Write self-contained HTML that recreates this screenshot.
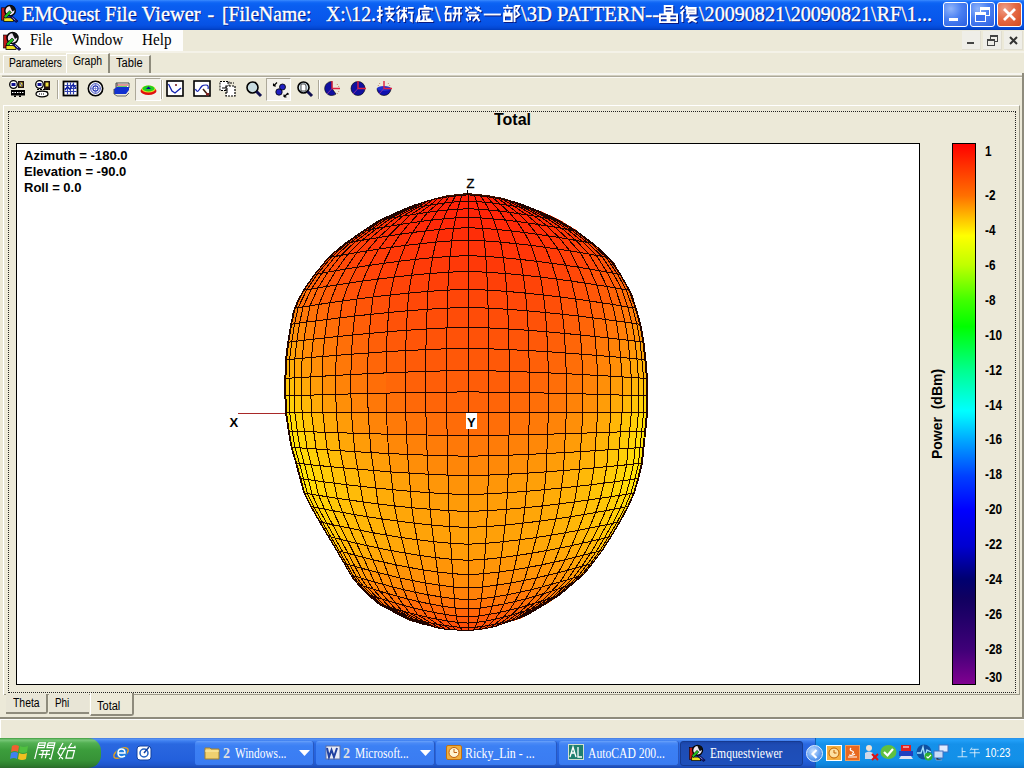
<!DOCTYPE html><html><head><meta charset="utf-8"><style>
*{margin:0;padding:0;box-sizing:border-box}
html,body{width:1024px;height:768px;overflow:hidden;background:#ECE9D8}
body{position:relative;font-family:"Liberation Sans",sans-serif;}
.a{position:absolute}
</style></head><body><div class="a" style="left:0;top:0;width:1024px;height:30px;background:linear-gradient(#3d90ff 0px,#2475fa 1px,#0c64f4 3px,#0a5ef0 6px,#0858ec 18px,#0652e4 25px,#0448d4 28px,#003cbc 30px)"></div>
<svg class="a" style="left:1px;top:4px" width="19" height="19" viewBox="0 0 20 20"><rect x="0.5" y="4" width="4" height="13" fill="#c01818" stroke="#000" stroke-width="0.6"/><rect x="3" y="14.5" width="10" height="4" fill="#f0e020" stroke="#000" stroke-width="0.8"/><circle cx="9.5" cy="7" r="5.5" fill="#f0e8f0" stroke="#000" stroke-width="1.5"/><path d="M9 1.5Q14 1 15 6L12 8L10 4Z" fill="#111"/><path d="M3 13L9 7L11 9L5 15Z" fill="#20c020" stroke="#000" stroke-width="0.6"/><path d="M11 12L18 18L16 19.5L9.5 14Z" fill="#101070" stroke="#000" stroke-width="0.5"/><path d="M12 14L15 17" stroke="#c0c0ff" stroke-width="0.8"/></svg>
<div class="a" style="left:22px;top:4.25px;font:20px/20px 'Liberation Serif',serif;color:#fff;white-space:nowrap;transform:scaleX(1.0175);transform-origin:0 0;text-shadow:1px 1px 0 #0a1a80;-webkit-text-stroke:0.35px #fff;">EMQuest&nbsp;File&nbsp;Viewer</div>
<div class="a" style="left:207.5px;top:4.25px;font:20px/20px 'Liberation Serif',serif;color:#fff;white-space:nowrap;text-shadow:1px 1px 0 #0a1a80;-webkit-text-stroke:0.35px #fff;">-</div>
<div class="a" style="left:221.5px;top:4.25px;font:20px/20px 'Liberation Serif',serif;color:#fff;white-space:nowrap;transform:scaleX(0.9826);transform-origin:0 0;text-shadow:1px 1px 0 #0a1a80;-webkit-text-stroke:0.35px #fff;">[FileName:</div>
<div class="a" style="left:326px;top:4.25px;font:20px/20px 'Liberation Serif',serif;color:#fff;white-space:nowrap;transform:scaleX(0.9890);transform-origin:0 0;text-shadow:1px 1px 0 #0a1a80;-webkit-text-stroke:0.35px #fff;">X:\12.</div>
<svg class="a" style="left:376px;top:5px;overflow:visible" width="58.800000000000004" height="19"><path transform="translate(1 1) translate(0.0 0) scale(0.95)" d="M1 6H7M4 1V17L2 16M1 13L7 10M9 4H19M14 1V8M10 9H18L11 17M12 11L19 17" fill="none" stroke="#0a1a80" stroke-width="2.0"/><path transform="translate(0.0 0) scale(0.95)" d="M1 6H7M4 1V17L2 16M1 13L7 10M9 4H19M14 1V8M10 9H18L11 17M12 11L19 17" fill="none" stroke="#fff" stroke-width="2.0"/><path transform="translate(1 1) translate(19.6 0) scale(0.95)" d="M4 1L1 4M5 5L1 9M3 8V18M6 6H12M9 2V18M8 9L5 15M10 9L12 14M11 3L12 4M13 3H19M13 8H19M17 8V17L15 16" fill="none" stroke="#0a1a80" stroke-width="2.0"/><path transform="translate(19.6 0) scale(0.95)" d="M4 1L1 4M5 5L1 9M3 8V18M6 6H12M9 2V18M8 9L5 15M10 9L12 14M11 3L12 4M13 3H19M13 8H19M17 8V17L15 16" fill="none" stroke="#fff" stroke-width="2.0"/><path transform="translate(1 1) translate(39.2 0) scale(0.95)" d="M10 0V3H15M4 4H18V6M4 4V10L1 18M7 7H15M7 10H15M5 11L4 17H19M9 10V15L7 17M12 10V14Q12 16 17 15" fill="none" stroke="#0a1a80" stroke-width="2.0"/><path transform="translate(39.2 0) scale(0.95)" d="M10 0V3H15M4 4H18V6M4 4V10L1 18M7 7H15M7 10H15M5 11L4 17H19M9 10V15L7 17M12 10V14Q12 16 17 15" fill="none" stroke="#fff" stroke-width="2.0"/></svg>
<div class="a" style="left:435px;top:4.25px;font:20px/20px 'Liberation Serif',serif;color:#fff;white-space:nowrap;text-shadow:1px 1px 0 #0a1a80;-webkit-text-stroke:0.35px #fff;">\</div>
<svg class="a" style="left:444px;top:5px;overflow:visible" width="77.6" height="19"><path transform="translate(1 1) translate(0.0 0) scale(0.95)" d="M1 2H8M4 2L1 10M2 9H7V16H2V9M10 3H19M9 9H19M12 3V11L10 17M16 3V17" fill="none" stroke="#0a1a80" stroke-width="2.0"/><path transform="translate(0.0 0) scale(0.95)" d="M1 2H8M4 2L1 10M2 9H7V16H2V9M10 3H19M9 9H19M12 3V11L10 17M16 3V17" fill="none" stroke="#fff" stroke-width="2.0"/><path transform="translate(1 1) translate(19.4 0) scale(0.95)" d="M2 2L5 5L2 7M6 2L9 4M12 2L16 6M17 2L14 4L19 7M5 8H14M4 11H15M3 14L5 17M7 10V16M12 10L17 17M16 10L10 17" fill="none" stroke="#0a1a80" stroke-width="2.0"/><path transform="translate(19.4 0) scale(0.95)" d="M2 2L5 5L2 7M6 2L9 4M12 2L16 6M17 2L14 4L19 7M5 8H14M4 11H15M3 14L5 17M7 10V16M12 10L17 17M16 10L10 17" fill="none" stroke="#fff" stroke-width="2.0"/><path transform="translate(1 1) translate(38.8 0) scale(0.95)" d="M1 10H19" fill="none" stroke="#0a1a80" stroke-width="2.0"/><path transform="translate(38.8 0) scale(0.95)" d="M1 10H19" fill="none" stroke="#fff" stroke-width="2.0"/><path transform="translate(1 1) translate(58.199999999999996 0) scale(0.95)" d="M5 0L6 2M1 3H11M3 5L4 8M8 5L7 8M1 9H11M2 11H10V17H2ZM13 1V18M13 1H18L15 6L18 10L14 13" fill="none" stroke="#0a1a80" stroke-width="2.0"/><path transform="translate(58.199999999999996 0) scale(0.95)" d="M5 0L6 2M1 3H11M3 5L4 8M8 5L7 8M1 9H11M2 11H10V17H2ZM13 1V18M13 1H18L15 6L18 10L14 13" fill="none" stroke="#fff" stroke-width="2.0"/></svg>
<div class="a" style="left:521px;top:4.25px;font:20px/20px 'Liberation Serif',serif;color:#fff;white-space:nowrap;transform:scaleX(1.0278);transform-origin:0 0;text-shadow:1px 1px 0 #0a1a80;-webkit-text-stroke:0.35px #fff;">\3D&nbsp;PATTERN--</div>
<svg class="a" style="left:659px;top:5px;overflow:visible" width="41.0" height="19"><path transform="translate(1 1) translate(0.0 0) scale(0.95)" d="M6 1H14V8H6ZM6 4.5H14M1 10H9V18H1ZM1 14H9M11 10H19V18H11ZM11 14H19" fill="none" stroke="#0a1a80" stroke-width="2.0"/><path transform="translate(0.0 0) scale(0.95)" d="M6 1H14V8H6ZM6 4.5H14M1 10H9V18H1ZM1 14H9M11 10H19V18H11ZM11 14H19" fill="none" stroke="#fff" stroke-width="2.0"/><path transform="translate(1 1) translate(20.5 0) scale(0.95)" d="M4 1L1 4M5 5L1 9M3 8V18M8 1L7 3H18M8 4H17V9H8ZM8 6.5H17M10 10L8 13H17L9 18M10 14L18 18" fill="none" stroke="#0a1a80" stroke-width="2.0"/><path transform="translate(20.5 0) scale(0.95)" d="M4 1L1 4M5 5L1 9M3 8V18M8 1L7 3H18M8 4H17V9H8ZM8 6.5H17M10 10L8 13H17L9 18M10 14L18 18" fill="none" stroke="#fff" stroke-width="2.0"/></svg>
<div class="a" style="left:699px;top:4.25px;font:20px/20px 'Liberation Serif',serif;color:#fff;white-space:nowrap;transform:scaleX(1.0057);transform-origin:0 0;text-shadow:1px 1px 0 #0a1a80;-webkit-text-stroke:0.35px #fff;">\20090821\20090821\RF\1...</div>
<div class="a" style="left:943px;top:2px;width:25px;height:25px;border:1px solid #fff;border-radius:3px;background:radial-gradient(circle at 30% 25%,#8fb4fb 0%,#4a80f2 45%,#2a5ee0 100%)"><div class="a" style="left:5px;top:15px;width:9px;height:3px;background:#fff"></div></div>
<div class="a" style="left:970px;top:2px;width:25px;height:25px;border:1px solid #fff;border-radius:3px;background:radial-gradient(circle at 30% 25%,#8fb4fb 0%,#4a80f2 45%,#2a5ee0 100%)"><div class="a" style="left:9px;top:4px;width:10px;height:9px;border:1px solid #fff;border-top-width:3px"></div><div class="a" style="left:4px;top:9px;width:11px;height:10px;border:1px solid #fff;border-top-width:3px;background:#3a70ee"></div></div>
<div class="a" style="left:997px;top:2px;width:25px;height:25px;border:1px solid #fff;border-radius:3px;background:radial-gradient(circle at 30% 25%,#f0a08a 0%,#e56a45 45%,#d04a20 100%)"><svg class="a" style="left:0;top:0" width="23" height="23"><path d="M6 6L17 17M17 6L6 17" stroke="#fff" stroke-width="2.8"/></svg></div>
<div class="a" style="left:0;top:30px;width:183px;height:22px;background:#fdfdfc"></div>
<div class="a" style="left:0;top:51px;width:1024px;height:2px;background:#f4f2e8"></div>
<svg class="a" style="left:3px;top:31px" width="20" height="20" viewBox="0 0 20 20"><rect x="0.5" y="4" width="4" height="13" fill="#c01818" stroke="#000" stroke-width="0.6"/><rect x="3" y="14.5" width="10" height="4" fill="#f0e020" stroke="#000" stroke-width="0.8"/><circle cx="9.5" cy="7" r="5.5" fill="#f0e8f0" stroke="#000" stroke-width="1.5"/><path d="M9 1.5Q14 1 15 6L12 8L10 4Z" fill="#111"/><path d="M3 13L9 7L11 9L5 15Z" fill="#20c020" stroke="#000" stroke-width="0.6"/><path d="M11 12L18 18L16 19.5L9.5 14Z" fill="#101070" stroke="#000" stroke-width="0.5"/><path d="M12 14L15 17" stroke="#c0c0ff" stroke-width="0.8"/></svg>
<div class="a" style="left:29.5px;top:31.60px;font:16px/16px 'Liberation Serif',serif;color:#000;white-space:nowrap;transform:scaleX(0.9040);transform-origin:0 0;">File</div>
<div class="a" style="left:71.5px;top:31.60px;font:16px/16px 'Liberation Serif',serif;color:#000;white-space:nowrap;transform:scaleX(0.9365);transform-origin:0 0;">Window</div>
<div class="a" style="left:141.5px;top:31.60px;font:16px/16px 'Liberation Serif',serif;color:#000;white-space:nowrap;transform:scaleX(0.9485);transform-origin:0 0;">Help</div>
<div class="a" style="left:962px;top:31px;width:19px;height:19px;background:#efeee8;border-right:1px solid #e0ddd0;border-bottom:1px solid #e0ddd0"></div>
<div class="a" style="left:983px;top:31px;width:19px;height:19px;background:#efeee8;border-right:1px solid #e0ddd0;border-bottom:1px solid #e0ddd0"></div>
<div class="a" style="left:1004px;top:31px;width:19px;height:19px;background:#efeee8;border-right:1px solid #e0ddd0;border-bottom:1px solid #e0ddd0"></div>
<div class="a" style="left:967px;top:42px;width:7px;height:2px;background:#444"></div>
<div class="a" style="left:990px;top:35px;width:8px;height:7px;border:1px solid #444;border-top-width:2px"></div>
<div class="a" style="left:987px;top:39px;width:8px;height:7px;border:1px solid #444;border-top-width:2px;background:#efeee8"></div>
<svg class="a" style="left:1004px;top:31px" width="19" height="19"><path d="M6 6L13 13M13 6L6 13" stroke="#333" stroke-width="2"/></svg>
<div class="a" style="left:0;top:53px;width:1024px;height:23px;background:#ECE9D8"></div>
<div class="a" style="left:3px;top:55px;width:63px;height:18px;background:#e8e5d6;border-left:1px solid #fff;border-top:1px solid #fff"></div>
<div class="a" style="left:8.5px;top:57.44px;font:12px/12px 'Liberation Sans',sans-serif;color:#000;white-space:nowrap;transform:scaleX(0.8545);transform-origin:0 0;">Parameters</div>
<div class="a" style="left:66px;top:53px;width:44px;height:21px;background:#ECE9D8;border-left:1px solid #fff;border-top:1px solid #fff;border-right:2px solid #8e8b7c"></div>
<div class="a" style="left:73.4px;top:55.34px;font:12px/12px 'Liberation Sans',sans-serif;color:#000;white-space:nowrap;transform:scaleX(0.8695);transform-origin:0 0;">Graph</div>
<div class="a" style="left:110px;top:55px;width:41px;height:18px;background:#e8e5d6;border-top:1px solid #fff;border-right:2px solid #8e8b7c"></div>
<div class="a" style="left:115.6px;top:57.34px;font:12px/12px 'Liberation Sans',sans-serif;color:#000;white-space:nowrap;transform:scaleX(0.9272);transform-origin:0 0;">Table</div>
<div class="a" style="left:0;top:73px;width:1024px;height:2px;background:#f6f5ef"></div>
<div class="a" style="left:2px;top:75px;width:1020px;height:1px;background:#d0cdbd"></div>
<div class="a" style="left:2px;top:76px;width:1020px;height:1px;background:#aca899"></div>
<div class="a" style="left:2px;top:77px;width:1022px;height:1px;background:#fbfaf5"></div>
<svg class="a" style="left:9px;top:80px;overflow:visible" width="17" height="17" viewBox="0 0 17 17"><circle cx="4.5" cy="4.5" r="3.8" fill="#fff" stroke="#000" stroke-width="1.3"/><rect x="2.5" y="3" width="4" height="3" fill="#101090"/><rect x="9" y="1" width="6" height="7" fill="#201010"/><rect x="10.5" y="2.5" width="3" height="4" fill="#f0e040"/><path d="M11 3L13 6" stroke="#4040c0"/><rect x="2" y="10" width="14" height="5.5" fill="#000"/><path d="M3 12.5H15" stroke="#fff" stroke-dasharray="1.5 1"/><rect x="5" y="15.5" width="2" height="1.5" fill="#000"/><rect x="10" y="15.5" width="2" height="1.5" fill="#000"/></svg>
<svg class="a" style="left:35px;top:80px;overflow:visible" width="17" height="17" viewBox="0 0 17 17"><circle cx="4.5" cy="4.5" r="3.8" fill="#fff" stroke="#000" stroke-width="1.3"/><rect x="2.5" y="3" width="4" height="3" fill="#101090"/><rect x="9" y="1" width="6" height="9" fill="#201010"/><rect x="10.5" y="2.5" width="3" height="4" fill="#f0e040"/><path d="M2 9.5H15M2 12H14" stroke="#000" stroke-width="1.2" stroke-dasharray="2 1"/><ellipse cx="7" cy="14" rx="6" ry="2.8" fill="#fff" stroke="#000" stroke-width="1.3"/><path d="M4 14H10" stroke="#000" stroke-dasharray="1 1"/></svg>
<div class="a" style="left:57px;top:80px;width:1px;height:19px;background:#aca899"></div>
<div class="a" style="left:58px;top:80px;width:1px;height:19px;background:#fff"></div>
<svg class="a" style="left:62px;top:80px;overflow:visible" width="17" height="17" viewBox="0 0 17 17"><rect x="1.5" y="1.5" width="14" height="14" fill="#fff" stroke="#000" stroke-width="1.8"/><path d="M2.5 5.5H14.5M2.5 8.5H14.5M2.5 11.5H14.5M5.5 2.5V14.5M8.5 2.5V14.5M11.5 2.5V14.5" stroke="#3040b0" stroke-width="1.2"/><path d="M3 10L5.5 6.5L8 9.5L11 4.5L14 8" stroke="#1020a0" stroke-width="1.3" fill="none"/></svg>
<svg class="a" style="left:87px;top:80px;overflow:visible" width="17" height="17" viewBox="0 0 17 17"><circle cx="8.5" cy="8.5" r="7.2" fill="#fff" stroke="#000" stroke-width="1.6"/><circle cx="8.5" cy="8.5" r="4.8" fill="none" stroke="#2030b0" stroke-width="0.9"/><circle cx="8.5" cy="8.5" r="2.6" fill="none" stroke="#2030b0" stroke-width="1.1"/><path d="M3 8.5H14M8.5 3V14" stroke="#5060c0" stroke-width="0.6"/></svg>
<svg class="a" style="left:113px;top:80px;overflow:visible" width="17" height="17" viewBox="0 0 17 17"><path d="M3 3H16V8H3Z" fill="#fff" stroke="#222" stroke-width="0.8"/><path d="M4 5H15" stroke="#c03030"/><path d="M5 7H14" stroke="#30c030" stroke-width="1.5"/><path d="M1 9L4 7H16V10L13 14H1Z" fill="#1030d0"/><path d="M1 14L4 16H13L16 13" stroke="#666" fill="none"/><path d="M1 9V14M4 7V3" stroke="#555"/></svg>
<div class="a" style="left:161px;top:80px;width:1px;height:19px;background:#aca899"></div>
<div class="a" style="left:162px;top:80px;width:1px;height:19px;background:#fff"></div>
<div class="a" style="left:135px;top:78px;width:26px;height:23px;background:#f3f1ea;border-left:1px solid #aca899;border-top:1px solid #aca899;border-right:1px solid #fff;border-bottom:1px solid #fff"></div>
<svg class="a" style="left:140px;top:80px;overflow:visible" width="17" height="17" viewBox="0 0 17 17"><ellipse cx="8.5" cy="11" rx="8" ry="4" fill="#e01010"/><ellipse cx="8.5" cy="9" rx="7" ry="3.5" fill="#e0e020"/><ellipse cx="8.5" cy="8.5" rx="6" ry="3" fill="#20d020"/><path d="M6 9L8.5 6.5L11 9Z" fill="#101090"/></svg>
<svg class="a" style="left:166px;top:80px;overflow:visible" width="17" height="17" viewBox="0 0 17 17"><rect x="1" y="1" width="16" height="15" fill="#fff" stroke="#000" stroke-width="1.6"/><path d="M2.5 4L6 11L9 13L15 8" stroke="#1020b0" stroke-width="1.3" fill="none"/><path d="M9 5H11M10 4V6" stroke="#802020" stroke-width="1.2"/></svg>
<svg class="a" style="left:193px;top:80px;overflow:visible" width="17" height="17" viewBox="0 0 17 17"><rect x="1" y="1" width="16" height="15" fill="#fff" stroke="#000" stroke-width="1.6"/><path d="M2.5 9Q4 13 6 10T9 6T13 5T15 9" stroke="#1020b0" stroke-width="1.2" fill="none"/><path d="M10 9L15 15" stroke="#402010" stroke-width="1.6"/><rect x="13" y="13" width="3" height="2.5" fill="#802020"/></svg>
<svg class="a" style="left:219px;top:80px;overflow:visible" width="17" height="17" viewBox="0 0 17 17"><rect x="1" y="1.5" width="9" height="9" fill="#fff" stroke="#000" stroke-width="1" stroke-dasharray="2 1"/><rect x="7" y="6" width="9" height="10" fill="#fff" stroke="#000" stroke-width="1.2" stroke-dasharray="2 1"/><path d="M3 8H8V13" stroke="#000" fill="none"/><path d="M8 3H15" stroke="#000" stroke-dasharray="2 1"/></svg>
<svg class="a" style="left:246px;top:81px;overflow:visible" width="17" height="17" viewBox="0 0 17 17"><circle cx="6.5" cy="6.5" r="5.5" fill="#c8dce0" stroke="#000" stroke-width="1.6"/><path d="M10.5 10.5L15 15" stroke="#101050" stroke-width="3"/></svg>
<div class="a" style="left:266px;top:78px;width:25px;height:23px;background:#f3f1ea;border-left:1px solid #aca899;border-top:1px solid #aca899;border-right:1px solid #fff;border-bottom:1px solid #fff"></div>
<svg class="a" style="left:272px;top:81px;overflow:visible" width="17" height="17" viewBox="0 0 17 17"><circle cx="7" cy="11" r="3.2" fill="#2020c0" stroke="#000" stroke-width="0.8"/><circle cx="10.5" cy="6" r="3" fill="#2020c0" stroke="#000" stroke-width="0.8"/><path d="M1.5 5L5 1.5M1.5 5V2.5M1.5 5H4M12 16L16 12M12 16H14.5M12 16V13.5M16 12V14" stroke="#000" stroke-width="1.1" fill="none"/></svg>
<svg class="a" style="left:297px;top:81px;overflow:visible" width="17" height="17" viewBox="0 0 17 17"><circle cx="6.5" cy="6.5" r="5.5" fill="#d8e8f0" stroke="#000" stroke-width="1.6"/><path d="M4 3H8L9 5V10H4Z" fill="#fff" stroke="#222" stroke-width="0.8"/><path d="M10.5 10.5L15 15" stroke="#101050" stroke-width="3"/></svg>
<div class="a" style="left:318px;top:80px;width:1px;height:19px;background:#aca899"></div>
<div class="a" style="left:319px;top:80px;width:1px;height:19px;background:#fff"></div>
<svg class="a" style="left:324px;top:80px;overflow:visible" width="17" height="17" viewBox="0 0 17 17"><path d="M8 1.5A7 7 0 1 0 12 14L8 8.5Z" fill="#1010a0" stroke="#000" stroke-width="0.6"/><path d="M13 4L15 7M15 11L13 14" stroke="#c08060" stroke-dasharray="1 1.5"/><path d="M8 1V8.5H16" stroke="#e02040" stroke-width="1.4" fill="none"/><path d="M8 8.5L3 14" stroke="#9030a0" stroke-width="0.9"/></svg>
<svg class="a" style="left:350px;top:80px;overflow:visible" width="17" height="17" viewBox="0 0 17 17"><circle cx="8" cy="8.5" r="7" fill="#1010a0" stroke="#000" stroke-width="0.6"/><path d="M8 1V8.5H16" stroke="#e02040" stroke-width="1.4" fill="none"/><path d="M8 8.5L3 14" stroke="#9030a0" stroke-width="0.9"/></svg>
<svg class="a" style="left:376px;top:80px;overflow:visible" width="17" height="17" viewBox="0 0 17 17"><path d="M1 8.5A7 7 0 0 0 15 8.5Z" fill="#1010b0" stroke="#000" stroke-width="0.6"/><ellipse cx="8" cy="8.5" rx="7" ry="2.5" fill="#2030d0"/><path d="M2 6L4 3M12 3L14 6" stroke="#c08060" stroke-dasharray="1 1.5"/><path d="M8 1V8.5H16" stroke="#e02040" stroke-width="1.4" fill="none"/><path d="M8 8.5L3 14" stroke="#9030a0" stroke-width="0.9"/></svg>
<div class="a" style="left:3px;top:105px;width:1017px;height:590px;border-left:1px solid #fff;border-top:1px solid #fff;border-right:1px solid #9d9a8a;border-bottom:0"></div>
<div class="a" style="left:1022px;top:73px;width:2px;height:646px;background:#8e8b7c"></div>
<div class="a" style="left:8px;top:111px;width:1008px;height:582px;border:1px dotted #222"></div>
<div class="a" style="left:493.5px;top:112.26px;font:bold 16px/16px 'Liberation Sans',sans-serif;color:#000;white-space:nowrap;transform:scaleX(0.9992);transform-origin:0 0;">Total</div>
<div class="a" style="left:16px;top:143px;width:904px;height:542px;background:#fff;border:1px solid #000"></div>
<div class="a" style="left:24px;top:149.00px;font:bold 13px/13px 'Liberation Sans',sans-serif;color:#000;white-space:nowrap;transform:scaleX(1.0064);transform-origin:0 0;">Azimuth&nbsp;=&nbsp;-180.0</div>
<div class="a" style="left:24px;top:165.00px;font:bold 13px/13px 'Liberation Sans',sans-serif;color:#000;white-space:nowrap;">Elevation&nbsp;=&nbsp;-90.0</div>
<div class="a" style="left:24px;top:181.00px;font:bold 13px/13px 'Liberation Sans',sans-serif;color:#000;white-space:nowrap;">Roll&nbsp;=&nbsp;0.0</div>
<div class="a" style="left:952px;top:143px;width:24px;height:542px;border:1px solid #000;background:linear-gradient(#ff0000 0%,#ff3000 4%,#ff7000 9.6%,#ffb000 12.9%,#ffff00 17%,#c0ff00 22.4%,#40ff00 29%,#00ff00 33.8%,#00ff90 42%,#00ffff 49.4%,#00f0ff 50.5%,#00a0ff 55.3%,#0040ff 61.5%,#0000ff 67.7%,#0000d0 74.5%,#000070 80.6%,#100060 84.1%,#200068 87.5%,#400078 93.7%,#800090 100%)"></div>
<div class="a" style="left:984.5px;top:144.15px;font:bold 14px/14px 'Liberation Sans',sans-serif;color:#000;white-space:nowrap;transform:scaleX(0.84);transform-origin:0 0;">1</div>
<div class="a" style="left:984.5px;top:188.10px;font:bold 14px/14px 'Liberation Sans',sans-serif;color:#000;white-space:nowrap;transform:scaleX(0.84);transform-origin:0 0;">-2</div>
<div class="a" style="left:984.5px;top:223.00px;font:bold 14px/14px 'Liberation Sans',sans-serif;color:#000;white-space:nowrap;transform:scaleX(0.84);transform-origin:0 0;">-4</div>
<div class="a" style="left:984.5px;top:257.90px;font:bold 14px/14px 'Liberation Sans',sans-serif;color:#000;white-space:nowrap;transform:scaleX(0.84);transform-origin:0 0;">-6</div>
<div class="a" style="left:984.5px;top:292.80px;font:bold 14px/14px 'Liberation Sans',sans-serif;color:#000;white-space:nowrap;transform:scaleX(0.84);transform-origin:0 0;">-8</div>
<div class="a" style="left:984.5px;top:327.70px;font:bold 14px/14px 'Liberation Sans',sans-serif;color:#000;white-space:nowrap;transform:scaleX(0.84);transform-origin:0 0;">-10</div>
<div class="a" style="left:984.5px;top:362.60px;font:bold 14px/14px 'Liberation Sans',sans-serif;color:#000;white-space:nowrap;transform:scaleX(0.84);transform-origin:0 0;">-12</div>
<div class="a" style="left:984.5px;top:397.50px;font:bold 14px/14px 'Liberation Sans',sans-serif;color:#000;white-space:nowrap;transform:scaleX(0.84);transform-origin:0 0;">-14</div>
<div class="a" style="left:984.5px;top:432.40px;font:bold 14px/14px 'Liberation Sans',sans-serif;color:#000;white-space:nowrap;transform:scaleX(0.84);transform-origin:0 0;">-16</div>
<div class="a" style="left:984.5px;top:467.30px;font:bold 14px/14px 'Liberation Sans',sans-serif;color:#000;white-space:nowrap;transform:scaleX(0.84);transform-origin:0 0;">-18</div>
<div class="a" style="left:984.5px;top:502.20px;font:bold 14px/14px 'Liberation Sans',sans-serif;color:#000;white-space:nowrap;transform:scaleX(0.84);transform-origin:0 0;">-20</div>
<div class="a" style="left:984.5px;top:537.10px;font:bold 14px/14px 'Liberation Sans',sans-serif;color:#000;white-space:nowrap;transform:scaleX(0.84);transform-origin:0 0;">-22</div>
<div class="a" style="left:984.5px;top:572.00px;font:bold 14px/14px 'Liberation Sans',sans-serif;color:#000;white-space:nowrap;transform:scaleX(0.84);transform-origin:0 0;">-24</div>
<div class="a" style="left:984.5px;top:606.90px;font:bold 14px/14px 'Liberation Sans',sans-serif;color:#000;white-space:nowrap;transform:scaleX(0.84);transform-origin:0 0;">-26</div>
<div class="a" style="left:984.5px;top:641.80px;font:bold 14px/14px 'Liberation Sans',sans-serif;color:#000;white-space:nowrap;transform:scaleX(0.84);transform-origin:0 0;">-28</div>
<div class="a" style="left:984.5px;top:669.75px;font:bold 14px/14px 'Liberation Sans',sans-serif;color:#000;white-space:nowrap;transform:scaleX(0.84);transform-origin:0 0;">-30</div>
<div class="a" style="left:937px;top:413.5px;font:bold 14px/14px 'Liberation Sans',sans-serif;white-space:nowrap;transform:translate(-50%,-50%) rotate(-90deg);">Power&nbsp;&nbsp;(dBm)</div>
<svg class="a" style="left:0;top:0" width="1024" height="768" viewBox="0 0 1024 768" shape-rendering="crispEdges">
<path d="M467.7 193.0L447.2 195.3L432.5 198.9L412.0 205.5L391.5 214.3L379.0 220.0L363.3 230.4L347.7 240.8L334.7 251.2L324.3 261.7L313.9 274.7L304.7 287.7L296.9 300.7L292.4 313.8L285.8 354.0L284.6 387.5L285.8 416.7L291.0 447.0L296.4 465.6L303.7 492.9L312.8 511.0L323.8 529.4L334.7 547.6L342.0 560.0L353.0 579.5L376.0 602.8L409.6 621.0L442.9 629.4L466.0 631.0L468.0 631.0L468.0 631.0L470.0 631.0L492.6 627.7L526.0 616.0L559.0 596.0L585.7 573.0L605.6 546.3L625.6 513.0L635.0 491.7L642.0 466.7L645.4 433.0L647.5 416.7L647.5 375.0L643.0 333.0L633.0 296.0L614.0 262.5L599.2 248.0L584.5 236.3L569.9 226.0L547.9 214.3L526.0 205.5L504.0 198.2L489.3 195.3L467.3 193.0Z" fill="#3a1000"/>
<path d="M413.0 205.5L413.3 205.4L399.3 211.2L399.0 211.4Z" fill="#ff3208" stroke="#ff3208" stroke-width="0.6"/>
<path d="M413.3 205.4L414.2 205.1L400.5 210.8L399.3 211.2Z" fill="#ff3108" stroke="#ff3108" stroke-width="0.6"/>
<path d="M414.2 205.1L415.8 204.6L402.4 210.4L400.5 210.8Z" fill="#ff3008" stroke="#ff3008" stroke-width="0.6"/>
<path d="M415.8 204.6L418.0 203.9L405.2 209.8L402.4 210.4Z" fill="#ff2e08" stroke="#ff2e08" stroke-width="0.6"/>
<path d="M418.0 203.9L420.8 203.0L408.8 209.0L405.2 209.8Z" fill="#ff2c08" stroke="#ff2c08" stroke-width="0.6"/>
<path d="M420.8 203.0L424.2 201.9L413.1 208.2L408.8 209.0Z" fill="#ff2a08" stroke="#ff2a08" stroke-width="0.6"/>
<path d="M424.2 201.9L428.3 200.6L418.1 207.2L413.1 208.2Z" fill="#ff2808" stroke="#ff2808" stroke-width="0.6"/>
<path d="M428.3 200.6L432.8 199.5L423.8 206.2L418.1 207.2Z" fill="#ff2608" stroke="#ff2608" stroke-width="0.6"/>
<path d="M432.8 199.5L437.9 198.5L430.2 205.2L423.8 206.2Z" fill="#ff2408" stroke="#ff2408" stroke-width="0.6"/>
<path d="M437.9 198.5L443.4 197.6L437.1 204.1L430.2 205.2Z" fill="#ff2308" stroke="#ff2308" stroke-width="0.6"/>
<path d="M443.4 197.6L449.2 196.7L444.4 203.1L437.1 204.1Z" fill="#ff2208" stroke="#ff2208" stroke-width="0.6"/>
<path d="M449.2 196.7L455.3 195.9L452.1 202.2L444.4 203.1Z" fill="#ff2108" stroke="#ff2108" stroke-width="0.6"/>
<path d="M455.3 195.9L461.6 195.3L460.0 201.5L452.1 202.2Z" fill="#ff2108" stroke="#ff2108" stroke-width="0.6"/>
<path d="M461.6 195.3L468.0 194.9L468.0 201.1L460.0 201.5Z" fill="#ff2108" stroke="#ff2108" stroke-width="0.6"/>
<path d="M468.0 194.9L474.4 195.3L476.4 201.5L468.0 201.1Z" fill="#ff2108" stroke="#ff2108" stroke-width="0.6"/>
<path d="M474.4 195.3L480.7 195.9L484.6 202.2L476.4 201.5Z" fill="#ff2108" stroke="#ff2108" stroke-width="0.6"/>
<path d="M480.7 195.9L486.8 196.7L492.6 203.1L484.6 202.2Z" fill="#ff2108" stroke="#ff2108" stroke-width="0.6"/>
<path d="M486.8 196.7L492.6 197.6L500.2 204.1L492.6 203.1Z" fill="#ff2208" stroke="#ff2208" stroke-width="0.6"/>
<path d="M492.6 197.6L498.1 198.5L507.4 205.2L500.2 204.1Z" fill="#ff2308" stroke="#ff2308" stroke-width="0.6"/>
<path d="M498.1 198.5L503.2 199.5L514.0 206.2L507.4 205.2Z" fill="#ff2408" stroke="#ff2408" stroke-width="0.6"/>
<path d="M503.2 199.5L507.7 200.4L520.0 207.2L514.0 206.2Z" fill="#ff2608" stroke="#ff2608" stroke-width="0.6"/>
<path d="M507.7 200.4L511.8 201.3L525.2 208.2L520.0 207.2Z" fill="#ff2808" stroke="#ff2808" stroke-width="0.6"/>
<path d="M511.8 201.3L515.2 202.2L529.7 209.0L525.2 208.2Z" fill="#ff2a08" stroke="#ff2a08" stroke-width="0.6"/>
<path d="M515.2 202.2L518.0 203.2L533.4 209.8L529.7 209.0Z" fill="#ff2c08" stroke="#ff2c08" stroke-width="0.6"/>
<path d="M518.0 203.2L520.2 203.9L536.3 210.4L533.4 209.8Z" fill="#ff2e08" stroke="#ff2e08" stroke-width="0.6"/>
<path d="M520.2 203.9L521.8 204.4L538.3 210.8L536.3 210.4Z" fill="#ff3008" stroke="#ff3008" stroke-width="0.6"/>
<path d="M521.8 204.4L522.7 204.7L539.5 211.2L538.3 210.8Z" fill="#ff3108" stroke="#ff3108" stroke-width="0.6"/>
<path d="M522.7 204.7L523.0 204.8L539.9 211.4L539.5 211.2Z" fill="#ff3208" stroke="#ff3208" stroke-width="0.6"/>
<path d="M399.0 211.4L399.3 211.2L378.4 220.7L377.9 221.1Z" fill="#ff3808" stroke="#ff3808" stroke-width="0.6"/>
<path d="M399.3 211.2L400.5 210.8L379.9 220.4L378.4 220.7Z" fill="#ff3708" stroke="#ff3708" stroke-width="0.6"/>
<path d="M400.5 210.8L402.4 210.4L382.4 219.9L379.9 220.4Z" fill="#ff3508" stroke="#ff3508" stroke-width="0.6"/>
<path d="M402.4 210.4L405.2 209.8L386.0 219.2L382.4 219.9Z" fill="#ff3308" stroke="#ff3308" stroke-width="0.6"/>
<path d="M405.2 209.8L408.8 209.0L390.7 218.3L386.0 219.2Z" fill="#ff3108" stroke="#ff3108" stroke-width="0.6"/>
<path d="M408.8 209.0L413.1 208.2L396.3 217.3L390.7 218.3Z" fill="#ff2e08" stroke="#ff2e08" stroke-width="0.6"/>
<path d="M413.1 208.2L418.1 207.2L402.9 216.1L396.3 217.3Z" fill="#ff2c08" stroke="#ff2c08" stroke-width="0.6"/>
<path d="M418.1 207.2L423.8 206.2L410.4 214.9L402.9 216.1Z" fill="#ff2908" stroke="#ff2908" stroke-width="0.6"/>
<path d="M423.8 206.2L430.2 205.2L418.6 213.6L410.4 214.9Z" fill="#ff2708" stroke="#ff2708" stroke-width="0.6"/>
<path d="M430.2 205.2L437.1 204.1L427.6 212.3L418.6 213.6Z" fill="#ff2608" stroke="#ff2608" stroke-width="0.6"/>
<path d="M437.1 204.1L444.4 203.1L437.2 211.1L427.6 212.3Z" fill="#ff2408" stroke="#ff2408" stroke-width="0.6"/>
<path d="M444.4 203.1L452.1 202.2L447.2 210.1L437.2 211.1Z" fill="#ff2308" stroke="#ff2308" stroke-width="0.6"/>
<path d="M452.1 202.2L460.0 201.5L457.5 209.2L447.2 210.1Z" fill="#ff2308" stroke="#ff2308" stroke-width="0.6"/>
<path d="M460.0 201.5L468.0 201.1L468.0 208.8L457.5 209.2Z" fill="#ff2308" stroke="#ff2308" stroke-width="0.6"/>
<path d="M468.0 201.1L476.4 201.5L478.7 209.2L468.0 208.8Z" fill="#ff2308" stroke="#ff2308" stroke-width="0.6"/>
<path d="M476.4 201.5L484.6 202.2L489.2 210.1L478.7 209.2Z" fill="#ff2308" stroke="#ff2308" stroke-width="0.6"/>
<path d="M484.6 202.2L492.6 203.1L499.5 211.1L489.2 210.1Z" fill="#ff2308" stroke="#ff2308" stroke-width="0.6"/>
<path d="M492.6 203.1L500.2 204.1L509.2 212.3L499.5 211.1Z" fill="#ff2408" stroke="#ff2408" stroke-width="0.6"/>
<path d="M500.2 204.1L507.4 205.2L518.4 213.6L509.2 212.3Z" fill="#ff2608" stroke="#ff2608" stroke-width="0.6"/>
<path d="M507.4 205.2L514.0 206.2L526.9 214.9L518.4 213.6Z" fill="#ff2708" stroke="#ff2708" stroke-width="0.6"/>
<path d="M514.0 206.2L520.0 207.2L534.5 216.1L526.9 214.9Z" fill="#ff2908" stroke="#ff2908" stroke-width="0.6"/>
<path d="M520.0 207.2L525.2 208.2L541.2 217.3L534.5 216.1Z" fill="#ff2c08" stroke="#ff2c08" stroke-width="0.6"/>
<path d="M525.2 208.2L529.7 209.0L547.0 218.3L541.2 217.3Z" fill="#ff2e08" stroke="#ff2e08" stroke-width="0.6"/>
<path d="M529.7 209.0L533.4 209.8L551.7 219.2L547.0 218.3Z" fill="#ff3108" stroke="#ff3108" stroke-width="0.6"/>
<path d="M533.4 209.8L536.3 210.4L555.4 219.9L551.7 219.2Z" fill="#ff3308" stroke="#ff3308" stroke-width="0.6"/>
<path d="M536.3 210.4L538.3 210.8L558.0 220.4L555.4 219.9Z" fill="#ff3508" stroke="#ff3508" stroke-width="0.6"/>
<path d="M538.3 210.8L539.5 211.2L559.5 220.8L558.0 220.4Z" fill="#ff3708" stroke="#ff3708" stroke-width="0.6"/>
<path d="M539.5 211.2L539.9 211.4L560.0 221.0L559.5 220.8Z" fill="#ff3808" stroke="#ff3808" stroke-width="0.6"/>
<path d="M377.9 221.1L378.4 220.7L362.5 231.2L361.9 231.6Z" fill="#ff3e08" stroke="#ff3e08" stroke-width="0.6"/>
<path d="M378.4 220.7L379.9 220.4L364.3 230.8L362.5 231.2Z" fill="#ff3c08" stroke="#ff3c08" stroke-width="0.6"/>
<path d="M379.9 220.4L382.4 219.9L367.3 230.3L364.3 230.8Z" fill="#ff3a08" stroke="#ff3a08" stroke-width="0.6"/>
<path d="M382.4 219.9L386.0 219.2L371.5 229.4L367.3 230.3Z" fill="#ff3808" stroke="#ff3808" stroke-width="0.6"/>
<path d="M386.0 219.2L390.7 218.3L377.0 228.4L371.5 229.4Z" fill="#ff3508" stroke="#ff3508" stroke-width="0.6"/>
<path d="M390.7 218.3L396.3 217.3L383.6 227.2L377.0 228.4Z" fill="#ff3208" stroke="#ff3208" stroke-width="0.6"/>
<path d="M396.3 217.3L402.9 216.1L391.4 225.9L383.6 227.2Z" fill="#ff2f08" stroke="#ff2f08" stroke-width="0.6"/>
<path d="M402.9 216.1L410.4 214.9L400.2 224.5L391.4 225.9Z" fill="#ff2d08" stroke="#ff2d08" stroke-width="0.6"/>
<path d="M410.4 214.9L418.6 213.6L409.9 223.0L400.2 224.5Z" fill="#ff2a08" stroke="#ff2a08" stroke-width="0.6"/>
<path d="M418.6 213.6L427.6 212.3L420.5 221.5L409.9 223.0Z" fill="#ff2808" stroke="#ff2808" stroke-width="0.6"/>
<path d="M427.6 212.3L437.2 211.1L431.7 220.1L420.5 221.5Z" fill="#ff2608" stroke="#ff2608" stroke-width="0.6"/>
<path d="M437.2 211.1L447.2 210.1L443.5 218.9L431.7 220.1Z" fill="#ff2508" stroke="#ff2508" stroke-width="0.6"/>
<path d="M447.2 210.1L457.5 209.2L455.7 217.9L443.5 218.9Z" fill="#ff2508" stroke="#ff2508" stroke-width="0.6"/>
<path d="M457.5 209.2L468.0 208.8L468.0 217.3L455.7 217.9Z" fill="#ff2508" stroke="#ff2508" stroke-width="0.6"/>
<path d="M468.0 208.8L478.7 209.2L480.7 217.9L468.0 217.3Z" fill="#ff2508" stroke="#ff2508" stroke-width="0.6"/>
<path d="M478.7 209.2L489.2 210.1L493.2 218.9L480.7 217.9Z" fill="#ff2508" stroke="#ff2508" stroke-width="0.6"/>
<path d="M489.2 210.1L499.5 211.1L505.4 220.1L493.2 218.9Z" fill="#ff2508" stroke="#ff2508" stroke-width="0.6"/>
<path d="M499.5 211.1L509.2 212.3L517.0 221.5L505.4 220.1Z" fill="#ff2608" stroke="#ff2608" stroke-width="0.6"/>
<path d="M509.2 212.3L518.4 213.6L527.9 223.0L517.0 221.5Z" fill="#ff2808" stroke="#ff2808" stroke-width="0.6"/>
<path d="M518.4 213.6L526.9 214.9L538.0 224.5L527.9 223.0Z" fill="#ff2a08" stroke="#ff2a08" stroke-width="0.6"/>
<path d="M526.9 214.9L534.5 216.1L547.0 225.9L538.0 224.5Z" fill="#ff2d08" stroke="#ff2d08" stroke-width="0.6"/>
<path d="M534.5 216.1L541.2 217.3L555.0 227.2L547.0 225.9Z" fill="#ff2f08" stroke="#ff2f08" stroke-width="0.6"/>
<path d="M541.2 217.3L547.0 218.3L561.9 228.4L555.0 227.2Z" fill="#ff3208" stroke="#ff3208" stroke-width="0.6"/>
<path d="M547.0 218.3L551.7 219.2L567.5 229.4L561.9 228.4Z" fill="#ff3508" stroke="#ff3508" stroke-width="0.6"/>
<path d="M551.7 219.2L555.4 219.9L571.9 230.3L567.5 229.4Z" fill="#ff3808" stroke="#ff3808" stroke-width="0.6"/>
<path d="M555.4 219.9L558.0 220.4L575.0 230.8L571.9 230.3Z" fill="#ff3a08" stroke="#ff3a08" stroke-width="0.6"/>
<path d="M558.0 220.4L559.5 220.8L576.8 231.2L575.0 230.8Z" fill="#ff3c08" stroke="#ff3c08" stroke-width="0.6"/>
<path d="M559.5 220.8L560.0 221.0L577.4 231.6L576.8 231.2Z" fill="#ff3e08" stroke="#ff3e08" stroke-width="0.6"/>
<path d="M361.9 231.6L362.5 231.2L344.8 243.6L344.1 244.0Z" fill="#ff4408" stroke="#ff4408" stroke-width="0.6"/>
<path d="M362.5 231.2L364.3 230.8L346.8 243.2L344.8 243.6Z" fill="#ff4208" stroke="#ff4208" stroke-width="0.6"/>
<path d="M364.3 230.8L367.3 230.3L350.4 242.5L346.8 243.2Z" fill="#ff4008" stroke="#ff4008" stroke-width="0.6"/>
<path d="M367.3 230.3L371.5 229.4L355.3 241.6L350.4 242.5Z" fill="#ff3d08" stroke="#ff3d08" stroke-width="0.6"/>
<path d="M371.5 229.4L377.0 228.4L361.7 240.4L355.3 241.6Z" fill="#ff3a08" stroke="#ff3a08" stroke-width="0.6"/>
<path d="M377.0 228.4L383.6 227.2L369.4 239.1L361.7 240.4Z" fill="#ff3708" stroke="#ff3708" stroke-width="0.6"/>
<path d="M383.6 227.2L391.4 225.9L378.5 237.5L369.4 239.1Z" fill="#ff3408" stroke="#ff3408" stroke-width="0.6"/>
<path d="M391.4 225.9L400.2 224.5L388.8 235.9L378.5 237.5Z" fill="#ff3108" stroke="#ff3108" stroke-width="0.6"/>
<path d="M400.2 224.5L409.9 223.0L400.1 234.2L388.8 235.9Z" fill="#ff2e08" stroke="#ff2e08" stroke-width="0.6"/>
<path d="M409.9 223.0L420.5 221.5L412.5 232.5L400.1 234.2Z" fill="#ff2c08" stroke="#ff2c08" stroke-width="0.6"/>
<path d="M420.5 221.5L431.7 220.1L425.6 230.9L412.5 232.5Z" fill="#ff2a08" stroke="#ff2a08" stroke-width="0.6"/>
<path d="M431.7 220.1L443.5 218.9L439.4 229.5L425.6 230.9Z" fill="#ff2908" stroke="#ff2908" stroke-width="0.6"/>
<path d="M443.5 218.9L455.7 217.9L453.6 228.3L439.4 229.5Z" fill="#ff2808" stroke="#ff2808" stroke-width="0.6"/>
<path d="M455.7 217.9L468.0 217.3L468.0 227.7L453.6 228.3Z" fill="#ff2808" stroke="#ff2808" stroke-width="0.6"/>
<path d="M468.0 217.3L480.7 217.9L482.6 228.3L468.0 227.7Z" fill="#ff2808" stroke="#ff2808" stroke-width="0.6"/>
<path d="M480.7 217.9L493.2 218.9L497.0 229.5L482.6 228.3Z" fill="#ff2808" stroke="#ff2808" stroke-width="0.6"/>
<path d="M493.2 218.9L505.4 220.1L511.0 230.9L497.0 229.5Z" fill="#ff2908" stroke="#ff2908" stroke-width="0.6"/>
<path d="M505.4 220.1L517.0 221.5L524.4 232.5L511.0 230.9Z" fill="#ff2a08" stroke="#ff2a08" stroke-width="0.6"/>
<path d="M517.0 221.5L527.9 223.0L536.9 234.2L524.4 232.5Z" fill="#ff2c08" stroke="#ff2c08" stroke-width="0.6"/>
<path d="M527.9 223.0L538.0 224.5L548.4 235.9L536.9 234.2Z" fill="#ff2e08" stroke="#ff2e08" stroke-width="0.6"/>
<path d="M538.0 224.5L547.0 225.9L558.9 237.5L548.4 235.9Z" fill="#ff3108" stroke="#ff3108" stroke-width="0.6"/>
<path d="M547.0 225.9L555.0 227.2L568.1 239.1L558.9 237.5Z" fill="#ff3408" stroke="#ff3408" stroke-width="0.6"/>
<path d="M555.0 227.2L561.9 228.4L575.9 240.4L568.1 239.1Z" fill="#ff3708" stroke="#ff3708" stroke-width="0.6"/>
<path d="M561.9 228.4L567.5 229.4L582.4 241.6L575.9 240.4Z" fill="#ff3a08" stroke="#ff3a08" stroke-width="0.6"/>
<path d="M567.5 229.4L571.9 230.3L587.4 242.5L582.4 241.6Z" fill="#ff3d08" stroke="#ff3d08" stroke-width="0.6"/>
<path d="M571.9 230.3L575.0 230.8L591.0 243.2L587.4 242.5Z" fill="#ff4008" stroke="#ff4008" stroke-width="0.6"/>
<path d="M575.0 230.8L576.8 231.2L593.1 243.6L591.0 243.2Z" fill="#ff4208" stroke="#ff4208" stroke-width="0.6"/>
<path d="M576.8 231.2L577.4 231.6L593.8 244.0L593.1 243.6Z" fill="#ff4408" stroke="#ff4408" stroke-width="0.6"/>
<path d="M344.1 244.0L344.8 243.6L329.0 257.6L328.3 258.0Z" fill="#ff4d08" stroke="#ff4d08" stroke-width="0.6"/>
<path d="M344.8 243.6L346.8 243.2L331.4 257.1L329.0 257.6Z" fill="#ff4c08" stroke="#ff4c08" stroke-width="0.6"/>
<path d="M346.8 243.2L350.4 242.5L335.3 256.4L331.4 257.1Z" fill="#ff4908" stroke="#ff4908" stroke-width="0.6"/>
<path d="M350.4 242.5L355.3 241.6L340.9 255.4L335.3 256.4Z" fill="#ff4608" stroke="#ff4608" stroke-width="0.6"/>
<path d="M355.3 241.6L361.7 240.4L348.1 254.1L340.9 255.4Z" fill="#ff4308" stroke="#ff4308" stroke-width="0.6"/>
<path d="M361.7 240.4L369.4 239.1L356.8 252.6L348.1 254.1Z" fill="#ff3f08" stroke="#ff3f08" stroke-width="0.6"/>
<path d="M369.4 239.1L378.5 237.5L367.1 250.9L356.8 252.6Z" fill="#ff3b08" stroke="#ff3b08" stroke-width="0.6"/>
<path d="M378.5 237.5L388.8 235.9L378.7 249.1L367.1 250.9Z" fill="#ff3808" stroke="#ff3808" stroke-width="0.6"/>
<path d="M388.8 235.9L400.1 234.2L391.5 247.3L378.7 249.1Z" fill="#ff3508" stroke="#ff3508" stroke-width="0.6"/>
<path d="M400.1 234.2L412.5 232.5L405.4 245.4L391.5 247.3Z" fill="#ff3208" stroke="#ff3208" stroke-width="0.6"/>
<path d="M412.5 232.5L425.6 230.9L420.2 243.7L405.4 245.4Z" fill="#ff3008" stroke="#ff3008" stroke-width="0.6"/>
<path d="M425.6 230.9L439.4 229.5L435.8 242.1L420.2 243.7Z" fill="#ff2f08" stroke="#ff2f08" stroke-width="0.6"/>
<path d="M439.4 229.5L453.6 228.3L451.8 240.9L435.8 242.1Z" fill="#ff2e08" stroke="#ff2e08" stroke-width="0.6"/>
<path d="M453.6 228.3L468.0 227.7L468.0 240.2L451.8 240.9Z" fill="#ff2e08" stroke="#ff2e08" stroke-width="0.6"/>
<path d="M468.0 227.7L482.6 228.3L484.4 240.9L468.0 240.2Z" fill="#ff2e08" stroke="#ff2e08" stroke-width="0.6"/>
<path d="M482.6 228.3L497.0 229.5L500.6 242.1L484.4 240.9Z" fill="#ff2e08" stroke="#ff2e08" stroke-width="0.6"/>
<path d="M497.0 229.5L511.0 230.9L516.2 243.7L500.6 242.1Z" fill="#ff2f08" stroke="#ff2f08" stroke-width="0.6"/>
<path d="M511.0 230.9L524.4 232.5L531.2 245.4L516.2 243.7Z" fill="#ff3008" stroke="#ff3008" stroke-width="0.6"/>
<path d="M524.4 232.5L536.9 234.2L545.3 247.3L531.2 245.4Z" fill="#ff3208" stroke="#ff3208" stroke-width="0.6"/>
<path d="M536.9 234.2L548.4 235.9L558.2 249.1L545.3 247.3Z" fill="#ff3508" stroke="#ff3508" stroke-width="0.6"/>
<path d="M548.4 235.9L558.9 237.5L569.9 250.9L558.2 249.1Z" fill="#ff3808" stroke="#ff3808" stroke-width="0.6"/>
<path d="M558.9 237.5L568.1 239.1L580.3 252.6L569.9 250.9Z" fill="#ff3b08" stroke="#ff3b08" stroke-width="0.6"/>
<path d="M568.1 239.1L575.9 240.4L589.1 254.1L580.3 252.6Z" fill="#ff3f08" stroke="#ff3f08" stroke-width="0.6"/>
<path d="M575.9 240.4L582.4 241.6L596.3 255.4L589.1 254.1Z" fill="#ff4308" stroke="#ff4308" stroke-width="0.6"/>
<path d="M582.4 241.6L587.4 242.5L602.0 256.4L596.3 255.4Z" fill="#ff4608" stroke="#ff4608" stroke-width="0.6"/>
<path d="M587.4 242.5L591.0 243.2L606.0 257.1L602.0 256.4Z" fill="#ff4908" stroke="#ff4908" stroke-width="0.6"/>
<path d="M591.0 243.2L593.1 243.6L608.3 257.6L606.0 257.1Z" fill="#ff4c08" stroke="#ff4c08" stroke-width="0.6"/>
<path d="M593.1 243.6L593.8 244.0L609.1 258.0L608.3 257.6Z" fill="#ff4d08" stroke="#ff4d08" stroke-width="0.6"/>
<path d="M328.3 258.0L329.0 257.6L314.8 274.4L314.0 274.9Z" fill="#ff5b08" stroke="#ff5b08" stroke-width="0.6"/>
<path d="M329.0 257.6L331.4 257.1L317.4 274.0L314.8 274.4Z" fill="#ff5908" stroke="#ff5908" stroke-width="0.6"/>
<path d="M331.4 257.1L335.3 256.4L321.8 273.2L317.4 274.0Z" fill="#ff5608" stroke="#ff5608" stroke-width="0.6"/>
<path d="M335.3 256.4L340.9 255.4L327.9 272.1L321.8 273.2Z" fill="#ff5208" stroke="#ff5208" stroke-width="0.6"/>
<path d="M340.9 255.4L348.1 254.1L335.8 270.7L327.9 272.1Z" fill="#ff4e08" stroke="#ff4e08" stroke-width="0.6"/>
<path d="M348.1 254.1L356.8 252.6L345.5 269.1L335.8 270.7Z" fill="#ff4908" stroke="#ff4908" stroke-width="0.6"/>
<path d="M356.8 252.6L367.1 250.9L356.7 267.3L345.5 269.1Z" fill="#ff4408" stroke="#ff4408" stroke-width="0.6"/>
<path d="M367.1 250.9L378.7 249.1L369.5 265.3L356.7 267.3Z" fill="#ff4008" stroke="#ff4008" stroke-width="0.6"/>
<path d="M378.7 249.1L391.5 247.3L383.7 263.3L369.5 265.3Z" fill="#ff3c08" stroke="#ff3c08" stroke-width="0.6"/>
<path d="M391.5 247.3L405.4 245.4L399.0 261.3L383.7 263.3Z" fill="#ff3908" stroke="#ff3908" stroke-width="0.6"/>
<path d="M405.4 245.4L420.2 243.7L415.3 259.4L399.0 261.3Z" fill="#ff3608" stroke="#ff3608" stroke-width="0.6"/>
<path d="M420.2 243.7L435.8 242.1L432.5 257.7L415.3 259.4Z" fill="#ff3408" stroke="#ff3408" stroke-width="0.6"/>
<path d="M435.8 242.1L451.8 240.9L450.1 256.4L432.5 257.7Z" fill="#ff3308" stroke="#ff3308" stroke-width="0.6"/>
<path d="M451.8 240.9L468.0 240.2L468.0 255.6L450.1 256.4Z" fill="#ff3308" stroke="#ff3308" stroke-width="0.6"/>
<path d="M468.0 240.2L484.4 240.9L485.8 256.4L468.0 255.6Z" fill="#ff3308" stroke="#ff3308" stroke-width="0.6"/>
<path d="M484.4 240.9L500.6 242.1L503.3 257.7L485.8 256.4Z" fill="#ff3308" stroke="#ff3308" stroke-width="0.6"/>
<path d="M500.6 242.1L516.2 243.7L520.3 259.4L503.3 257.7Z" fill="#ff3408" stroke="#ff3408" stroke-width="0.6"/>
<path d="M516.2 243.7L531.2 245.4L536.5 261.3L520.3 259.4Z" fill="#ff3608" stroke="#ff3608" stroke-width="0.6"/>
<path d="M531.2 245.4L545.3 247.3L551.7 263.3L536.5 261.3Z" fill="#ff3908" stroke="#ff3908" stroke-width="0.6"/>
<path d="M545.3 247.3L558.2 249.1L565.8 265.3L551.7 263.3Z" fill="#ff3c08" stroke="#ff3c08" stroke-width="0.6"/>
<path d="M558.2 249.1L569.9 250.9L578.4 267.3L565.8 265.3Z" fill="#ff4008" stroke="#ff4008" stroke-width="0.6"/>
<path d="M569.9 250.9L580.3 252.6L589.6 269.1L578.4 267.3Z" fill="#ff4408" stroke="#ff4408" stroke-width="0.6"/>
<path d="M580.3 252.6L589.1 254.1L599.2 270.7L589.6 269.1Z" fill="#ff4908" stroke="#ff4908" stroke-width="0.6"/>
<path d="M589.1 254.1L596.3 255.4L607.0 272.1L599.2 270.7Z" fill="#ff4e08" stroke="#ff4e08" stroke-width="0.6"/>
<path d="M596.3 255.4L602.0 256.4L613.1 273.2L607.0 272.1Z" fill="#ff5208" stroke="#ff5208" stroke-width="0.6"/>
<path d="M602.0 256.4L606.0 257.1L617.5 274.0L613.1 273.2Z" fill="#ff5608" stroke="#ff5608" stroke-width="0.6"/>
<path d="M606.0 257.1L608.3 257.6L620.0 274.4L617.5 274.0Z" fill="#ff5908" stroke="#ff5908" stroke-width="0.6"/>
<path d="M608.3 257.6L609.1 258.0L620.9 274.9L620.0 274.4Z" fill="#ff5b08" stroke="#ff5b08" stroke-width="0.6"/>
<path d="M314.0 274.9L314.8 274.4L304.0 290.2L303.1 290.7Z" fill="#ff6908" stroke="#ff6908" stroke-width="0.6"/>
<path d="M314.8 274.4L317.4 274.0L306.7 289.8L304.0 290.2Z" fill="#ff6608" stroke="#ff6608" stroke-width="0.6"/>
<path d="M317.4 274.0L321.8 273.2L311.4 289.0L306.7 289.8Z" fill="#ff6308" stroke="#ff6308" stroke-width="0.6"/>
<path d="M321.8 273.2L327.9 272.1L318.0 287.9L311.4 289.0Z" fill="#ff5e08" stroke="#ff5e08" stroke-width="0.6"/>
<path d="M327.9 272.1L335.8 270.7L326.5 286.5L318.0 287.9Z" fill="#ff5908" stroke="#ff5908" stroke-width="0.6"/>
<path d="M335.8 270.7L345.5 269.1L336.8 284.9L326.5 286.5Z" fill="#ff5308" stroke="#ff5308" stroke-width="0.6"/>
<path d="M345.5 269.1L356.7 267.3L348.9 283.1L336.8 284.9Z" fill="#ff4e08" stroke="#ff4e08" stroke-width="0.6"/>
<path d="M356.7 267.3L369.5 265.3L362.5 281.1L348.9 283.1Z" fill="#ff4808" stroke="#ff4808" stroke-width="0.6"/>
<path d="M369.5 265.3L383.7 263.3L377.7 279.1L362.5 281.1Z" fill="#ff4408" stroke="#ff4408" stroke-width="0.6"/>
<path d="M383.7 263.3L399.0 261.3L394.1 277.1L377.7 279.1Z" fill="#ff4008" stroke="#ff4008" stroke-width="0.6"/>
<path d="M399.0 261.3L415.3 259.4L411.6 275.2L394.1 277.1Z" fill="#ff3d08" stroke="#ff3d08" stroke-width="0.6"/>
<path d="M415.3 259.4L432.5 257.7L429.9 273.5L411.6 275.2Z" fill="#ff3b08" stroke="#ff3b08" stroke-width="0.6"/>
<path d="M432.5 257.7L450.1 256.4L448.8 272.2L429.9 273.5Z" fill="#ff3908" stroke="#ff3908" stroke-width="0.6"/>
<path d="M450.1 256.4L468.0 255.6L468.0 271.4L448.8 272.2Z" fill="#ff3908" stroke="#ff3908" stroke-width="0.6"/>
<path d="M468.0 255.6L485.8 256.4L486.8 272.2L468.0 271.4Z" fill="#ff3908" stroke="#ff3908" stroke-width="0.6"/>
<path d="M485.8 256.4L503.3 257.7L505.3 273.5L486.8 272.2Z" fill="#ff3908" stroke="#ff3908" stroke-width="0.6"/>
<path d="M503.3 257.7L520.3 259.4L523.3 275.2L505.3 273.5Z" fill="#ff3b08" stroke="#ff3b08" stroke-width="0.6"/>
<path d="M520.3 259.4L536.5 261.3L540.5 277.1L523.3 275.2Z" fill="#ff3d08" stroke="#ff3d08" stroke-width="0.6"/>
<path d="M536.5 261.3L551.7 263.3L556.6 279.1L540.5 277.1Z" fill="#ff4008" stroke="#ff4008" stroke-width="0.6"/>
<path d="M551.7 263.3L565.8 265.3L571.5 281.1L556.6 279.1Z" fill="#ff4408" stroke="#ff4408" stroke-width="0.6"/>
<path d="M565.8 265.3L578.4 267.3L584.9 283.1L571.5 281.1Z" fill="#ff4808" stroke="#ff4808" stroke-width="0.6"/>
<path d="M578.4 267.3L589.6 269.1L596.7 284.9L584.9 283.1Z" fill="#ff4e08" stroke="#ff4e08" stroke-width="0.6"/>
<path d="M589.6 269.1L599.2 270.7L606.9 286.5L596.7 284.9Z" fill="#ff5308" stroke="#ff5308" stroke-width="0.6"/>
<path d="M599.2 270.7L607.0 272.1L615.2 287.9L606.9 286.5Z" fill="#ff5908" stroke="#ff5908" stroke-width="0.6"/>
<path d="M607.0 272.1L613.1 273.2L621.6 289.0L615.2 287.9Z" fill="#ff5e08" stroke="#ff5e08" stroke-width="0.6"/>
<path d="M613.1 273.2L617.5 274.0L626.2 289.8L621.6 289.0Z" fill="#ff6308" stroke="#ff6308" stroke-width="0.6"/>
<path d="M617.5 274.0L620.0 274.4L628.9 290.2L626.2 289.8Z" fill="#ff6608" stroke="#ff6608" stroke-width="0.6"/>
<path d="M620.0 274.4L620.9 274.9L629.8 290.7L628.9 290.2Z" fill="#ff6908" stroke="#ff6908" stroke-width="0.6"/>
<path d="M303.1 290.7L304.0 290.2L295.2 308.1L294.3 308.6Z" fill="#ff7708" stroke="#ff7708" stroke-width="0.6"/>
<path d="M304.0 290.2L306.7 289.8L298.1 307.7L295.2 308.1Z" fill="#ff7408" stroke="#ff7408" stroke-width="0.6"/>
<path d="M306.7 289.8L311.4 289.0L303.1 306.9L298.1 307.7Z" fill="#ff7008" stroke="#ff7008" stroke-width="0.6"/>
<path d="M311.4 289.0L318.0 287.9L310.0 305.8L303.1 306.9Z" fill="#ff6a08" stroke="#ff6a08" stroke-width="0.6"/>
<path d="M318.0 287.9L326.5 286.5L318.9 304.4L310.0 305.8Z" fill="#ff6408" stroke="#ff6408" stroke-width="0.6"/>
<path d="M326.5 286.5L336.8 284.9L329.8 302.8L318.9 304.4Z" fill="#ff5e08" stroke="#ff5e08" stroke-width="0.6"/>
<path d="M336.8 284.9L348.9 283.1L342.5 301.0L329.8 302.8Z" fill="#ff5708" stroke="#ff5708" stroke-width="0.6"/>
<path d="M348.9 283.1L362.5 281.1L356.9 299.0L342.5 301.0Z" fill="#ff5108" stroke="#ff5108" stroke-width="0.6"/>
<path d="M362.5 281.1L377.7 279.1L372.9 297.0L356.9 299.0Z" fill="#ff4c08" stroke="#ff4c08" stroke-width="0.6"/>
<path d="M377.7 279.1L394.1 277.1L390.2 295.0L372.9 297.0Z" fill="#ff4708" stroke="#ff4708" stroke-width="0.6"/>
<path d="M394.1 277.1L411.6 275.2L408.6 293.1L390.2 295.0Z" fill="#ff4408" stroke="#ff4408" stroke-width="0.6"/>
<path d="M411.6 275.2L429.9 273.5L427.9 291.4L408.6 293.1Z" fill="#ff4108" stroke="#ff4108" stroke-width="0.6"/>
<path d="M429.9 273.5L448.8 272.2L447.8 290.1L427.9 291.4Z" fill="#ff4008" stroke="#ff4008" stroke-width="0.6"/>
<path d="M448.8 272.2L468.0 271.4L468.0 289.3L447.8 290.1Z" fill="#ff4008" stroke="#ff4008" stroke-width="0.6"/>
<path d="M468.0 271.4L486.8 272.2L487.6 290.1L468.0 289.3Z" fill="#ff4008" stroke="#ff4008" stroke-width="0.6"/>
<path d="M486.8 272.2L505.3 273.5L506.8 291.4L487.6 290.1Z" fill="#ff4008" stroke="#ff4008" stroke-width="0.6"/>
<path d="M505.3 273.5L523.3 275.2L525.5 293.1L506.8 291.4Z" fill="#ff4108" stroke="#ff4108" stroke-width="0.6"/>
<path d="M523.3 275.2L540.5 277.1L543.4 295.0L525.5 293.1Z" fill="#ff4408" stroke="#ff4408" stroke-width="0.6"/>
<path d="M540.5 277.1L556.6 279.1L560.2 297.0L543.4 295.0Z" fill="#ff4708" stroke="#ff4708" stroke-width="0.6"/>
<path d="M556.6 279.1L571.5 281.1L575.6 299.0L560.2 297.0Z" fill="#ff4c08" stroke="#ff4c08" stroke-width="0.6"/>
<path d="M571.5 281.1L584.9 283.1L589.6 301.0L575.6 299.0Z" fill="#ff5108" stroke="#ff5108" stroke-width="0.6"/>
<path d="M584.9 283.1L596.7 284.9L601.9 302.8L589.6 301.0Z" fill="#ff5708" stroke="#ff5708" stroke-width="0.6"/>
<path d="M596.7 284.9L606.9 286.5L612.4 304.4L601.9 302.8Z" fill="#ff5e08" stroke="#ff5e08" stroke-width="0.6"/>
<path d="M606.9 286.5L615.2 287.9L621.1 305.8L612.4 304.4Z" fill="#ff6408" stroke="#ff6408" stroke-width="0.6"/>
<path d="M615.2 287.9L621.6 289.0L627.8 306.9L621.1 305.8Z" fill="#ff6a08" stroke="#ff6a08" stroke-width="0.6"/>
<path d="M621.6 289.0L626.2 289.8L632.6 307.7L627.8 306.9Z" fill="#ff7008" stroke="#ff7008" stroke-width="0.6"/>
<path d="M626.2 289.8L628.9 290.2L635.4 308.1L632.6 307.7Z" fill="#ff7408" stroke="#ff7408" stroke-width="0.6"/>
<path d="M628.9 290.2L629.8 290.7L636.3 308.6L635.4 308.1Z" fill="#ff7708" stroke="#ff7708" stroke-width="0.6"/>
<path d="M294.3 308.6L295.2 308.1L291.6 324.3L290.7 324.7Z" fill="#ff8708" stroke="#ff8708" stroke-width="0.6"/>
<path d="M295.2 308.1L298.1 307.7L294.6 323.8L291.6 324.3Z" fill="#ff8308" stroke="#ff8308" stroke-width="0.6"/>
<path d="M298.1 307.7L303.1 306.9L299.6 323.1L294.6 323.8Z" fill="#ff7e08" stroke="#ff7e08" stroke-width="0.6"/>
<path d="M303.1 306.9L310.0 305.8L306.7 322.1L299.6 323.1Z" fill="#ff7808" stroke="#ff7808" stroke-width="0.6"/>
<path d="M310.0 305.8L318.9 304.4L315.8 320.9L306.7 322.1Z" fill="#ff7108" stroke="#ff7108" stroke-width="0.6"/>
<path d="M318.9 304.4L329.8 302.8L326.9 319.5L315.8 320.9Z" fill="#ff6a08" stroke="#ff6a08" stroke-width="0.6"/>
<path d="M329.8 302.8L342.5 301.0L339.9 317.8L326.9 319.5Z" fill="#ff6208" stroke="#ff6208" stroke-width="0.6"/>
<path d="M342.5 301.0L356.9 299.0L354.6 316.1L339.9 317.8Z" fill="#ff5b08" stroke="#ff5b08" stroke-width="0.6"/>
<path d="M356.9 299.0L372.9 297.0L370.9 314.3L354.6 316.1Z" fill="#ff5508" stroke="#ff5508" stroke-width="0.6"/>
<path d="M372.9 297.0L390.2 295.0L388.6 312.5L370.9 314.3Z" fill="#ff4f08" stroke="#ff4f08" stroke-width="0.6"/>
<path d="M390.2 295.0L408.6 293.1L407.4 310.8L388.6 312.5Z" fill="#ff4b08" stroke="#ff4b08" stroke-width="0.6"/>
<path d="M408.6 293.1L427.9 291.4L427.1 309.3L407.4 310.8Z" fill="#ff4808" stroke="#ff4808" stroke-width="0.6"/>
<path d="M427.9 291.4L447.8 290.1L447.4 308.1L427.1 309.3Z" fill="#ff4708" stroke="#ff4708" stroke-width="0.6"/>
<path d="M447.8 290.1L468.0 289.3L468.0 307.4L447.4 308.1Z" fill="#ff4608" stroke="#ff4608" stroke-width="0.6"/>
<path d="M468.0 289.3L487.6 290.1L488.1 308.1L468.0 307.4Z" fill="#ff4608" stroke="#ff4608" stroke-width="0.6"/>
<path d="M487.6 290.1L506.8 291.4L507.8 309.3L488.1 308.1Z" fill="#ff4708" stroke="#ff4708" stroke-width="0.6"/>
<path d="M506.8 291.4L525.5 293.1L527.0 310.8L507.8 309.3Z" fill="#ff4808" stroke="#ff4808" stroke-width="0.6"/>
<path d="M525.5 293.1L543.4 295.0L545.4 312.5L527.0 310.8Z" fill="#ff4b08" stroke="#ff4b08" stroke-width="0.6"/>
<path d="M543.4 295.0L560.2 297.0L562.6 314.3L545.4 312.5Z" fill="#ff4f08" stroke="#ff4f08" stroke-width="0.6"/>
<path d="M560.2 297.0L575.6 299.0L578.4 316.1L562.6 314.3Z" fill="#ff5508" stroke="#ff5508" stroke-width="0.6"/>
<path d="M575.6 299.0L589.6 301.0L592.7 317.8L578.4 316.1Z" fill="#ff5b08" stroke="#ff5b08" stroke-width="0.6"/>
<path d="M589.6 301.0L601.9 302.8L605.4 319.5L592.7 317.8Z" fill="#ff6208" stroke="#ff6208" stroke-width="0.6"/>
<path d="M601.9 302.8L612.4 304.4L616.2 320.9L605.4 319.5Z" fill="#ff6a08" stroke="#ff6a08" stroke-width="0.6"/>
<path d="M612.4 304.4L621.1 305.8L625.0 322.1L616.2 320.9Z" fill="#ff7108" stroke="#ff7108" stroke-width="0.6"/>
<path d="M621.1 305.8L627.8 306.9L631.9 323.1L625.0 322.1Z" fill="#ff7808" stroke="#ff7808" stroke-width="0.6"/>
<path d="M627.8 306.9L632.6 307.7L636.8 323.8L631.9 323.1Z" fill="#ff7e08" stroke="#ff7e08" stroke-width="0.6"/>
<path d="M632.6 307.7L635.4 308.1L639.7 324.3L636.8 323.8Z" fill="#ff8308" stroke="#ff8308" stroke-width="0.6"/>
<path d="M635.4 308.1L636.3 308.6L640.7 324.7L639.7 324.3Z" fill="#ff8708" stroke="#ff8708" stroke-width="0.6"/>
<path d="M290.7 324.7L291.6 324.3L288.7 342.2L287.7 342.6Z" fill="#ff9908" stroke="#ff9908" stroke-width="0.6"/>
<path d="M291.6 324.3L294.6 323.8L291.7 341.8L288.7 342.2Z" fill="#ff9508" stroke="#ff9508" stroke-width="0.6"/>
<path d="M294.6 323.8L299.6 323.1L296.8 341.2L291.7 341.8Z" fill="#ff8f08" stroke="#ff8f08" stroke-width="0.6"/>
<path d="M299.6 323.1L306.7 322.1L304.0 340.3L296.8 341.2Z" fill="#ff8808" stroke="#ff8808" stroke-width="0.6"/>
<path d="M306.7 322.1L315.8 320.9L313.3 339.2L304.0 340.3Z" fill="#ff7f08" stroke="#ff7f08" stroke-width="0.6"/>
<path d="M315.8 320.9L326.9 319.5L324.6 337.9L313.3 339.2Z" fill="#ff7608" stroke="#ff7608" stroke-width="0.6"/>
<path d="M326.9 319.5L339.9 317.8L337.8 336.5L324.6 337.9Z" fill="#ff6e08" stroke="#ff6e08" stroke-width="0.6"/>
<path d="M339.9 317.8L354.6 316.1L352.7 335.0L337.8 336.5Z" fill="#ff6508" stroke="#ff6508" stroke-width="0.6"/>
<path d="M354.6 316.1L370.9 314.3L369.3 333.4L352.7 335.0Z" fill="#ff5e08" stroke="#ff5e08" stroke-width="0.6"/>
<path d="M370.9 314.3L388.6 312.5L387.2 331.8L369.3 333.4Z" fill="#ff5708" stroke="#ff5708" stroke-width="0.6"/>
<path d="M388.6 312.5L407.4 310.8L406.4 330.3L387.2 331.8Z" fill="#ff5208" stroke="#ff5208" stroke-width="0.6"/>
<path d="M407.4 310.8L427.1 309.3L426.4 329.0L406.4 330.3Z" fill="#ff4f08" stroke="#ff4f08" stroke-width="0.6"/>
<path d="M427.1 309.3L447.4 308.1L447.0 327.9L426.4 329.0Z" fill="#ff4d08" stroke="#ff4d08" stroke-width="0.6"/>
<path d="M447.4 308.1L468.0 307.4L468.0 327.3L447.0 327.9Z" fill="#ff4c08" stroke="#ff4c08" stroke-width="0.6"/>
<path d="M468.0 307.4L488.1 308.1L488.5 327.9L468.0 327.3Z" fill="#ff4c08" stroke="#ff4c08" stroke-width="0.6"/>
<path d="M488.1 308.1L507.8 309.3L508.6 329.0L488.5 327.9Z" fill="#ff4d08" stroke="#ff4d08" stroke-width="0.6"/>
<path d="M507.8 309.3L527.0 310.8L528.2 330.3L508.6 329.0Z" fill="#ff4f08" stroke="#ff4f08" stroke-width="0.6"/>
<path d="M527.0 310.8L545.4 312.5L546.8 331.8L528.2 330.3Z" fill="#ff5208" stroke="#ff5208" stroke-width="0.6"/>
<path d="M545.4 312.5L562.6 314.3L564.4 333.4L546.8 331.8Z" fill="#ff5708" stroke="#ff5708" stroke-width="0.6"/>
<path d="M562.6 314.3L578.4 316.1L580.5 335.0L564.4 333.4Z" fill="#ff5e08" stroke="#ff5e08" stroke-width="0.6"/>
<path d="M578.4 316.1L592.7 317.8L595.1 336.5L580.5 335.0Z" fill="#ff6508" stroke="#ff6508" stroke-width="0.6"/>
<path d="M592.7 317.8L605.4 319.5L608.0 337.9L595.1 336.5Z" fill="#ff6e08" stroke="#ff6e08" stroke-width="0.6"/>
<path d="M605.4 319.5L616.2 320.9L619.0 339.2L608.0 337.9Z" fill="#ff7608" stroke="#ff7608" stroke-width="0.6"/>
<path d="M616.2 320.9L625.0 322.1L628.1 340.3L619.0 339.2Z" fill="#ff7f08" stroke="#ff7f08" stroke-width="0.6"/>
<path d="M625.0 322.1L631.9 323.1L635.1 341.2L628.1 340.3Z" fill="#ff8808" stroke="#ff8808" stroke-width="0.6"/>
<path d="M631.9 323.1L636.8 323.8L640.1 341.8L635.1 341.2Z" fill="#ff8f08" stroke="#ff8f08" stroke-width="0.6"/>
<path d="M636.8 323.8L639.7 324.3L643.0 342.2L640.1 341.8Z" fill="#ff9508" stroke="#ff9508" stroke-width="0.6"/>
<path d="M639.7 324.3L640.7 324.7L644.0 342.6L643.0 342.2Z" fill="#ff9908" stroke="#ff9908" stroke-width="0.6"/>
<path d="M287.7 342.6L288.7 342.2L286.6 359.7L285.6 359.8Z" fill="#ffab08" stroke="#ffab08" stroke-width="0.6"/>
<path d="M288.7 342.2L291.7 341.8L289.6 359.4L286.6 359.7Z" fill="#ffa708" stroke="#ffa708" stroke-width="0.6"/>
<path d="M291.7 341.8L296.8 341.2L294.8 358.9L289.6 359.4Z" fill="#ffa008" stroke="#ffa008" stroke-width="0.6"/>
<path d="M296.8 341.2L304.0 340.3L302.1 358.3L294.8 358.9Z" fill="#ff9708" stroke="#ff9708" stroke-width="0.6"/>
<path d="M304.0 340.3L313.3 339.2L311.5 357.4L302.1 358.3Z" fill="#ff8d08" stroke="#ff8d08" stroke-width="0.6"/>
<path d="M313.3 339.2L324.6 337.9L322.9 356.5L311.5 357.4Z" fill="#ff8308" stroke="#ff8308" stroke-width="0.6"/>
<path d="M324.6 337.9L337.8 336.5L336.2 355.4L322.9 356.5Z" fill="#ff7908" stroke="#ff7908" stroke-width="0.6"/>
<path d="M337.8 336.5L352.7 335.0L351.4 354.2L336.2 355.4Z" fill="#ff6f08" stroke="#ff6f08" stroke-width="0.6"/>
<path d="M352.7 335.0L369.3 333.4L368.1 353.0L351.4 354.2Z" fill="#ff6608" stroke="#ff6608" stroke-width="0.6"/>
<path d="M369.3 333.4L387.2 331.8L386.3 351.7L368.1 353.0Z" fill="#ff5f08" stroke="#ff5f08" stroke-width="0.6"/>
<path d="M387.2 331.8L406.4 330.3L405.6 350.6L386.3 351.7Z" fill="#ff5908" stroke="#ff5908" stroke-width="0.6"/>
<path d="M406.4 330.3L426.4 329.0L425.9 349.6L405.6 350.6Z" fill="#ff5508" stroke="#ff5508" stroke-width="0.6"/>
<path d="M426.4 329.0L447.0 327.9L446.8 348.8L425.9 349.6Z" fill="#ff5308" stroke="#ff5308" stroke-width="0.6"/>
<path d="M447.0 327.9L468.0 327.3L468.0 348.3L446.8 348.8Z" fill="#ff5208" stroke="#ff5208" stroke-width="0.6"/>
<path d="M468.0 327.3L488.5 327.9L488.7 348.8L468.0 348.3Z" fill="#ff5208" stroke="#ff5208" stroke-width="0.6"/>
<path d="M488.5 327.9L508.6 329.0L509.0 349.6L488.7 348.8Z" fill="#ff5308" stroke="#ff5308" stroke-width="0.6"/>
<path d="M508.6 329.0L528.2 330.3L528.8 350.6L509.0 349.6Z" fill="#ff5508" stroke="#ff5508" stroke-width="0.6"/>
<path d="M528.2 330.3L546.8 331.8L547.7 351.7L528.8 350.6Z" fill="#ff5908" stroke="#ff5908" stroke-width="0.6"/>
<path d="M546.8 331.8L564.4 333.4L565.4 353.0L547.7 351.7Z" fill="#ff5f08" stroke="#ff5f08" stroke-width="0.6"/>
<path d="M564.4 333.4L580.5 335.0L581.7 354.2L565.4 353.0Z" fill="#ff6608" stroke="#ff6608" stroke-width="0.6"/>
<path d="M580.5 335.0L595.1 336.5L596.5 355.4L581.7 354.2Z" fill="#ff6f08" stroke="#ff6f08" stroke-width="0.6"/>
<path d="M595.1 336.5L608.0 337.9L609.5 356.5L596.5 355.4Z" fill="#ff7908" stroke="#ff7908" stroke-width="0.6"/>
<path d="M608.0 337.9L619.0 339.2L620.6 357.4L609.5 356.5Z" fill="#ff8308" stroke="#ff8308" stroke-width="0.6"/>
<path d="M619.0 339.2L628.1 340.3L629.8 358.3L620.6 357.4Z" fill="#ff8d08" stroke="#ff8d08" stroke-width="0.6"/>
<path d="M628.1 340.3L635.1 341.2L636.9 358.9L629.8 358.3Z" fill="#ff9708" stroke="#ff9708" stroke-width="0.6"/>
<path d="M635.1 341.2L640.1 341.8L641.9 359.4L636.9 358.9Z" fill="#ffa008" stroke="#ffa008" stroke-width="0.6"/>
<path d="M640.1 341.8L643.0 342.2L644.9 359.7L641.9 359.4Z" fill="#ffa708" stroke="#ffa708" stroke-width="0.6"/>
<path d="M643.0 342.2L644.0 342.6L645.9 360.1L644.9 359.7Z" fill="#ffab08" stroke="#ffab08" stroke-width="0.6"/>
<path d="M285.6 359.8L286.6 359.7L285.9 378.4L284.9 378.5Z" fill="#ffbd08" stroke="#ffbd08" stroke-width="0.6"/>
<path d="M286.6 359.7L289.6 359.4L289.0 378.2L285.9 378.4Z" fill="#ffb708" stroke="#ffb708" stroke-width="0.6"/>
<path d="M289.6 359.4L294.8 358.9L294.2 377.9L289.0 378.2Z" fill="#ffb008" stroke="#ffb008" stroke-width="0.6"/>
<path d="M294.8 358.9L302.1 358.3L301.5 377.4L294.2 377.9Z" fill="#ffa608" stroke="#ffa608" stroke-width="0.6"/>
<path d="M302.1 358.3L311.5 357.4L310.9 376.9L301.5 377.4Z" fill="#ff9b08" stroke="#ff9b08" stroke-width="0.6"/>
<path d="M311.5 357.4L322.9 356.5L322.4 376.2L310.9 376.9Z" fill="#ff8f08" stroke="#ff8f08" stroke-width="0.6"/>
<path d="M322.9 356.5L336.2 355.4L335.7 375.4L322.4 376.2Z" fill="#ff8408" stroke="#ff8408" stroke-width="0.6"/>
<path d="M336.2 355.4L351.4 354.2L350.9 374.6L335.7 375.4Z" fill="#ff7808" stroke="#ff7808" stroke-width="0.6"/>
<path d="M351.4 354.2L368.1 353.0L367.7 373.7L350.9 374.6Z" fill="#ff6e08" stroke="#ff6e08" stroke-width="0.6"/>
<path d="M368.1 353.0L386.3 351.7L386.0 372.9L367.7 373.7Z" fill="#ff6608" stroke="#ff6608" stroke-width="0.6"/>
<path d="M386.3 351.7L405.6 350.6L405.4 372.1L386.0 372.9Z" fill="#ff6008" stroke="#ff6008" stroke-width="0.6"/>
<path d="M405.6 350.6L425.9 349.6L425.8 371.4L405.4 372.1Z" fill="#ff5b08" stroke="#ff5b08" stroke-width="0.6"/>
<path d="M425.9 349.6L446.8 348.8L446.7 370.8L425.8 371.4Z" fill="#ff5908" stroke="#ff5908" stroke-width="0.6"/>
<path d="M446.8 348.8L468.0 348.3L468.0 370.5L446.7 370.8Z" fill="#ff5808" stroke="#ff5808" stroke-width="0.6"/>
<path d="M468.0 348.3L488.7 348.8L488.9 370.8L468.0 370.5Z" fill="#ff5808" stroke="#ff5808" stroke-width="0.6"/>
<path d="M488.7 348.8L509.0 349.6L509.4 371.4L488.9 370.8Z" fill="#ff5908" stroke="#ff5908" stroke-width="0.6"/>
<path d="M509.0 349.6L528.8 350.6L529.4 372.1L509.4 371.4Z" fill="#ff5b08" stroke="#ff5b08" stroke-width="0.6"/>
<path d="M528.8 350.6L547.7 351.7L548.4 372.9L529.4 372.1Z" fill="#ff6008" stroke="#ff6008" stroke-width="0.6"/>
<path d="M547.7 351.7L565.4 353.0L566.3 373.7L548.4 372.9Z" fill="#ff6608" stroke="#ff6608" stroke-width="0.6"/>
<path d="M565.4 353.0L581.7 354.2L582.8 374.6L566.3 373.7Z" fill="#ff6e08" stroke="#ff6e08" stroke-width="0.6"/>
<path d="M581.7 354.2L596.5 355.4L597.7 375.4L582.8 374.6Z" fill="#ff7808" stroke="#ff7808" stroke-width="0.6"/>
<path d="M596.5 355.4L609.5 356.5L610.8 376.2L597.7 375.4Z" fill="#ff8408" stroke="#ff8408" stroke-width="0.6"/>
<path d="M609.5 356.5L620.6 357.4L622.0 376.9L610.8 376.2Z" fill="#ff8f08" stroke="#ff8f08" stroke-width="0.6"/>
<path d="M620.6 357.4L629.8 358.3L631.3 377.4L622.0 376.9Z" fill="#ff9b08" stroke="#ff9b08" stroke-width="0.6"/>
<path d="M629.8 358.3L636.9 358.9L638.4 377.9L631.3 377.4Z" fill="#ffa608" stroke="#ffa608" stroke-width="0.6"/>
<path d="M636.9 358.9L641.9 359.4L643.5 378.2L638.4 377.9Z" fill="#ffb008" stroke="#ffb008" stroke-width="0.6"/>
<path d="M641.9 359.4L644.9 359.7L646.5 378.4L643.5 378.2Z" fill="#ffb708" stroke="#ffb708" stroke-width="0.6"/>
<path d="M644.9 359.7L645.9 360.1L647.5 378.5L646.5 378.4Z" fill="#ffbd08" stroke="#ffbd08" stroke-width="0.6"/>
<path d="M284.9 378.5L285.9 378.4L285.9 395.9L284.9 395.9Z" fill="#ffce08" stroke="#ffce08" stroke-width="0.6"/>
<path d="M285.9 378.4L289.0 378.2L289.0 395.8L285.9 395.9Z" fill="#ffc808" stroke="#ffc808" stroke-width="0.6"/>
<path d="M289.0 378.2L294.2 377.9L294.2 395.6L289.0 395.8Z" fill="#ffc008" stroke="#ffc008" stroke-width="0.6"/>
<path d="M294.2 377.9L301.5 377.4L301.5 395.4L294.2 395.6Z" fill="#ffb508" stroke="#ffb508" stroke-width="0.6"/>
<path d="M301.5 377.4L310.9 376.9L310.9 395.1L301.5 395.4Z" fill="#ffa908" stroke="#ffa908" stroke-width="0.6"/>
<path d="M310.9 376.9L322.4 376.2L322.4 394.7L310.9 395.1Z" fill="#ff9c08" stroke="#ff9c08" stroke-width="0.6"/>
<path d="M322.4 376.2L335.7 375.4L335.8 394.4L322.4 394.7Z" fill="#ff8f08" stroke="#ff8f08" stroke-width="0.6"/>
<path d="M335.7 375.4L350.9 374.6L350.9 393.9L335.8 394.4Z" fill="#ff8308" stroke="#ff8308" stroke-width="0.6"/>
<path d="M350.9 374.6L367.7 373.7L367.8 393.5L350.9 393.9Z" fill="#ff7808" stroke="#ff7808" stroke-width="0.6"/>
<path d="M367.7 373.7L386.0 372.9L386.0 393.1L367.8 393.5Z" fill="#ff6e08" stroke="#ff6e08" stroke-width="0.6"/>
<path d="M386.0 372.9L405.4 372.1L405.4 392.7L386.0 393.1Z" fill="#ff6708" stroke="#ff6708" stroke-width="0.6"/>
<path d="M405.4 372.1L425.8 371.4L425.8 392.3L405.4 392.7Z" fill="#ff6108" stroke="#ff6108" stroke-width="0.6"/>
<path d="M425.8 371.4L446.7 370.8L446.7 392.1L425.8 392.3Z" fill="#ff5e08" stroke="#ff5e08" stroke-width="0.6"/>
<path d="M446.7 370.8L468.0 370.5L468.0 391.9L446.7 392.1Z" fill="#ff5d08" stroke="#ff5d08" stroke-width="0.6"/>
<path d="M468.0 370.5L488.9 370.8L488.9 392.1L468.0 391.9Z" fill="#ff5d08" stroke="#ff5d08" stroke-width="0.6"/>
<path d="M488.9 370.8L509.4 371.4L509.4 392.3L488.9 392.1Z" fill="#ff5e08" stroke="#ff5e08" stroke-width="0.6"/>
<path d="M509.4 371.4L529.4 372.1L529.4 392.7L509.4 392.3Z" fill="#ff6108" stroke="#ff6108" stroke-width="0.6"/>
<path d="M529.4 372.1L548.4 372.9L548.4 393.1L529.4 392.7Z" fill="#ff6708" stroke="#ff6708" stroke-width="0.6"/>
<path d="M548.4 372.9L566.3 373.7L566.3 393.5L548.4 393.1Z" fill="#ff6e08" stroke="#ff6e08" stroke-width="0.6"/>
<path d="M566.3 373.7L582.8 374.6L582.8 393.9L566.3 393.5Z" fill="#ff7808" stroke="#ff7808" stroke-width="0.6"/>
<path d="M582.8 374.6L597.7 375.4L597.7 394.4L582.8 393.9Z" fill="#ff8308" stroke="#ff8308" stroke-width="0.6"/>
<path d="M597.7 375.4L610.8 376.2L610.8 394.7L597.7 394.4Z" fill="#ff8f08" stroke="#ff8f08" stroke-width="0.6"/>
<path d="M610.8 376.2L622.0 376.9L622.0 395.1L610.8 394.7Z" fill="#ff9c08" stroke="#ff9c08" stroke-width="0.6"/>
<path d="M622.0 376.9L631.3 377.4L631.3 395.4L622.0 395.1Z" fill="#ffa908" stroke="#ffa908" stroke-width="0.6"/>
<path d="M631.3 377.4L638.4 377.9L638.4 395.6L631.3 395.4Z" fill="#ffb508" stroke="#ffb508" stroke-width="0.6"/>
<path d="M638.4 377.9L643.5 378.2L643.5 395.8L638.4 395.6Z" fill="#ffc008" stroke="#ffc008" stroke-width="0.6"/>
<path d="M643.5 378.2L646.5 378.4L646.5 395.9L643.5 395.8Z" fill="#ffc808" stroke="#ffc808" stroke-width="0.6"/>
<path d="M646.5 378.4L647.5 378.5L647.5 395.9L646.5 395.9Z" fill="#ffce08" stroke="#ffce08" stroke-width="0.6"/>
<path d="M284.9 395.9L285.9 395.9L286.6 412.8L285.6 412.8Z" fill="#ffdf08" stroke="#ffdf08" stroke-width="0.6"/>
<path d="M285.9 395.9L289.0 395.8L289.7 412.8L286.6 412.8Z" fill="#ffd908" stroke="#ffd908" stroke-width="0.6"/>
<path d="M289.0 395.8L294.2 395.6L294.9 412.8L289.7 412.8Z" fill="#ffd008" stroke="#ffd008" stroke-width="0.6"/>
<path d="M294.2 395.6L301.5 395.4L302.1 412.8L294.9 412.8Z" fill="#ffc508" stroke="#ffc508" stroke-width="0.6"/>
<path d="M301.5 395.4L310.9 395.1L311.5 412.8L302.1 412.8Z" fill="#ffb908" stroke="#ffb908" stroke-width="0.6"/>
<path d="M310.9 395.1L322.4 394.7L322.9 412.8L311.5 412.8Z" fill="#ffab08" stroke="#ffab08" stroke-width="0.6"/>
<path d="M322.4 394.7L335.8 394.4L336.3 412.8L322.9 412.8Z" fill="#ff9d08" stroke="#ff9d08" stroke-width="0.6"/>
<path d="M335.8 394.4L350.9 393.9L351.4 412.8L336.3 412.8Z" fill="#ff8f08" stroke="#ff8f08" stroke-width="0.6"/>
<path d="M350.9 393.9L367.8 393.5L368.1 412.8L351.4 412.8Z" fill="#ff8308" stroke="#ff8308" stroke-width="0.6"/>
<path d="M367.8 393.5L386.0 393.1L386.3 412.8L368.1 412.8Z" fill="#ff7808" stroke="#ff7808" stroke-width="0.6"/>
<path d="M386.0 393.1L405.4 392.7L405.7 412.8L386.3 412.8Z" fill="#ff6f08" stroke="#ff6f08" stroke-width="0.6"/>
<path d="M405.4 392.7L425.8 392.3L425.9 412.8L405.7 412.8Z" fill="#ff6908" stroke="#ff6908" stroke-width="0.6"/>
<path d="M425.8 392.3L446.7 392.1L446.8 412.8L425.9 412.8Z" fill="#ff6508" stroke="#ff6508" stroke-width="0.6"/>
<path d="M446.7 392.1L468.0 391.9L468.0 412.8L446.8 412.8Z" fill="#ff6308" stroke="#ff6308" stroke-width="0.6"/>
<path d="M468.0 391.9L488.9 392.1L488.9 412.8L468.0 412.8Z" fill="#ff6308" stroke="#ff6308" stroke-width="0.6"/>
<path d="M488.9 392.1L509.4 392.3L509.4 412.8L488.9 412.8Z" fill="#ff6508" stroke="#ff6508" stroke-width="0.6"/>
<path d="M509.4 392.3L529.4 392.7L529.4 412.8L509.4 412.8Z" fill="#ff6908" stroke="#ff6908" stroke-width="0.6"/>
<path d="M529.4 392.7L548.4 393.1L548.4 412.8L529.4 412.8Z" fill="#ff6f08" stroke="#ff6f08" stroke-width="0.6"/>
<path d="M548.4 393.1L566.3 393.5L566.3 412.8L548.4 412.8Z" fill="#ff7808" stroke="#ff7808" stroke-width="0.6"/>
<path d="M566.3 393.5L582.8 393.9L582.8 412.8L566.3 412.8Z" fill="#ff8308" stroke="#ff8308" stroke-width="0.6"/>
<path d="M582.8 393.9L597.7 394.4L597.7 412.8L582.8 412.8Z" fill="#ff8f08" stroke="#ff8f08" stroke-width="0.6"/>
<path d="M597.7 394.4L610.8 394.7L610.8 412.8L597.7 412.8Z" fill="#ff9d08" stroke="#ff9d08" stroke-width="0.6"/>
<path d="M610.8 394.7L622.0 395.1L622.0 412.8L610.8 412.8Z" fill="#ffab08" stroke="#ffab08" stroke-width="0.6"/>
<path d="M622.0 395.1L631.3 395.4L631.3 412.8L622.0 412.8Z" fill="#ffb908" stroke="#ffb908" stroke-width="0.6"/>
<path d="M631.3 395.4L638.4 395.6L638.4 412.8L631.3 412.8Z" fill="#ffc508" stroke="#ffc508" stroke-width="0.6"/>
<path d="M638.4 395.6L643.5 395.8L643.5 412.8L638.4 412.8Z" fill="#ffd008" stroke="#ffd008" stroke-width="0.6"/>
<path d="M643.5 395.8L646.5 395.9L646.5 412.8L643.5 412.8Z" fill="#ffd908" stroke="#ffd908" stroke-width="0.6"/>
<path d="M646.5 395.9L647.5 395.9L647.5 412.8L646.5 412.8Z" fill="#ffdf08" stroke="#ffdf08" stroke-width="0.6"/>
<path d="M285.6 412.8L286.6 412.8L289.2 431.0L288.3 431.0Z" fill="#ffe908" stroke="#ffe908" stroke-width="0.6"/>
<path d="M286.6 412.8L289.7 412.8L292.2 431.1L289.2 431.0Z" fill="#ffe308" stroke="#ffe308" stroke-width="0.6"/>
<path d="M289.7 412.8L294.9 412.8L297.3 431.3L292.2 431.1Z" fill="#ffdb08" stroke="#ffdb08" stroke-width="0.6"/>
<path d="M294.9 412.8L302.1 412.8L304.5 431.6L297.3 431.3Z" fill="#ffd008" stroke="#ffd008" stroke-width="0.6"/>
<path d="M302.1 412.8L311.5 412.8L313.8 431.9L304.5 431.6Z" fill="#ffc408" stroke="#ffc408" stroke-width="0.6"/>
<path d="M311.5 412.8L322.9 412.8L325.0 432.3L313.8 431.9Z" fill="#ffb708" stroke="#ffb708" stroke-width="0.6"/>
<path d="M322.9 412.8L336.3 412.8L338.1 432.7L325.0 432.3Z" fill="#ffa908" stroke="#ffa908" stroke-width="0.6"/>
<path d="M336.3 412.8L351.4 412.8L353.1 433.2L338.1 432.7Z" fill="#ff9c08" stroke="#ff9c08" stroke-width="0.6"/>
<path d="M351.4 412.8L368.1 412.8L369.6 433.7L353.1 433.2Z" fill="#ff8f08" stroke="#ff8f08" stroke-width="0.6"/>
<path d="M368.1 412.8L386.3 412.8L387.5 434.2L369.6 433.7Z" fill="#ff8408" stroke="#ff8408" stroke-width="0.6"/>
<path d="M386.3 412.8L405.7 412.8L406.6 434.6L387.5 434.2Z" fill="#ff7a08" stroke="#ff7a08" stroke-width="0.6"/>
<path d="M405.7 412.8L425.9 412.8L426.5 435.0L406.6 434.6Z" fill="#ff7308" stroke="#ff7308" stroke-width="0.6"/>
<path d="M425.9 412.8L446.8 412.8L447.1 435.3L426.5 435.0Z" fill="#ff6e08" stroke="#ff6e08" stroke-width="0.6"/>
<path d="M446.8 412.8L468.0 412.8L468.0 435.5L447.1 435.3Z" fill="#ff6c08" stroke="#ff6c08" stroke-width="0.6"/>
<path d="M468.0 412.8L488.9 412.8L488.6 435.3L468.0 435.5Z" fill="#ff6c08" stroke="#ff6c08" stroke-width="0.6"/>
<path d="M488.9 412.8L509.4 412.8L509.0 435.0L488.6 435.3Z" fill="#ff6e08" stroke="#ff6e08" stroke-width="0.6"/>
<path d="M509.4 412.8L529.4 412.8L528.7 434.6L509.0 435.0Z" fill="#ff7308" stroke="#ff7308" stroke-width="0.6"/>
<path d="M529.4 412.8L548.4 412.8L547.6 434.2L528.7 434.6Z" fill="#ff7a08" stroke="#ff7a08" stroke-width="0.6"/>
<path d="M548.4 412.8L566.3 412.8L565.3 433.7L547.6 434.2Z" fill="#ff8408" stroke="#ff8408" stroke-width="0.6"/>
<path d="M566.3 412.8L582.8 412.8L581.6 433.2L565.3 433.7Z" fill="#ff8f08" stroke="#ff8f08" stroke-width="0.6"/>
<path d="M582.8 412.8L597.7 412.8L596.3 432.7L581.6 433.2Z" fill="#ff9c08" stroke="#ff9c08" stroke-width="0.6"/>
<path d="M597.7 412.8L610.8 412.8L609.3 432.3L596.3 432.7Z" fill="#ffa908" stroke="#ffa908" stroke-width="0.6"/>
<path d="M610.8 412.8L622.0 412.8L620.4 431.9L609.3 432.3Z" fill="#ffb708" stroke="#ffb708" stroke-width="0.6"/>
<path d="M622.0 412.8L631.3 412.8L629.6 431.6L620.4 431.9Z" fill="#ffc408" stroke="#ffc408" stroke-width="0.6"/>
<path d="M631.3 412.8L638.4 412.8L636.7 431.3L629.6 431.6Z" fill="#ffd008" stroke="#ffd008" stroke-width="0.6"/>
<path d="M638.4 412.8L643.5 412.8L641.7 431.1L636.7 431.3Z" fill="#ffdb08" stroke="#ffdb08" stroke-width="0.6"/>
<path d="M643.5 412.8L646.5 412.8L644.7 431.0L641.7 431.1Z" fill="#ffe308" stroke="#ffe308" stroke-width="0.6"/>
<path d="M646.5 412.8L647.5 412.8L645.7 431.0L644.7 431.0Z" fill="#ffe908" stroke="#ffe908" stroke-width="0.6"/>
<path d="M288.3 431.0L289.2 431.0L292.0 447.3L291.1 446.9Z" fill="#ffea08" stroke="#ffea08" stroke-width="0.6"/>
<path d="M289.2 431.0L292.2 431.1L295.0 447.5L292.0 447.3Z" fill="#ffe508" stroke="#ffe508" stroke-width="0.6"/>
<path d="M292.2 431.1L297.3 431.3L300.0 447.9L295.0 447.5Z" fill="#ffde08" stroke="#ffde08" stroke-width="0.6"/>
<path d="M297.3 431.3L304.5 431.6L307.1 448.4L300.0 447.9Z" fill="#ffd508" stroke="#ffd508" stroke-width="0.6"/>
<path d="M304.5 431.6L313.8 431.9L316.2 449.0L307.1 448.4Z" fill="#ffcb08" stroke="#ffcb08" stroke-width="0.6"/>
<path d="M313.8 431.9L325.0 432.3L327.2 449.8L316.2 449.0Z" fill="#ffc008" stroke="#ffc008" stroke-width="0.6"/>
<path d="M325.0 432.3L338.1 432.7L340.2 450.7L327.2 449.8Z" fill="#ffb408" stroke="#ffb408" stroke-width="0.6"/>
<path d="M338.1 432.7L353.1 433.2L354.8 451.6L340.2 450.7Z" fill="#ffa708" stroke="#ffa708" stroke-width="0.6"/>
<path d="M353.1 433.2L369.6 433.7L371.1 452.6L354.8 451.6Z" fill="#ff9c08" stroke="#ff9c08" stroke-width="0.6"/>
<path d="M369.6 433.7L387.5 434.2L388.7 453.5L371.1 452.6Z" fill="#ff9108" stroke="#ff9108" stroke-width="0.6"/>
<path d="M387.5 434.2L406.6 434.6L407.5 454.4L388.7 453.5Z" fill="#ff8808" stroke="#ff8808" stroke-width="0.6"/>
<path d="M406.6 434.6L426.5 435.0L427.2 455.2L407.5 454.4Z" fill="#ff8108" stroke="#ff8108" stroke-width="0.6"/>
<path d="M426.5 435.0L447.1 435.3L447.4 455.8L427.2 455.2Z" fill="#ff7c08" stroke="#ff7c08" stroke-width="0.6"/>
<path d="M447.1 435.3L468.0 435.5L468.0 456.2L447.4 455.8Z" fill="#ff7908" stroke="#ff7908" stroke-width="0.6"/>
<path d="M468.0 435.5L488.6 435.3L488.5 455.8L468.0 456.2Z" fill="#ff7908" stroke="#ff7908" stroke-width="0.6"/>
<path d="M488.6 435.3L509.0 435.0L508.6 455.2L488.5 455.8Z" fill="#ff7c08" stroke="#ff7c08" stroke-width="0.6"/>
<path d="M509.0 435.0L528.7 434.6L528.2 454.4L508.6 455.2Z" fill="#ff8108" stroke="#ff8108" stroke-width="0.6"/>
<path d="M528.7 434.6L547.6 434.2L546.8 453.5L528.2 454.4Z" fill="#ff8808" stroke="#ff8808" stroke-width="0.6"/>
<path d="M547.6 434.2L565.3 433.7L564.4 452.6L546.8 453.5Z" fill="#ff9108" stroke="#ff9108" stroke-width="0.6"/>
<path d="M565.3 433.7L581.6 433.2L580.5 451.6L564.4 452.6Z" fill="#ff9c08" stroke="#ff9c08" stroke-width="0.6"/>
<path d="M581.6 433.2L596.3 432.7L595.1 450.7L580.5 451.6Z" fill="#ffa708" stroke="#ffa708" stroke-width="0.6"/>
<path d="M596.3 432.7L609.3 432.3L608.0 449.8L595.1 450.7Z" fill="#ffb408" stroke="#ffb408" stroke-width="0.6"/>
<path d="M609.3 432.3L620.4 431.9L619.0 449.0L608.0 449.8Z" fill="#ffc008" stroke="#ffc008" stroke-width="0.6"/>
<path d="M620.4 431.9L629.6 431.6L628.0 448.4L619.0 449.0Z" fill="#ffcb08" stroke="#ffcb08" stroke-width="0.6"/>
<path d="M629.6 431.6L636.7 431.3L635.1 447.9L628.0 448.4Z" fill="#ffd508" stroke="#ffd508" stroke-width="0.6"/>
<path d="M636.7 431.3L641.7 431.1L640.1 447.5L635.1 447.9Z" fill="#ffde08" stroke="#ffde08" stroke-width="0.6"/>
<path d="M641.7 431.1L644.7 431.0L643.0 447.3L640.1 447.5Z" fill="#ffe508" stroke="#ffe508" stroke-width="0.6"/>
<path d="M644.7 431.0L645.7 431.0L644.0 447.2L643.0 447.3Z" fill="#ffea08" stroke="#ffea08" stroke-width="0.6"/>
<path d="M291.1 446.9L292.0 447.3L296.6 463.2L295.7 462.8Z" fill="#ffec08" stroke="#ffec08" stroke-width="0.6"/>
<path d="M292.0 447.3L295.0 447.5L299.5 463.5L296.6 463.2Z" fill="#ffe708" stroke="#ffe708" stroke-width="0.6"/>
<path d="M295.0 447.5L300.0 447.9L304.4 464.0L299.5 463.5Z" fill="#ffe108" stroke="#ffe108" stroke-width="0.6"/>
<path d="M300.0 447.9L307.1 448.4L311.3 464.8L304.4 464.0Z" fill="#ffd908" stroke="#ffd908" stroke-width="0.6"/>
<path d="M307.1 448.4L316.2 449.0L320.1 465.7L311.3 464.8Z" fill="#ffd008" stroke="#ffd008" stroke-width="0.6"/>
<path d="M316.2 449.0L327.2 449.8L330.9 466.7L320.1 465.7Z" fill="#ffc608" stroke="#ffc608" stroke-width="0.6"/>
<path d="M327.2 449.8L340.2 450.7L343.5 467.9L330.9 466.7Z" fill="#ffbc08" stroke="#ffbc08" stroke-width="0.6"/>
<path d="M340.2 450.7L354.8 451.6L357.8 469.2L343.5 467.9Z" fill="#ffb108" stroke="#ffb108" stroke-width="0.6"/>
<path d="M354.8 451.6L371.1 452.6L373.6 470.5L357.8 469.2Z" fill="#ffa708" stroke="#ffa708" stroke-width="0.6"/>
<path d="M371.1 452.6L388.7 453.5L390.8 471.9L373.6 470.5Z" fill="#ff9d08" stroke="#ff9d08" stroke-width="0.6"/>
<path d="M388.7 453.5L407.5 454.4L409.1 473.1L390.8 471.9Z" fill="#ff9508" stroke="#ff9508" stroke-width="0.6"/>
<path d="M407.5 454.4L427.2 455.2L428.2 474.2L409.1 473.1Z" fill="#ff8e08" stroke="#ff8e08" stroke-width="0.6"/>
<path d="M427.2 455.2L447.4 455.8L448.0 475.1L428.2 474.2Z" fill="#ff8908" stroke="#ff8908" stroke-width="0.6"/>
<path d="M447.4 455.8L468.0 456.2L468.0 475.6L448.0 475.1Z" fill="#ff8608" stroke="#ff8608" stroke-width="0.6"/>
<path d="M468.0 456.2L488.5 455.8L488.3 475.1L468.0 475.6Z" fill="#ff8608" stroke="#ff8608" stroke-width="0.6"/>
<path d="M488.5 455.8L508.6 455.2L508.2 474.2L488.3 475.1Z" fill="#ff8908" stroke="#ff8908" stroke-width="0.6"/>
<path d="M508.6 455.2L528.2 454.4L527.6 473.1L508.2 474.2Z" fill="#ff8e08" stroke="#ff8e08" stroke-width="0.6"/>
<path d="M528.2 454.4L546.8 453.5L546.1 471.9L527.6 473.1Z" fill="#ff9508" stroke="#ff9508" stroke-width="0.6"/>
<path d="M546.8 453.5L564.4 452.6L563.5 470.5L546.1 471.9Z" fill="#ff9d08" stroke="#ff9d08" stroke-width="0.6"/>
<path d="M564.4 452.6L580.5 451.6L579.5 469.2L563.5 470.5Z" fill="#ffa708" stroke="#ffa708" stroke-width="0.6"/>
<path d="M580.5 451.6L595.1 450.7L594.0 467.9L579.5 469.2Z" fill="#ffb108" stroke="#ffb108" stroke-width="0.6"/>
<path d="M595.1 450.7L608.0 449.8L606.7 466.7L594.0 467.9Z" fill="#ffbc08" stroke="#ffbc08" stroke-width="0.6"/>
<path d="M608.0 449.8L619.0 449.0L617.6 465.7L606.7 466.7Z" fill="#ffc608" stroke="#ffc608" stroke-width="0.6"/>
<path d="M619.0 449.0L628.0 448.4L626.6 464.8L617.6 465.7Z" fill="#ffd008" stroke="#ffd008" stroke-width="0.6"/>
<path d="M628.0 448.4L635.1 447.9L633.5 464.0L626.6 464.8Z" fill="#ffd908" stroke="#ffd908" stroke-width="0.6"/>
<path d="M635.1 447.9L640.1 447.5L638.5 463.5L633.5 464.0Z" fill="#ffe108" stroke="#ffe108" stroke-width="0.6"/>
<path d="M640.1 447.5L643.0 447.3L641.4 463.2L638.5 463.5Z" fill="#ffe708" stroke="#ffe708" stroke-width="0.6"/>
<path d="M643.0 447.3L644.0 447.2L642.4 463.1L641.4 463.2Z" fill="#ffec08" stroke="#ffec08" stroke-width="0.6"/>
<path d="M295.7 462.8L296.6 463.2L300.8 478.6L299.8 478.2Z" fill="#ffed08" stroke="#ffed08" stroke-width="0.6"/>
<path d="M296.6 463.2L299.5 463.5L303.6 479.0L300.8 478.6Z" fill="#ffe908" stroke="#ffe908" stroke-width="0.6"/>
<path d="M299.5 463.5L304.4 464.0L308.4 479.7L303.6 479.0Z" fill="#ffe408" stroke="#ffe408" stroke-width="0.6"/>
<path d="M304.4 464.0L311.3 464.8L315.1 480.6L308.4 479.7Z" fill="#ffdd08" stroke="#ffdd08" stroke-width="0.6"/>
<path d="M311.3 464.8L320.1 465.7L323.7 481.8L315.1 480.6Z" fill="#ffd408" stroke="#ffd408" stroke-width="0.6"/>
<path d="M320.1 465.7L330.9 466.7L334.2 483.1L323.7 481.8Z" fill="#ffcc08" stroke="#ffcc08" stroke-width="0.6"/>
<path d="M330.9 466.7L343.5 467.9L346.5 484.7L334.2 483.1Z" fill="#ffc208" stroke="#ffc208" stroke-width="0.6"/>
<path d="M343.5 467.9L357.8 469.2L360.5 486.3L346.5 484.7Z" fill="#ffb908" stroke="#ffb908" stroke-width="0.6"/>
<path d="M357.8 469.2L373.6 470.5L375.9 488.0L360.5 486.3Z" fill="#ffaf08" stroke="#ffaf08" stroke-width="0.6"/>
<path d="M373.6 470.5L390.8 471.9L392.7 489.7L375.9 488.0Z" fill="#ffa708" stroke="#ffa708" stroke-width="0.6"/>
<path d="M390.8 471.9L409.1 473.1L410.5 491.3L392.7 489.7Z" fill="#ffa008" stroke="#ffa008" stroke-width="0.6"/>
<path d="M409.1 473.1L428.2 474.2L429.2 492.7L410.5 491.3Z" fill="#ff9a08" stroke="#ff9a08" stroke-width="0.6"/>
<path d="M428.2 474.2L448.0 475.1L448.5 493.9L429.2 492.7Z" fill="#ff9608" stroke="#ff9608" stroke-width="0.6"/>
<path d="M448.0 475.1L468.0 475.6L468.0 494.5L448.5 493.9Z" fill="#ff9308" stroke="#ff9308" stroke-width="0.6"/>
<path d="M468.0 475.6L488.3 475.1L487.8 493.9L468.0 494.5Z" fill="#ff9308" stroke="#ff9308" stroke-width="0.6"/>
<path d="M488.3 475.1L508.2 474.2L507.4 492.7L487.8 493.9Z" fill="#ff9608" stroke="#ff9608" stroke-width="0.6"/>
<path d="M508.2 474.2L527.6 473.1L526.4 491.3L507.4 492.7Z" fill="#ff9a08" stroke="#ff9a08" stroke-width="0.6"/>
<path d="M527.6 473.1L546.1 471.9L544.5 489.7L526.4 491.3Z" fill="#ffa008" stroke="#ffa008" stroke-width="0.6"/>
<path d="M546.1 471.9L563.5 470.5L561.5 488.0L544.5 489.7Z" fill="#ffa708" stroke="#ffa708" stroke-width="0.6"/>
<path d="M563.5 470.5L579.5 469.2L577.2 486.3L561.5 488.0Z" fill="#ffaf08" stroke="#ffaf08" stroke-width="0.6"/>
<path d="M579.5 469.2L594.0 467.9L591.3 484.7L577.2 486.3Z" fill="#ffb908" stroke="#ffb908" stroke-width="0.6"/>
<path d="M594.0 467.9L606.7 466.7L603.8 483.1L591.3 484.7Z" fill="#ffc208" stroke="#ffc208" stroke-width="0.6"/>
<path d="M606.7 466.7L617.6 465.7L614.5 481.8L603.8 483.1Z" fill="#ffcc08" stroke="#ffcc08" stroke-width="0.6"/>
<path d="M617.6 465.7L626.6 464.8L623.2 480.6L614.5 481.8Z" fill="#ffd408" stroke="#ffd408" stroke-width="0.6"/>
<path d="M626.6 464.8L633.5 464.0L630.1 479.7L623.2 480.6Z" fill="#ffdd08" stroke="#ffdd08" stroke-width="0.6"/>
<path d="M633.5 464.0L638.5 463.5L634.9 479.0L630.1 479.7Z" fill="#ffe408" stroke="#ffe408" stroke-width="0.6"/>
<path d="M638.5 463.5L641.4 463.2L637.8 478.6L634.9 479.0Z" fill="#ffe908" stroke="#ffe908" stroke-width="0.6"/>
<path d="M641.4 463.2L642.4 463.1L638.7 478.2L637.8 478.6Z" fill="#ffed08" stroke="#ffed08" stroke-width="0.6"/>
<path d="M299.8 478.2L300.8 478.6L304.6 493.0L303.7 492.6Z" fill="#ffea08" stroke="#ffea08" stroke-width="0.6"/>
<path d="M300.8 478.6L303.6 479.0L307.3 493.5L304.6 493.0Z" fill="#ffe608" stroke="#ffe608" stroke-width="0.6"/>
<path d="M303.6 479.0L308.4 479.7L312.0 494.3L307.3 493.5Z" fill="#ffe108" stroke="#ffe108" stroke-width="0.6"/>
<path d="M308.4 479.7L315.1 480.6L318.6 495.4L312.0 494.3Z" fill="#ffdb08" stroke="#ffdb08" stroke-width="0.6"/>
<path d="M315.1 480.6L323.7 481.8L327.0 496.7L318.6 495.4Z" fill="#ffd408" stroke="#ffd408" stroke-width="0.6"/>
<path d="M323.7 481.8L334.2 483.1L337.3 498.3L327.0 496.7Z" fill="#ffcc08" stroke="#ffcc08" stroke-width="0.6"/>
<path d="M334.2 483.1L346.5 484.7L349.3 500.0L337.3 498.3Z" fill="#ffc408" stroke="#ffc408" stroke-width="0.6"/>
<path d="M346.5 484.7L360.5 486.3L362.9 501.9L349.3 500.0Z" fill="#ffbb08" stroke="#ffbb08" stroke-width="0.6"/>
<path d="M360.5 486.3L375.9 488.0L378.0 503.9L362.9 501.9Z" fill="#ffb308" stroke="#ffb308" stroke-width="0.6"/>
<path d="M375.9 488.0L392.7 489.7L394.4 505.9L378.0 503.9Z" fill="#ffac08" stroke="#ffac08" stroke-width="0.6"/>
<path d="M392.7 489.7L410.5 491.3L411.8 507.7L394.4 505.9Z" fill="#ffa508" stroke="#ffa508" stroke-width="0.6"/>
<path d="M410.5 491.3L429.2 492.7L430.1 509.3L411.8 507.7Z" fill="#ffa008" stroke="#ffa008" stroke-width="0.6"/>
<path d="M429.2 492.7L448.5 493.9L448.9 510.7L430.1 509.3Z" fill="#ff9d08" stroke="#ff9d08" stroke-width="0.6"/>
<path d="M448.5 493.9L468.0 494.5L468.0 511.4L448.9 510.7Z" fill="#ff9b08" stroke="#ff9b08" stroke-width="0.6"/>
<path d="M468.0 494.5L487.8 493.9L487.3 510.7L468.0 511.4Z" fill="#ff9b08" stroke="#ff9b08" stroke-width="0.6"/>
<path d="M487.8 493.9L507.4 492.7L506.4 509.3L487.3 510.7Z" fill="#ff9d08" stroke="#ff9d08" stroke-width="0.6"/>
<path d="M507.4 492.7L526.4 491.3L524.9 507.7L506.4 509.3Z" fill="#ffa008" stroke="#ffa008" stroke-width="0.6"/>
<path d="M526.4 491.3L544.5 489.7L542.6 505.9L524.9 507.7Z" fill="#ffa508" stroke="#ffa508" stroke-width="0.6"/>
<path d="M544.5 489.7L561.5 488.0L559.2 503.9L542.6 505.9Z" fill="#ffac08" stroke="#ffac08" stroke-width="0.6"/>
<path d="M561.5 488.0L577.2 486.3L574.5 501.9L559.2 503.9Z" fill="#ffb308" stroke="#ffb308" stroke-width="0.6"/>
<path d="M577.2 486.3L591.3 484.7L588.3 500.0L574.5 501.9Z" fill="#ffbb08" stroke="#ffbb08" stroke-width="0.6"/>
<path d="M591.3 484.7L603.8 483.1L600.4 498.3L588.3 500.0Z" fill="#ffc408" stroke="#ffc408" stroke-width="0.6"/>
<path d="M603.8 483.1L614.5 481.8L610.8 496.7L600.4 498.3Z" fill="#ffcc08" stroke="#ffcc08" stroke-width="0.6"/>
<path d="M614.5 481.8L623.2 480.6L619.4 495.4L610.8 496.7Z" fill="#ffd408" stroke="#ffd408" stroke-width="0.6"/>
<path d="M623.2 480.6L630.1 479.7L626.1 494.3L619.4 495.4Z" fill="#ffdb08" stroke="#ffdb08" stroke-width="0.6"/>
<path d="M630.1 479.7L634.9 479.0L630.8 493.5L626.1 494.3Z" fill="#ffe108" stroke="#ffe108" stroke-width="0.6"/>
<path d="M634.9 479.0L637.8 478.6L633.6 493.0L630.8 493.5Z" fill="#ffe608" stroke="#ffe608" stroke-width="0.6"/>
<path d="M637.8 478.6L638.7 478.2L634.5 492.6L633.6 493.0Z" fill="#ffea08" stroke="#ffea08" stroke-width="0.6"/>
<path d="M303.7 492.6L304.6 493.0L311.3 506.6L310.5 506.1Z" fill="#ffe208" stroke="#ffe208" stroke-width="0.6"/>
<path d="M304.6 493.0L307.3 493.5L314.0 507.1L311.3 506.6Z" fill="#ffdf08" stroke="#ffdf08" stroke-width="0.6"/>
<path d="M307.3 493.5L312.0 494.3L318.5 508.0L314.0 507.1Z" fill="#ffda08" stroke="#ffda08" stroke-width="0.6"/>
<path d="M312.0 494.3L318.6 495.4L324.7 509.2L318.5 508.0Z" fill="#ffd508" stroke="#ffd508" stroke-width="0.6"/>
<path d="M318.6 495.4L327.0 496.7L332.8 510.7L324.7 509.2Z" fill="#ffcf08" stroke="#ffcf08" stroke-width="0.6"/>
<path d="M327.0 496.7L337.3 498.3L342.7 512.5L332.8 510.7Z" fill="#ffc808" stroke="#ffc808" stroke-width="0.6"/>
<path d="M337.3 498.3L349.3 500.0L354.2 514.5L342.7 512.5Z" fill="#ffc008" stroke="#ffc008" stroke-width="0.6"/>
<path d="M349.3 500.0L362.9 501.9L367.3 516.7L354.2 514.5Z" fill="#ffb908" stroke="#ffb908" stroke-width="0.6"/>
<path d="M362.9 501.9L378.0 503.9L381.7 518.9L367.3 516.7Z" fill="#ffb208" stroke="#ffb208" stroke-width="0.6"/>
<path d="M378.0 503.9L394.4 505.9L397.4 521.1L381.7 518.9Z" fill="#ffab08" stroke="#ffab08" stroke-width="0.6"/>
<path d="M394.4 505.9L411.8 507.7L414.2 523.2L397.4 521.1Z" fill="#ffa608" stroke="#ffa608" stroke-width="0.6"/>
<path d="M411.8 507.7L430.1 509.3L431.7 525.1L414.2 523.2Z" fill="#ffa108" stroke="#ffa108" stroke-width="0.6"/>
<path d="M430.1 509.3L448.9 510.7L449.7 526.6L431.7 525.1Z" fill="#ff9e08" stroke="#ff9e08" stroke-width="0.6"/>
<path d="M448.9 510.7L468.0 511.4L468.0 527.4L449.7 526.6Z" fill="#ff9d08" stroke="#ff9d08" stroke-width="0.6"/>
<path d="M468.0 511.4L487.3 510.7L486.7 526.6L468.0 527.4Z" fill="#ff9d08" stroke="#ff9d08" stroke-width="0.6"/>
<path d="M487.3 510.7L506.4 509.3L505.0 525.1L486.7 526.6Z" fill="#ff9e08" stroke="#ff9e08" stroke-width="0.6"/>
<path d="M506.4 509.3L524.9 507.7L522.9 523.2L505.0 525.1Z" fill="#ffa108" stroke="#ffa108" stroke-width="0.6"/>
<path d="M524.9 507.7L542.6 505.9L539.9 521.1L522.9 523.2Z" fill="#ffa608" stroke="#ffa608" stroke-width="0.6"/>
<path d="M542.6 505.9L559.2 503.9L555.9 518.9L539.9 521.1Z" fill="#ffab08" stroke="#ffab08" stroke-width="0.6"/>
<path d="M559.2 503.9L574.5 501.9L570.6 516.7L555.9 518.9Z" fill="#ffb208" stroke="#ffb208" stroke-width="0.6"/>
<path d="M574.5 501.9L588.3 500.0L584.0 514.5L570.6 516.7Z" fill="#ffb908" stroke="#ffb908" stroke-width="0.6"/>
<path d="M588.3 500.0L600.4 498.3L595.7 512.5L584.0 514.5Z" fill="#ffc008" stroke="#ffc008" stroke-width="0.6"/>
<path d="M600.4 498.3L610.8 496.7L605.7 510.7L595.7 512.5Z" fill="#ffc808" stroke="#ffc808" stroke-width="0.6"/>
<path d="M610.8 496.7L619.4 495.4L614.0 509.2L605.7 510.7Z" fill="#ffcf08" stroke="#ffcf08" stroke-width="0.6"/>
<path d="M619.4 495.4L626.1 494.3L620.4 508.0L614.0 509.2Z" fill="#ffd508" stroke="#ffd508" stroke-width="0.6"/>
<path d="M626.1 494.3L630.8 493.5L625.0 507.1L620.4 508.0Z" fill="#ffda08" stroke="#ffda08" stroke-width="0.6"/>
<path d="M630.8 493.5L633.6 493.0L627.6 506.6L625.0 507.1Z" fill="#ffdf08" stroke="#ffdf08" stroke-width="0.6"/>
<path d="M633.6 493.0L634.5 492.6L628.5 506.1L627.6 506.6Z" fill="#ffe208" stroke="#ffe208" stroke-width="0.6"/>
<path d="M310.5 506.1L311.3 506.6L320.0 521.9L319.2 521.4Z" fill="#ffda08" stroke="#ffda08" stroke-width="0.6"/>
<path d="M311.3 506.6L314.0 507.1L322.5 522.4L320.0 521.9Z" fill="#ffd708" stroke="#ffd708" stroke-width="0.6"/>
<path d="M314.0 507.1L318.5 508.0L326.7 523.4L322.5 522.4Z" fill="#ffd408" stroke="#ffd408" stroke-width="0.6"/>
<path d="M318.5 508.0L324.7 509.2L332.6 524.7L326.7 523.4Z" fill="#ffcf08" stroke="#ffcf08" stroke-width="0.6"/>
<path d="M324.7 509.2L332.8 510.7L340.3 526.3L332.6 524.7Z" fill="#ffc908" stroke="#ffc908" stroke-width="0.6"/>
<path d="M332.8 510.7L342.7 512.5L349.6 528.2L340.3 526.3Z" fill="#ffc308" stroke="#ffc308" stroke-width="0.6"/>
<path d="M342.7 512.5L354.2 514.5L360.5 530.4L349.6 528.2Z" fill="#ffbd08" stroke="#ffbd08" stroke-width="0.6"/>
<path d="M354.2 514.5L367.3 516.7L372.8 532.7L360.5 530.4Z" fill="#ffb708" stroke="#ffb708" stroke-width="0.6"/>
<path d="M367.3 516.7L381.7 518.9L386.5 535.1L372.8 532.7Z" fill="#ffb108" stroke="#ffb108" stroke-width="0.6"/>
<path d="M381.7 518.9L397.4 521.1L401.3 537.5L386.5 535.1Z" fill="#ffab08" stroke="#ffab08" stroke-width="0.6"/>
<path d="M397.4 521.1L414.2 523.2L417.1 539.7L401.3 537.5Z" fill="#ffa608" stroke="#ffa608" stroke-width="0.6"/>
<path d="M414.2 523.2L431.7 525.1L433.7 541.7L417.1 539.7Z" fill="#ffa308" stroke="#ffa308" stroke-width="0.6"/>
<path d="M431.7 525.1L449.7 526.6L450.7 543.3L433.7 541.7Z" fill="#ffa008" stroke="#ffa008" stroke-width="0.6"/>
<path d="M449.7 526.6L468.0 527.4L468.0 544.2L450.7 543.3Z" fill="#ff9f08" stroke="#ff9f08" stroke-width="0.6"/>
<path d="M468.0 527.4L486.7 526.6L485.7 543.3L468.0 544.2Z" fill="#ff9f08" stroke="#ff9f08" stroke-width="0.6"/>
<path d="M486.7 526.6L505.0 525.1L503.2 541.7L485.7 543.3Z" fill="#ffa008" stroke="#ffa008" stroke-width="0.6"/>
<path d="M505.0 525.1L522.9 523.2L520.1 539.7L503.2 541.7Z" fill="#ffa308" stroke="#ffa308" stroke-width="0.6"/>
<path d="M522.9 523.2L539.9 521.1L536.3 537.5L520.1 539.7Z" fill="#ffa608" stroke="#ffa608" stroke-width="0.6"/>
<path d="M539.9 521.1L555.9 518.9L551.4 535.1L536.3 537.5Z" fill="#ffab08" stroke="#ffab08" stroke-width="0.6"/>
<path d="M555.9 518.9L570.6 516.7L565.4 532.7L551.4 535.1Z" fill="#ffb108" stroke="#ffb108" stroke-width="0.6"/>
<path d="M570.6 516.7L584.0 514.5L578.1 530.4L565.4 532.7Z" fill="#ffb708" stroke="#ffb708" stroke-width="0.6"/>
<path d="M584.0 514.5L595.7 512.5L589.2 528.2L578.1 530.4Z" fill="#ffbd08" stroke="#ffbd08" stroke-width="0.6"/>
<path d="M595.7 512.5L605.7 510.7L598.8 526.3L589.2 528.2Z" fill="#ffc308" stroke="#ffc308" stroke-width="0.6"/>
<path d="M605.7 510.7L614.0 509.2L606.6 524.7L598.8 526.3Z" fill="#ffc908" stroke="#ffc908" stroke-width="0.6"/>
<path d="M614.0 509.2L620.4 508.0L612.7 523.4L606.6 524.7Z" fill="#ffcf08" stroke="#ffcf08" stroke-width="0.6"/>
<path d="M620.4 508.0L625.0 507.1L617.0 522.4L612.7 523.4Z" fill="#ffd408" stroke="#ffd408" stroke-width="0.6"/>
<path d="M625.0 507.1L627.6 506.6L619.6 521.9L617.0 522.4Z" fill="#ffd708" stroke="#ffd708" stroke-width="0.6"/>
<path d="M627.6 506.6L628.5 506.1L620.4 521.4L619.6 521.9Z" fill="#ffda08" stroke="#ffda08" stroke-width="0.6"/>
<path d="M319.2 521.4L320.0 521.9L328.7 536.5L327.9 536.0Z" fill="#ffd208" stroke="#ffd208" stroke-width="0.6"/>
<path d="M320.0 521.9L322.5 522.4L331.0 537.1L328.7 536.5Z" fill="#ffd008" stroke="#ffd008" stroke-width="0.6"/>
<path d="M322.5 522.4L326.7 523.4L335.0 538.1L331.0 537.1Z" fill="#ffcc08" stroke="#ffcc08" stroke-width="0.6"/>
<path d="M326.7 523.4L332.6 524.7L340.6 539.5L335.0 538.1Z" fill="#ffc808" stroke="#ffc808" stroke-width="0.6"/>
<path d="M332.6 524.7L340.3 526.3L347.8 541.2L340.6 539.5Z" fill="#ffc308" stroke="#ffc308" stroke-width="0.6"/>
<path d="M340.3 526.3L349.6 528.2L356.5 543.3L347.8 541.2Z" fill="#ffbd08" stroke="#ffbd08" stroke-width="0.6"/>
<path d="M349.6 528.2L360.5 530.4L366.8 545.6L356.5 543.3Z" fill="#ffb708" stroke="#ffb708" stroke-width="0.6"/>
<path d="M360.5 530.4L372.8 532.7L378.4 548.0L366.8 545.6Z" fill="#ffb108" stroke="#ffb108" stroke-width="0.6"/>
<path d="M372.8 532.7L386.5 535.1L391.3 550.6L378.4 548.0Z" fill="#ffac08" stroke="#ffac08" stroke-width="0.6"/>
<path d="M386.5 535.1L401.3 537.5L405.2 553.1L391.3 550.6Z" fill="#ffa708" stroke="#ffa708" stroke-width="0.6"/>
<path d="M401.3 537.5L417.1 539.7L420.1 555.5L405.2 553.1Z" fill="#ffa308" stroke="#ffa308" stroke-width="0.6"/>
<path d="M417.1 539.7L433.7 541.7L435.7 557.6L420.1 555.5Z" fill="#ff9f08" stroke="#ff9f08" stroke-width="0.6"/>
<path d="M433.7 541.7L450.7 543.3L451.7 559.3L435.7 557.6Z" fill="#ff9d08" stroke="#ff9d08" stroke-width="0.6"/>
<path d="M450.7 543.3L468.0 544.2L468.0 560.3L451.7 559.3Z" fill="#ff9c08" stroke="#ff9c08" stroke-width="0.6"/>
<path d="M468.0 544.2L485.7 543.3L484.7 559.3L468.0 560.3Z" fill="#ff9c08" stroke="#ff9c08" stroke-width="0.6"/>
<path d="M485.7 543.3L503.2 541.7L501.1 557.6L484.7 559.3Z" fill="#ff9d08" stroke="#ff9d08" stroke-width="0.6"/>
<path d="M503.2 541.7L520.1 539.7L517.1 555.5L501.1 557.6Z" fill="#ff9f08" stroke="#ff9f08" stroke-width="0.6"/>
<path d="M520.1 539.7L536.3 537.5L532.3 553.1L517.1 555.5Z" fill="#ffa308" stroke="#ffa308" stroke-width="0.6"/>
<path d="M536.3 537.5L551.4 535.1L546.6 550.6L532.3 553.1Z" fill="#ffa708" stroke="#ffa708" stroke-width="0.6"/>
<path d="M551.4 535.1L565.4 532.7L559.8 548.0L546.6 550.6Z" fill="#ffac08" stroke="#ffac08" stroke-width="0.6"/>
<path d="M565.4 532.7L578.1 530.4L571.7 545.6L559.8 548.0Z" fill="#ffb108" stroke="#ffb108" stroke-width="0.6"/>
<path d="M578.1 530.4L589.2 528.2L582.2 543.3L571.7 545.6Z" fill="#ffb708" stroke="#ffb708" stroke-width="0.6"/>
<path d="M589.2 528.2L598.8 526.3L591.2 541.2L582.2 543.3Z" fill="#ffbd08" stroke="#ffbd08" stroke-width="0.6"/>
<path d="M598.8 526.3L606.6 524.7L598.6 539.5L591.2 541.2Z" fill="#ffc308" stroke="#ffc308" stroke-width="0.6"/>
<path d="M606.6 524.7L612.7 523.4L604.3 538.1L598.6 539.5Z" fill="#ffc808" stroke="#ffc808" stroke-width="0.6"/>
<path d="M612.7 523.4L617.0 522.4L608.4 537.1L604.3 538.1Z" fill="#ffcc08" stroke="#ffcc08" stroke-width="0.6"/>
<path d="M617.0 522.4L619.6 521.9L610.8 536.5L608.4 537.1Z" fill="#ffd008" stroke="#ffd008" stroke-width="0.6"/>
<path d="M619.6 521.9L620.4 521.4L611.6 536.0L610.8 536.5Z" fill="#ffd208" stroke="#ffd208" stroke-width="0.6"/>
<path d="M327.9 536.0L328.7 536.5L336.9 550.4L336.2 549.9Z" fill="#ffc608" stroke="#ffc608" stroke-width="0.6"/>
<path d="M328.7 536.5L331.0 537.1L339.2 551.0L336.9 550.4Z" fill="#ffc408" stroke="#ffc408" stroke-width="0.6"/>
<path d="M331.0 537.1L335.0 538.1L342.9 552.0L339.2 551.0Z" fill="#ffc108" stroke="#ffc108" stroke-width="0.6"/>
<path d="M335.0 538.1L340.6 539.5L348.2 553.4L342.9 552.0Z" fill="#ffbd08" stroke="#ffbd08" stroke-width="0.6"/>
<path d="M340.6 539.5L347.8 541.2L354.9 555.2L348.2 553.4Z" fill="#ffb808" stroke="#ffb808" stroke-width="0.6"/>
<path d="M347.8 541.2L356.5 543.3L363.2 557.3L354.9 555.2Z" fill="#ffb308" stroke="#ffb308" stroke-width="0.6"/>
<path d="M356.5 543.3L366.8 545.6L372.8 559.7L363.2 557.3Z" fill="#ffad08" stroke="#ffad08" stroke-width="0.6"/>
<path d="M366.8 545.6L378.4 548.0L383.7 562.2L372.8 559.7Z" fill="#ffa808" stroke="#ffa808" stroke-width="0.6"/>
<path d="M378.4 548.0L391.3 550.6L395.8 564.8L383.7 562.2Z" fill="#ffa308" stroke="#ffa308" stroke-width="0.6"/>
<path d="M391.3 550.6L405.2 553.1L409.0 567.4L395.8 564.8Z" fill="#ff9e08" stroke="#ff9e08" stroke-width="0.6"/>
<path d="M405.2 553.1L420.1 555.5L423.0 569.8L409.0 567.4Z" fill="#ff9a08" stroke="#ff9a08" stroke-width="0.6"/>
<path d="M420.1 555.5L435.7 557.6L437.6 572.0L423.0 569.8Z" fill="#ff9708" stroke="#ff9708" stroke-width="0.6"/>
<path d="M435.7 557.6L451.7 559.3L452.7 573.7L437.6 572.0Z" fill="#ff9508" stroke="#ff9508" stroke-width="0.6"/>
<path d="M451.7 559.3L468.0 560.3L468.0 574.7L452.7 573.7Z" fill="#ff9408" stroke="#ff9408" stroke-width="0.6"/>
<path d="M468.0 560.3L484.7 559.3L483.7 573.7L468.0 574.7Z" fill="#ff9408" stroke="#ff9408" stroke-width="0.6"/>
<path d="M484.7 559.3L501.1 557.6L499.1 572.0L483.7 573.7Z" fill="#ff9508" stroke="#ff9508" stroke-width="0.6"/>
<path d="M501.1 557.6L517.1 555.5L514.0 569.8L499.1 572.0Z" fill="#ff9708" stroke="#ff9708" stroke-width="0.6"/>
<path d="M517.1 555.5L532.3 553.1L528.3 567.4L514.0 569.8Z" fill="#ff9a08" stroke="#ff9a08" stroke-width="0.6"/>
<path d="M532.3 553.1L546.6 550.6L541.8 564.8L528.3 567.4Z" fill="#ff9e08" stroke="#ff9e08" stroke-width="0.6"/>
<path d="M546.6 550.6L559.8 548.0L554.1 562.2L541.8 564.8Z" fill="#ffa308" stroke="#ffa308" stroke-width="0.6"/>
<path d="M559.8 548.0L571.7 545.6L565.3 559.7L554.1 562.2Z" fill="#ffa808" stroke="#ffa808" stroke-width="0.6"/>
<path d="M571.7 545.6L582.2 543.3L575.2 557.3L565.3 559.7Z" fill="#ffad08" stroke="#ffad08" stroke-width="0.6"/>
<path d="M582.2 543.3L591.2 541.2L583.6 555.2L575.2 557.3Z" fill="#ffb308" stroke="#ffb308" stroke-width="0.6"/>
<path d="M591.2 541.2L598.6 539.5L590.5 553.4L583.6 555.2Z" fill="#ffb808" stroke="#ffb808" stroke-width="0.6"/>
<path d="M598.6 539.5L604.3 538.1L595.9 552.0L590.5 553.4Z" fill="#ffbd08" stroke="#ffbd08" stroke-width="0.6"/>
<path d="M604.3 538.1L608.4 537.1L599.7 551.0L595.9 552.0Z" fill="#ffc108" stroke="#ffc108" stroke-width="0.6"/>
<path d="M608.4 537.1L610.8 536.5L602.0 550.4L599.7 551.0Z" fill="#ffc408" stroke="#ffc408" stroke-width="0.6"/>
<path d="M610.8 536.5L611.6 536.0L602.7 549.9L602.0 550.4Z" fill="#ffc608" stroke="#ffc608" stroke-width="0.6"/>
<path d="M336.2 549.9L336.9 550.4L344.4 563.2L343.7 562.7Z" fill="#ffb608" stroke="#ffb608" stroke-width="0.6"/>
<path d="M336.9 550.4L339.2 551.0L346.5 563.8L344.4 563.2Z" fill="#ffb408" stroke="#ffb408" stroke-width="0.6"/>
<path d="M339.2 551.0L342.9 552.0L350.0 564.9L346.5 563.8Z" fill="#ffb208" stroke="#ffb208" stroke-width="0.6"/>
<path d="M342.9 552.0L348.2 553.4L354.9 566.3L350.0 564.9Z" fill="#ffae08" stroke="#ffae08" stroke-width="0.6"/>
<path d="M348.2 553.4L354.9 555.2L361.3 568.1L354.9 566.3Z" fill="#ffaa08" stroke="#ffaa08" stroke-width="0.6"/>
<path d="M354.9 555.2L363.2 557.3L369.1 570.3L361.3 568.1Z" fill="#ffa608" stroke="#ffa608" stroke-width="0.6"/>
<path d="M363.2 557.3L372.8 559.7L378.2 572.6L369.1 570.3Z" fill="#ffa108" stroke="#ffa108" stroke-width="0.6"/>
<path d="M372.8 559.7L383.7 562.2L388.5 575.2L378.2 572.6Z" fill="#ff9c08" stroke="#ff9c08" stroke-width="0.6"/>
<path d="M383.7 562.2L395.8 564.8L399.9 577.9L388.5 575.2Z" fill="#ff9808" stroke="#ff9808" stroke-width="0.6"/>
<path d="M395.8 564.8L409.0 567.4L412.3 580.5L399.9 577.9Z" fill="#ff9408" stroke="#ff9408" stroke-width="0.6"/>
<path d="M409.0 567.4L423.0 569.8L425.5 583.0L412.3 580.5Z" fill="#ff9108" stroke="#ff9108" stroke-width="0.6"/>
<path d="M423.0 569.8L437.6 572.0L439.3 585.2L425.5 583.0Z" fill="#ff8e08" stroke="#ff8e08" stroke-width="0.6"/>
<path d="M437.6 572.0L452.7 573.7L453.6 587.0L439.3 585.2Z" fill="#ff8c08" stroke="#ff8c08" stroke-width="0.6"/>
<path d="M452.7 573.7L468.0 574.7L468.0 588.0L453.6 587.0Z" fill="#ff8c08" stroke="#ff8c08" stroke-width="0.6"/>
<path d="M468.0 574.7L483.7 573.7L482.5 587.0L468.0 588.0Z" fill="#ff8c08" stroke="#ff8c08" stroke-width="0.6"/>
<path d="M483.7 573.7L499.1 572.0L496.9 585.2L482.5 587.0Z" fill="#ff8c08" stroke="#ff8c08" stroke-width="0.6"/>
<path d="M499.1 572.0L514.0 569.8L510.8 583.0L496.9 585.2Z" fill="#ff8e08" stroke="#ff8e08" stroke-width="0.6"/>
<path d="M514.0 569.8L528.3 567.4L524.1 580.5L510.8 583.0Z" fill="#ff9108" stroke="#ff9108" stroke-width="0.6"/>
<path d="M528.3 567.4L541.8 564.8L536.5 577.9L524.1 580.5Z" fill="#ff9408" stroke="#ff9408" stroke-width="0.6"/>
<path d="M541.8 564.8L554.1 562.2L548.0 575.2L536.5 577.9Z" fill="#ff9808" stroke="#ff9808" stroke-width="0.6"/>
<path d="M554.1 562.2L565.3 559.7L558.4 572.6L548.0 575.2Z" fill="#ff9c08" stroke="#ff9c08" stroke-width="0.6"/>
<path d="M565.3 559.7L575.2 557.3L567.6 570.3L558.4 572.6Z" fill="#ffa108" stroke="#ffa108" stroke-width="0.6"/>
<path d="M575.2 557.3L583.6 555.2L575.4 568.1L567.6 570.3Z" fill="#ffa608" stroke="#ffa608" stroke-width="0.6"/>
<path d="M583.6 555.2L590.5 553.4L581.8 566.3L575.4 568.1Z" fill="#ffaa08" stroke="#ffaa08" stroke-width="0.6"/>
<path d="M590.5 553.4L595.9 552.0L586.8 564.9L581.8 566.3Z" fill="#ffae08" stroke="#ffae08" stroke-width="0.6"/>
<path d="M595.9 552.0L599.7 551.0L590.4 563.8L586.8 564.9Z" fill="#ffb208" stroke="#ffb208" stroke-width="0.6"/>
<path d="M599.7 551.0L602.0 550.4L592.5 563.2L590.4 563.8Z" fill="#ffb408" stroke="#ffb408" stroke-width="0.6"/>
<path d="M602.0 550.4L602.7 549.9L593.2 562.7L592.5 563.2Z" fill="#ffb608" stroke="#ffb608" stroke-width="0.6"/>
<path d="M343.7 562.7L344.4 563.2L350.9 574.9L350.3 574.4Z" fill="#ffa708" stroke="#ffa708" stroke-width="0.6"/>
<path d="M344.4 563.2L346.5 563.8L352.9 575.5L350.9 574.9Z" fill="#ffa508" stroke="#ffa508" stroke-width="0.6"/>
<path d="M346.5 563.8L350.0 564.9L356.2 576.6L352.9 575.5Z" fill="#ffa208" stroke="#ffa208" stroke-width="0.6"/>
<path d="M350.0 564.9L354.9 566.3L360.9 578.0L356.2 576.6Z" fill="#ff9f08" stroke="#ff9f08" stroke-width="0.6"/>
<path d="M354.9 566.3L361.3 568.1L367.0 579.8L360.9 578.0Z" fill="#ff9c08" stroke="#ff9c08" stroke-width="0.6"/>
<path d="M361.3 568.1L369.1 570.3L374.4 582.0L367.0 579.8Z" fill="#ff9808" stroke="#ff9808" stroke-width="0.6"/>
<path d="M369.1 570.3L378.2 572.6L383.0 584.3L374.4 582.0Z" fill="#ff9408" stroke="#ff9408" stroke-width="0.6"/>
<path d="M378.2 572.6L388.5 575.2L392.7 586.9L383.0 584.3Z" fill="#ff9008" stroke="#ff9008" stroke-width="0.6"/>
<path d="M388.5 575.2L399.9 577.9L403.5 589.6L392.7 586.9Z" fill="#ff8c08" stroke="#ff8c08" stroke-width="0.6"/>
<path d="M399.9 577.9L412.3 580.5L415.3 592.2L403.5 589.6Z" fill="#ff8808" stroke="#ff8808" stroke-width="0.6"/>
<path d="M412.3 580.5L425.5 583.0L427.8 594.7L415.3 592.2Z" fill="#ff8508" stroke="#ff8508" stroke-width="0.6"/>
<path d="M425.5 583.0L439.3 585.2L440.8 596.9L427.8 594.7Z" fill="#ff8308" stroke="#ff8308" stroke-width="0.6"/>
<path d="M439.3 585.2L453.6 587.0L454.3 598.7L440.8 596.9Z" fill="#ff8208" stroke="#ff8208" stroke-width="0.6"/>
<path d="M453.6 587.0L468.0 588.0L468.0 599.7L454.3 598.7Z" fill="#ff8108" stroke="#ff8108" stroke-width="0.6"/>
<path d="M468.0 588.0L482.5 587.0L481.5 598.7L468.0 599.7Z" fill="#ff8108" stroke="#ff8108" stroke-width="0.6"/>
<path d="M482.5 587.0L496.9 585.2L494.7 596.9L481.5 598.7Z" fill="#ff8208" stroke="#ff8208" stroke-width="0.6"/>
<path d="M496.9 585.2L510.8 583.0L507.6 594.7L494.7 596.9Z" fill="#ff8308" stroke="#ff8308" stroke-width="0.6"/>
<path d="M510.8 583.0L524.1 580.5L519.8 592.2L507.6 594.7Z" fill="#ff8508" stroke="#ff8508" stroke-width="0.6"/>
<path d="M524.1 580.5L536.5 577.9L531.4 589.6L519.8 592.2Z" fill="#ff8808" stroke="#ff8808" stroke-width="0.6"/>
<path d="M536.5 577.9L548.0 575.2L542.0 586.9L531.4 589.6Z" fill="#ff8c08" stroke="#ff8c08" stroke-width="0.6"/>
<path d="M548.0 575.2L558.4 572.6L551.6 584.3L542.0 586.9Z" fill="#ff9008" stroke="#ff9008" stroke-width="0.6"/>
<path d="M558.4 572.6L567.6 570.3L560.1 582.0L551.6 584.3Z" fill="#ff9408" stroke="#ff9408" stroke-width="0.6"/>
<path d="M567.6 570.3L575.4 568.1L567.3 579.8L560.1 582.0Z" fill="#ff9808" stroke="#ff9808" stroke-width="0.6"/>
<path d="M575.4 568.1L581.8 566.3L573.3 578.0L567.3 579.8Z" fill="#ff9c08" stroke="#ff9c08" stroke-width="0.6"/>
<path d="M581.8 566.3L586.8 564.9L577.9 576.6L573.3 578.0Z" fill="#ff9f08" stroke="#ff9f08" stroke-width="0.6"/>
<path d="M586.8 564.9L590.4 563.8L581.2 575.5L577.9 576.6Z" fill="#ffa208" stroke="#ffa208" stroke-width="0.6"/>
<path d="M590.4 563.8L592.5 563.2L583.1 574.9L581.2 575.5Z" fill="#ffa508" stroke="#ffa508" stroke-width="0.6"/>
<path d="M592.5 563.2L593.2 562.7L583.7 574.4L583.1 574.9Z" fill="#ffa708" stroke="#ffa708" stroke-width="0.6"/>
<path d="M350.3 574.4L350.9 574.9L358.0 584.2L357.4 583.7Z" fill="#ff9708" stroke="#ff9708" stroke-width="0.6"/>
<path d="M350.9 574.9L352.9 575.5L359.9 584.8L358.0 584.2Z" fill="#ff9508" stroke="#ff9508" stroke-width="0.6"/>
<path d="M352.9 575.5L356.2 576.6L363.0 585.9L359.9 584.8Z" fill="#ff9308" stroke="#ff9308" stroke-width="0.6"/>
<path d="M356.2 576.6L360.9 578.0L367.4 587.3L363.0 585.9Z" fill="#ff9008" stroke="#ff9008" stroke-width="0.6"/>
<path d="M360.9 578.0L367.0 579.8L373.1 589.1L367.4 587.3Z" fill="#ff8c08" stroke="#ff8c08" stroke-width="0.6"/>
<path d="M367.0 579.8L374.4 582.0L380.0 591.3L373.1 589.1Z" fill="#ff8908" stroke="#ff8908" stroke-width="0.6"/>
<path d="M374.4 582.0L383.0 584.3L388.1 593.6L380.0 591.3Z" fill="#ff8508" stroke="#ff8508" stroke-width="0.6"/>
<path d="M383.0 584.3L392.7 586.9L397.3 596.2L388.1 593.6Z" fill="#ff8108" stroke="#ff8108" stroke-width="0.6"/>
<path d="M392.7 586.9L403.5 589.6L407.5 598.9L397.3 596.2Z" fill="#ff7e08" stroke="#ff7e08" stroke-width="0.6"/>
<path d="M403.5 589.6L415.3 592.2L418.5 601.5L407.5 598.9Z" fill="#ff7a08" stroke="#ff7a08" stroke-width="0.6"/>
<path d="M415.3 592.2L427.8 594.7L430.2 604.0L418.5 601.5Z" fill="#ff7808" stroke="#ff7808" stroke-width="0.6"/>
<path d="M427.8 594.7L440.8 596.9L442.5 606.2L430.2 604.0Z" fill="#ff7608" stroke="#ff7608" stroke-width="0.6"/>
<path d="M440.8 596.9L454.3 598.7L455.1 608.0L442.5 606.2Z" fill="#ff7408" stroke="#ff7408" stroke-width="0.6"/>
<path d="M454.3 598.7L468.0 599.7L468.0 609.0L455.1 608.0Z" fill="#ff7408" stroke="#ff7408" stroke-width="0.6"/>
<path d="M468.0 599.7L481.5 598.7L480.2 608.0L468.0 609.0Z" fill="#ff7408" stroke="#ff7408" stroke-width="0.6"/>
<path d="M481.5 598.7L494.7 596.9L492.2 606.2L480.2 608.0Z" fill="#ff7408" stroke="#ff7408" stroke-width="0.6"/>
<path d="M494.7 596.9L507.6 594.7L503.9 604.0L492.2 606.2Z" fill="#ff7608" stroke="#ff7608" stroke-width="0.6"/>
<path d="M507.6 594.7L519.8 592.2L515.0 601.5L503.9 604.0Z" fill="#ff7808" stroke="#ff7808" stroke-width="0.6"/>
<path d="M519.8 592.2L531.4 589.6L525.5 598.9L515.0 601.5Z" fill="#ff7a08" stroke="#ff7a08" stroke-width="0.6"/>
<path d="M531.4 589.6L542.0 586.9L535.1 596.2L525.5 598.9Z" fill="#ff7e08" stroke="#ff7e08" stroke-width="0.6"/>
<path d="M542.0 586.9L551.6 584.3L543.8 593.6L535.1 596.2Z" fill="#ff8108" stroke="#ff8108" stroke-width="0.6"/>
<path d="M551.6 584.3L560.1 582.0L551.5 591.3L543.8 593.6Z" fill="#ff8508" stroke="#ff8508" stroke-width="0.6"/>
<path d="M560.1 582.0L567.3 579.8L558.0 589.1L551.5 591.3Z" fill="#ff8908" stroke="#ff8908" stroke-width="0.6"/>
<path d="M567.3 579.8L573.3 578.0L563.4 587.3L558.0 589.1Z" fill="#ff8c08" stroke="#ff8c08" stroke-width="0.6"/>
<path d="M573.3 578.0L577.9 576.6L567.6 585.9L563.4 587.3Z" fill="#ff9008" stroke="#ff9008" stroke-width="0.6"/>
<path d="M577.9 576.6L581.2 575.5L570.6 584.8L567.6 585.9Z" fill="#ff9308" stroke="#ff9308" stroke-width="0.6"/>
<path d="M581.2 575.5L583.1 574.9L572.4 584.2L570.6 584.8Z" fill="#ff9508" stroke="#ff9508" stroke-width="0.6"/>
<path d="M583.1 574.9L583.7 574.4L572.9 583.7L572.4 584.2Z" fill="#ff9708" stroke="#ff9708" stroke-width="0.6"/>
<path d="M357.4 583.7L358.0 584.2L368.2 594.6L367.7 594.1Z" fill="#ff8708" stroke="#ff8708" stroke-width="0.6"/>
<path d="M358.0 584.2L359.9 584.8L369.9 595.1L368.2 594.6Z" fill="#ff8508" stroke="#ff8508" stroke-width="0.6"/>
<path d="M359.9 584.8L363.0 585.9L372.8 596.1L369.9 595.1Z" fill="#ff8308" stroke="#ff8308" stroke-width="0.6"/>
<path d="M363.0 585.9L367.4 587.3L376.8 597.4L372.8 596.1Z" fill="#ff8008" stroke="#ff8008" stroke-width="0.6"/>
<path d="M367.4 587.3L373.1 589.1L381.9 599.0L376.8 597.4Z" fill="#ff7d08" stroke="#ff7d08" stroke-width="0.6"/>
<path d="M373.1 589.1L380.0 591.3L388.2 600.9L381.9 599.0Z" fill="#ff7a08" stroke="#ff7a08" stroke-width="0.6"/>
<path d="M380.0 591.3L388.1 593.6L395.5 603.1L388.2 600.9Z" fill="#ff7608" stroke="#ff7608" stroke-width="0.6"/>
<path d="M388.1 593.6L397.3 596.2L403.9 605.4L395.5 603.1Z" fill="#ff7308" stroke="#ff7308" stroke-width="0.6"/>
<path d="M397.3 596.2L407.5 598.9L413.1 607.8L403.9 605.4Z" fill="#ff6f08" stroke="#ff6f08" stroke-width="0.6"/>
<path d="M407.5 598.9L418.5 601.5L423.1 610.2L413.1 607.8Z" fill="#ff6c08" stroke="#ff6c08" stroke-width="0.6"/>
<path d="M418.5 601.5L430.2 604.0L433.7 612.4L423.1 610.2Z" fill="#ff6a08" stroke="#ff6a08" stroke-width="0.6"/>
<path d="M430.2 604.0L442.5 606.2L444.9 614.4L433.7 612.4Z" fill="#ff6808" stroke="#ff6808" stroke-width="0.6"/>
<path d="M442.5 606.2L455.1 608.0L456.3 616.0L444.9 614.4Z" fill="#ff6708" stroke="#ff6708" stroke-width="0.6"/>
<path d="M455.1 608.0L468.0 609.0L468.0 616.9L456.3 616.0Z" fill="#ff6608" stroke="#ff6608" stroke-width="0.6"/>
<path d="M468.0 609.0L480.2 608.0L478.8 616.0L468.0 616.9Z" fill="#ff6608" stroke="#ff6608" stroke-width="0.6"/>
<path d="M480.2 608.0L492.2 606.2L489.4 614.4L478.8 616.0Z" fill="#ff6708" stroke="#ff6708" stroke-width="0.6"/>
<path d="M492.2 606.2L503.9 604.0L499.7 612.4L489.4 614.4Z" fill="#ff6808" stroke="#ff6808" stroke-width="0.6"/>
<path d="M503.9 604.0L515.0 601.5L509.6 610.2L499.7 612.4Z" fill="#ff6a08" stroke="#ff6a08" stroke-width="0.6"/>
<path d="M515.0 601.5L525.5 598.9L518.9 607.8L509.6 610.2Z" fill="#ff6c08" stroke="#ff6c08" stroke-width="0.6"/>
<path d="M525.5 598.9L535.1 596.2L527.4 605.4L518.9 607.8Z" fill="#ff6f08" stroke="#ff6f08" stroke-width="0.6"/>
<path d="M535.1 596.2L543.8 593.6L535.1 603.1L527.4 605.4Z" fill="#ff7308" stroke="#ff7308" stroke-width="0.6"/>
<path d="M543.8 593.6L551.5 591.3L541.9 600.9L535.1 603.1Z" fill="#ff7608" stroke="#ff7608" stroke-width="0.6"/>
<path d="M551.5 591.3L558.0 589.1L547.7 599.0L541.9 600.9Z" fill="#ff7a08" stroke="#ff7a08" stroke-width="0.6"/>
<path d="M558.0 589.1L563.4 587.3L552.5 597.4L547.7 599.0Z" fill="#ff7d08" stroke="#ff7d08" stroke-width="0.6"/>
<path d="M563.4 587.3L567.6 585.9L556.2 596.1L552.5 597.4Z" fill="#ff8008" stroke="#ff8008" stroke-width="0.6"/>
<path d="M567.6 585.9L570.6 584.8L558.8 595.1L556.2 596.1Z" fill="#ff8308" stroke="#ff8308" stroke-width="0.6"/>
<path d="M570.6 584.8L572.4 584.2L560.4 594.5L558.8 595.1Z" fill="#ff8508" stroke="#ff8508" stroke-width="0.6"/>
<path d="M572.4 584.2L572.9 583.7L560.9 594.1L560.4 594.5Z" fill="#ff8708" stroke="#ff8708" stroke-width="0.6"/>
<path d="M367.7 594.1L368.2 594.6L377.0 603.1L376.6 602.8Z" fill="#ff7708" stroke="#ff7708" stroke-width="0.6"/>
<path d="M368.2 594.6L369.9 595.1L378.6 603.8L377.0 603.1Z" fill="#ff7508" stroke="#ff7508" stroke-width="0.6"/>
<path d="M369.9 595.1L372.8 596.1L381.2 604.6L378.6 603.8Z" fill="#ff7308" stroke="#ff7308" stroke-width="0.6"/>
<path d="M372.8 596.1L376.8 597.4L384.8 605.8L381.2 604.6Z" fill="#ff7108" stroke="#ff7108" stroke-width="0.6"/>
<path d="M376.8 597.4L381.9 599.0L389.5 607.2L384.8 605.8Z" fill="#ff6e08" stroke="#ff6e08" stroke-width="0.6"/>
<path d="M381.9 599.0L388.2 600.9L395.2 608.9L389.5 607.2Z" fill="#ff6b08" stroke="#ff6b08" stroke-width="0.6"/>
<path d="M388.2 600.9L395.5 603.1L401.9 610.8L395.2 608.9Z" fill="#ff6808" stroke="#ff6808" stroke-width="0.6"/>
<path d="M395.5 603.1L403.9 605.4L409.5 612.9L401.9 610.8Z" fill="#ff6508" stroke="#ff6508" stroke-width="0.6"/>
<path d="M403.9 605.4L413.1 607.8L417.9 615.0L409.5 612.9Z" fill="#ff6208" stroke="#ff6208" stroke-width="0.6"/>
<path d="M413.1 607.8L423.1 610.2L427.0 617.1L417.9 615.0Z" fill="#ff6008" stroke="#ff6008" stroke-width="0.6"/>
<path d="M423.1 610.2L433.7 612.4L436.7 619.1L427.0 617.1Z" fill="#ff5d08" stroke="#ff5d08" stroke-width="0.6"/>
<path d="M433.7 612.4L444.9 614.4L446.9 620.9L436.7 619.1Z" fill="#ff5c08" stroke="#ff5c08" stroke-width="0.6"/>
<path d="M444.9 614.4L456.3 616.0L457.4 622.3L446.9 620.9Z" fill="#ff5b08" stroke="#ff5b08" stroke-width="0.6"/>
<path d="M456.3 616.0L468.0 616.9L468.0 623.1L457.4 622.3Z" fill="#ff5a08" stroke="#ff5a08" stroke-width="0.6"/>
<path d="M468.0 616.9L478.8 616.0L477.2 622.3L468.0 623.1Z" fill="#ff5a08" stroke="#ff5a08" stroke-width="0.6"/>
<path d="M478.8 616.0L489.4 614.4L486.3 620.9L477.2 622.3Z" fill="#ff5b08" stroke="#ff5b08" stroke-width="0.6"/>
<path d="M489.4 614.4L499.7 612.4L495.1 619.1L486.3 620.9Z" fill="#ff5c08" stroke="#ff5c08" stroke-width="0.6"/>
<path d="M499.7 612.4L509.6 610.2L503.5 617.1L495.1 619.1Z" fill="#ff5d08" stroke="#ff5d08" stroke-width="0.6"/>
<path d="M509.6 610.2L518.9 607.8L511.4 615.0L503.5 617.1Z" fill="#ff6008" stroke="#ff6008" stroke-width="0.6"/>
<path d="M518.9 607.8L527.4 605.4L518.7 612.9L511.4 615.0Z" fill="#ff6208" stroke="#ff6208" stroke-width="0.6"/>
<path d="M527.4 605.4L535.1 603.1L525.3 610.8L518.7 612.9Z" fill="#ff6508" stroke="#ff6508" stroke-width="0.6"/>
<path d="M535.1 603.1L541.9 600.9L531.1 608.9L525.3 610.8Z" fill="#ff6808" stroke="#ff6808" stroke-width="0.6"/>
<path d="M541.9 600.9L547.7 599.0L536.0 607.2L531.1 608.9Z" fill="#ff6b08" stroke="#ff6b08" stroke-width="0.6"/>
<path d="M547.7 599.0L552.5 597.4L540.1 605.8L536.0 607.2Z" fill="#ff6e08" stroke="#ff6e08" stroke-width="0.6"/>
<path d="M552.5 597.4L556.2 596.1L543.3 604.6L540.1 605.8Z" fill="#ff7108" stroke="#ff7108" stroke-width="0.6"/>
<path d="M556.2 596.1L558.8 595.1L545.5 603.8L543.3 604.6Z" fill="#ff7308" stroke="#ff7308" stroke-width="0.6"/>
<path d="M558.8 595.1L560.4 594.5L546.9 603.1L545.5 603.8Z" fill="#ff7508" stroke="#ff7508" stroke-width="0.6"/>
<path d="M560.4 594.5L560.9 594.1L547.3 602.8L546.9 603.1Z" fill="#ff7708" stroke="#ff7708" stroke-width="0.6"/>
<path d="M376.6 602.8L377.0 603.1L400.4 615.7L400.0 615.5Z" fill="#ff6708" stroke="#ff6708" stroke-width="0.6"/>
<path d="M377.0 603.1L378.6 603.8L401.5 616.2L400.4 615.7Z" fill="#ff6608" stroke="#ff6608" stroke-width="0.6"/>
<path d="M378.6 603.8L381.2 604.6L403.4 616.7L401.5 616.2Z" fill="#ff6408" stroke="#ff6408" stroke-width="0.6"/>
<path d="M381.2 604.6L384.8 605.8L406.2 617.4L403.4 616.7Z" fill="#ff6208" stroke="#ff6208" stroke-width="0.6"/>
<path d="M384.8 605.8L389.5 607.2L409.7 618.3L406.2 617.4Z" fill="#ff6008" stroke="#ff6008" stroke-width="0.6"/>
<path d="M389.5 607.2L395.2 608.9L413.9 619.3L409.7 618.3Z" fill="#ff5d08" stroke="#ff5d08" stroke-width="0.6"/>
<path d="M395.2 608.9L401.9 610.8L418.9 620.4L413.9 619.3Z" fill="#ff5b08" stroke="#ff5b08" stroke-width="0.6"/>
<path d="M401.9 610.8L409.5 612.9L424.5 621.7L418.9 620.4Z" fill="#ff5808" stroke="#ff5808" stroke-width="0.6"/>
<path d="M409.5 612.9L417.9 615.0L430.8 622.9L424.5 621.7Z" fill="#ff5608" stroke="#ff5608" stroke-width="0.6"/>
<path d="M417.9 615.0L427.0 617.1L437.5 624.2L430.8 622.9Z" fill="#ff5408" stroke="#ff5408" stroke-width="0.6"/>
<path d="M427.0 617.1L436.7 619.1L444.8 625.4L437.5 624.2Z" fill="#ff5208" stroke="#ff5208" stroke-width="0.6"/>
<path d="M436.7 619.1L446.9 620.9L452.3 626.5L444.8 625.4Z" fill="#ff5108" stroke="#ff5108" stroke-width="0.6"/>
<path d="M446.9 620.9L457.4 622.3L460.1 627.3L452.3 626.5Z" fill="#ff5008" stroke="#ff5008" stroke-width="0.6"/>
<path d="M457.4 622.3L468.0 623.1L468.0 627.8L460.1 627.3Z" fill="#ff5008" stroke="#ff5008" stroke-width="0.6"/>
<path d="M468.0 623.1L477.2 622.3L475.0 627.3L468.0 627.8Z" fill="#ff5008" stroke="#ff5008" stroke-width="0.6"/>
<path d="M477.2 622.3L486.3 620.9L481.8 626.5L475.0 627.3Z" fill="#ff5008" stroke="#ff5008" stroke-width="0.6"/>
<path d="M486.3 620.9L495.1 619.1L488.5 625.4L481.8 626.5Z" fill="#ff5108" stroke="#ff5108" stroke-width="0.6"/>
<path d="M495.1 619.1L503.5 617.1L494.9 624.2L488.5 625.4Z" fill="#ff5208" stroke="#ff5208" stroke-width="0.6"/>
<path d="M503.5 617.1L511.4 615.0L500.9 622.9L494.9 624.2Z" fill="#ff5408" stroke="#ff5408" stroke-width="0.6"/>
<path d="M511.4 615.0L518.7 612.9L506.4 621.7L500.9 622.9Z" fill="#ff5608" stroke="#ff5608" stroke-width="0.6"/>
<path d="M518.7 612.9L525.3 610.8L511.3 620.4L506.4 621.7Z" fill="#ff5808" stroke="#ff5808" stroke-width="0.6"/>
<path d="M525.3 610.8L531.1 608.9L515.7 619.3L511.3 620.4Z" fill="#ff5b08" stroke="#ff5b08" stroke-width="0.6"/>
<path d="M531.1 608.9L536.0 607.2L519.5 618.0L515.7 619.3Z" fill="#ff5d08" stroke="#ff5d08" stroke-width="0.6"/>
<path d="M536.0 607.2L540.1 605.8L522.6 616.9L519.5 618.0Z" fill="#ff6008" stroke="#ff6008" stroke-width="0.6"/>
<path d="M540.1 605.8L543.3 604.6L525.0 616.1L522.6 616.9Z" fill="#ff6208" stroke="#ff6208" stroke-width="0.6"/>
<path d="M543.3 604.6L545.5 603.8L526.7 615.3L525.0 616.1Z" fill="#ff6408" stroke="#ff6408" stroke-width="0.6"/>
<path d="M545.5 603.8L546.9 603.1L527.7 614.7L526.7 615.3Z" fill="#ff6608" stroke="#ff6608" stroke-width="0.6"/>
<path d="M546.9 603.1L547.3 602.8L528.0 614.5L527.7 614.7Z" fill="#ff6708" stroke="#ff6708" stroke-width="0.6"/>
<path d="M400.0 615.5L400.4 615.7L418.3 622.9L418.0 622.8Z" fill="#ff5708" stroke="#ff5708" stroke-width="0.6"/>
<path d="M400.4 615.7L401.5 616.2L419.1 623.1L418.3 622.9Z" fill="#ff5608" stroke="#ff5608" stroke-width="0.6"/>
<path d="M401.5 616.2L403.4 616.7L420.5 623.5L419.1 623.1Z" fill="#ff5508" stroke="#ff5508" stroke-width="0.6"/>
<path d="M403.4 616.7L406.2 617.4L422.5 624.0L420.5 623.5Z" fill="#ff5308" stroke="#ff5308" stroke-width="0.6"/>
<path d="M406.2 617.4L409.7 618.3L425.1 624.6L422.5 624.0Z" fill="#ff5208" stroke="#ff5208" stroke-width="0.6"/>
<path d="M409.7 618.3L413.9 619.3L428.2 625.4L425.1 624.6Z" fill="#ff5008" stroke="#ff5008" stroke-width="0.6"/>
<path d="M413.9 619.3L418.9 620.4L431.9 626.3L428.2 625.4Z" fill="#ff4e08" stroke="#ff4e08" stroke-width="0.6"/>
<path d="M418.9 620.4L424.5 621.7L436.0 627.4L431.9 626.3Z" fill="#ff4c08" stroke="#ff4c08" stroke-width="0.6"/>
<path d="M424.5 621.7L430.8 622.9L440.6 628.5L436.0 627.4Z" fill="#ff4a08" stroke="#ff4a08" stroke-width="0.6"/>
<path d="M430.8 622.9L437.5 624.2L445.6 629.3L440.6 628.5Z" fill="#ff4808" stroke="#ff4808" stroke-width="0.6"/>
<path d="M437.5 624.2L444.8 625.4L450.9 629.7L445.6 629.3Z" fill="#ff4708" stroke="#ff4708" stroke-width="0.6"/>
<path d="M444.8 625.4L452.3 626.5L456.5 630.0L450.9 629.7Z" fill="#ff4608" stroke="#ff4608" stroke-width="0.6"/>
<path d="M452.3 626.5L460.1 627.3L462.2 630.2L456.5 630.0Z" fill="#ff4508" stroke="#ff4508" stroke-width="0.6"/>
<path d="M460.1 627.3L468.0 627.8L468.0 630.2L462.2 630.2Z" fill="#ff4508" stroke="#ff4508" stroke-width="0.6"/>
<path d="M468.0 627.8L475.0 627.3L473.8 630.1L468.0 630.2Z" fill="#ff4508" stroke="#ff4508" stroke-width="0.6"/>
<path d="M475.0 627.3L481.8 626.5L479.5 629.3L473.8 630.1Z" fill="#ff4508" stroke="#ff4508" stroke-width="0.6"/>
<path d="M481.8 626.5L488.5 625.4L485.1 628.5L479.5 629.3Z" fill="#ff4608" stroke="#ff4608" stroke-width="0.6"/>
<path d="M488.5 625.4L494.9 624.2L490.4 627.7L485.1 628.5Z" fill="#ff4708" stroke="#ff4708" stroke-width="0.6"/>
<path d="M494.9 624.2L500.9 622.9L495.4 626.4L490.4 627.7Z" fill="#ff4808" stroke="#ff4808" stroke-width="0.6"/>
<path d="M500.9 622.9L506.4 621.7L500.0 624.8L495.4 626.4Z" fill="#ff4a08" stroke="#ff4a08" stroke-width="0.6"/>
<path d="M506.4 621.7L511.3 620.4L504.1 623.4L500.0 624.8Z" fill="#ff4c08" stroke="#ff4c08" stroke-width="0.6"/>
<path d="M511.3 620.4L515.7 619.3L507.8 622.1L504.1 623.4Z" fill="#ff4e08" stroke="#ff4e08" stroke-width="0.6"/>
<path d="M515.7 619.3L519.5 618.0L510.9 621.0L507.8 622.1Z" fill="#ff5008" stroke="#ff5008" stroke-width="0.6"/>
<path d="M519.5 618.0L522.6 616.9L513.5 620.1L510.9 621.0Z" fill="#ff5208" stroke="#ff5208" stroke-width="0.6"/>
<path d="M522.6 616.9L525.0 616.1L515.5 619.4L513.5 620.1Z" fill="#ff5308" stroke="#ff5308" stroke-width="0.6"/>
<path d="M525.0 616.1L526.7 615.3L516.9 618.9L515.5 619.4Z" fill="#ff5508" stroke="#ff5508" stroke-width="0.6"/>
<path d="M526.7 615.3L527.7 614.7L517.7 618.6L516.9 618.9Z" fill="#ff5608" stroke="#ff5608" stroke-width="0.6"/>
<path d="M527.7 614.7L528.0 614.5L518.0 618.5L517.7 618.6Z" fill="#ff5708" stroke="#ff5708" stroke-width="0.6"/>
<path d="M413.0 205.5L413.3 205.4L414.2 205.1L415.8 204.6L418.0 203.9L420.8 203.0L424.2 201.9L428.3 200.6L432.8 199.5L437.9 198.5L443.4 197.6L449.2 196.7L455.3 195.9L461.6 195.3L468.0 194.9L474.4 195.3L480.7 195.9L486.8 196.7L492.6 197.6L498.1 198.5L503.2 199.5L507.7 200.4L511.8 201.3L515.2 202.2L518.0 203.2L520.2 203.9L521.8 204.4L522.7 204.7L523.0 204.8M399.0 211.4L399.3 211.2L400.5 210.8L402.4 210.4L405.2 209.8L408.8 209.0L413.1 208.2L418.1 207.2L423.8 206.2L430.2 205.2L437.1 204.1L444.4 203.1L452.1 202.2L460.0 201.5L468.0 201.1L476.4 201.5L484.6 202.2L492.6 203.1L500.2 204.1L507.4 205.2L514.0 206.2L520.0 207.2L525.2 208.2L529.7 209.0L533.4 209.8L536.3 210.4L538.3 210.8L539.5 211.2L539.9 211.4M377.9 221.1L378.4 220.7L379.9 220.4L382.4 219.9L386.0 219.2L390.7 218.3L396.3 217.3L402.9 216.1L410.4 214.9L418.6 213.6L427.6 212.3L437.2 211.1L447.2 210.1L457.5 209.2L468.0 208.8L478.7 209.2L489.2 210.1L499.5 211.1L509.2 212.3L518.4 213.6L526.9 214.9L534.5 216.1L541.2 217.3L547.0 218.3L551.7 219.2L555.4 219.9L558.0 220.4L559.5 220.8L560.0 221.0M361.9 231.6L362.5 231.2L364.3 230.8L367.3 230.3L371.5 229.4L377.0 228.4L383.6 227.2L391.4 225.9L400.2 224.5L409.9 223.0L420.5 221.5L431.7 220.1L443.5 218.9L455.7 217.9L468.0 217.3L480.7 217.9L493.2 218.9L505.4 220.1L517.0 221.5L527.9 223.0L538.0 224.5L547.0 225.9L555.0 227.2L561.9 228.4L567.5 229.4L571.9 230.3L575.0 230.8L576.8 231.2L577.4 231.6M344.1 244.0L344.8 243.6L346.8 243.2L350.4 242.5L355.3 241.6L361.7 240.4L369.4 239.1L378.5 237.5L388.8 235.9L400.1 234.2L412.5 232.5L425.6 230.9L439.4 229.5L453.6 228.3L468.0 227.7L482.6 228.3L497.0 229.5L511.0 230.9L524.4 232.5L536.9 234.2L548.4 235.9L558.9 237.5L568.1 239.1L575.9 240.4L582.4 241.6L587.4 242.5L591.0 243.2L593.1 243.6L593.8 244.0M328.3 258.0L329.0 257.6L331.4 257.1L335.3 256.4L340.9 255.4L348.1 254.1L356.8 252.6L367.1 250.9L378.7 249.1L391.5 247.3L405.4 245.4L420.2 243.7L435.8 242.1L451.8 240.9L468.0 240.2L484.4 240.9L500.6 242.1L516.2 243.7L531.2 245.4L545.3 247.3L558.2 249.1L569.9 250.9L580.3 252.6L589.1 254.1L596.3 255.4L602.0 256.4L606.0 257.1L608.3 257.6L609.1 258.0M314.0 274.9L314.8 274.4L317.4 274.0L321.8 273.2L327.9 272.1L335.8 270.7L345.5 269.1L356.7 267.3L369.5 265.3L383.7 263.3L399.0 261.3L415.3 259.4L432.5 257.7L450.1 256.4L468.0 255.6L485.8 256.4L503.3 257.7L520.3 259.4L536.5 261.3L551.7 263.3L565.8 265.3L578.4 267.3L589.6 269.1L599.2 270.7L607.0 272.1L613.1 273.2L617.5 274.0L620.0 274.4L620.9 274.9M303.1 290.7L304.0 290.2L306.7 289.8L311.4 289.0L318.0 287.9L326.5 286.5L336.8 284.9L348.9 283.1L362.5 281.1L377.7 279.1L394.1 277.1L411.6 275.2L429.9 273.5L448.8 272.2L468.0 271.4L486.8 272.2L505.3 273.5L523.3 275.2L540.5 277.1L556.6 279.1L571.5 281.1L584.9 283.1L596.7 284.9L606.9 286.5L615.2 287.9L621.6 289.0L626.2 289.8L628.9 290.2L629.8 290.7M294.3 308.6L295.2 308.1L298.1 307.7L303.1 306.9L310.0 305.8L318.9 304.4L329.8 302.8L342.5 301.0L356.9 299.0L372.9 297.0L390.2 295.0L408.6 293.1L427.9 291.4L447.8 290.1L468.0 289.3L487.6 290.1L506.8 291.4L525.5 293.1L543.4 295.0L560.2 297.0L575.6 299.0L589.6 301.0L601.9 302.8L612.4 304.4L621.1 305.8L627.8 306.9L632.6 307.7L635.4 308.1L636.3 308.6M290.7 324.7L291.6 324.3L294.6 323.8L299.6 323.1L306.7 322.1L315.8 320.9L326.9 319.5L339.9 317.8L354.6 316.1L370.9 314.3L388.6 312.5L407.4 310.8L427.1 309.3L447.4 308.1L468.0 307.4L488.1 308.1L507.8 309.3L527.0 310.8L545.4 312.5L562.6 314.3L578.4 316.1L592.7 317.8L605.4 319.5L616.2 320.9L625.0 322.1L631.9 323.1L636.8 323.8L639.7 324.3L640.7 324.7M287.7 342.6L288.7 342.2L291.7 341.8L296.8 341.2L304.0 340.3L313.3 339.2L324.6 337.9L337.8 336.5L352.7 335.0L369.3 333.4L387.2 331.8L406.4 330.3L426.4 329.0L447.0 327.9L468.0 327.3L488.5 327.9L508.6 329.0L528.2 330.3L546.8 331.8L564.4 333.4L580.5 335.0L595.1 336.5L608.0 337.9L619.0 339.2L628.1 340.3L635.1 341.2L640.1 341.8L643.0 342.2L644.0 342.6M285.6 359.8L286.6 359.7L289.6 359.4L294.8 358.9L302.1 358.3L311.5 357.4L322.9 356.5L336.2 355.4L351.4 354.2L368.1 353.0L386.3 351.7L405.6 350.6L425.9 349.6L446.8 348.8L468.0 348.3L488.7 348.8L509.0 349.6L528.8 350.6L547.7 351.7L565.4 353.0L581.7 354.2L596.5 355.4L609.5 356.5L620.6 357.4L629.8 358.3L636.9 358.9L641.9 359.4L644.9 359.7L645.9 360.1M284.9 378.5L285.9 378.4L289.0 378.2L294.2 377.9L301.5 377.4L310.9 376.9L322.4 376.2L335.7 375.4L350.9 374.6L367.7 373.7L386.0 372.9L405.4 372.1L425.8 371.4L446.7 370.8L468.0 370.5L488.9 370.8L509.4 371.4L529.4 372.1L548.4 372.9L566.3 373.7L582.8 374.6L597.7 375.4L610.8 376.2L622.0 376.9L631.3 377.4L638.4 377.9L643.5 378.2L646.5 378.4L647.5 378.5M284.9 395.9L285.9 395.9L289.0 395.8L294.2 395.6L301.5 395.4L310.9 395.1L322.4 394.7L335.8 394.4L350.9 393.9L367.8 393.5L386.0 393.1L405.4 392.7L425.8 392.3L446.7 392.1L468.0 391.9L488.9 392.1L509.4 392.3L529.4 392.7L548.4 393.1L566.3 393.5L582.8 393.9L597.7 394.4L610.8 394.7L622.0 395.1L631.3 395.4L638.4 395.6L643.5 395.8L646.5 395.9L647.5 395.9M285.6 412.8L286.6 412.8L289.7 412.8L294.9 412.8L302.1 412.8L311.5 412.8L322.9 412.8L336.3 412.8L351.4 412.8L368.1 412.8L386.3 412.8L405.7 412.8L425.9 412.8L446.8 412.8L468.0 412.8L488.9 412.8L509.4 412.8L529.4 412.8L548.4 412.8L566.3 412.8L582.8 412.8L597.7 412.8L610.8 412.8L622.0 412.8L631.3 412.8L638.4 412.8L643.5 412.8L646.5 412.8L647.5 412.8M288.3 431.0L289.2 431.0L292.2 431.1L297.3 431.3L304.5 431.6L313.8 431.9L325.0 432.3L338.1 432.7L353.1 433.2L369.6 433.7L387.5 434.2L406.6 434.6L426.5 435.0L447.1 435.3L468.0 435.5L488.6 435.3L509.0 435.0L528.7 434.6L547.6 434.2L565.3 433.7L581.6 433.2L596.3 432.7L609.3 432.3L620.4 431.9L629.6 431.6L636.7 431.3L641.7 431.1L644.7 431.0L645.7 431.0M291.1 446.9L292.0 447.3L295.0 447.5L300.0 447.9L307.1 448.4L316.2 449.0L327.2 449.8L340.2 450.7L354.8 451.6L371.1 452.6L388.7 453.5L407.5 454.4L427.2 455.2L447.4 455.8L468.0 456.2L488.5 455.8L508.6 455.2L528.2 454.4L546.8 453.5L564.4 452.6L580.5 451.6L595.1 450.7L608.0 449.8L619.0 449.0L628.0 448.4L635.1 447.9L640.1 447.5L643.0 447.3L644.0 447.2M295.7 462.8L296.6 463.2L299.5 463.5L304.4 464.0L311.3 464.8L320.1 465.7L330.9 466.7L343.5 467.9L357.8 469.2L373.6 470.5L390.8 471.9L409.1 473.1L428.2 474.2L448.0 475.1L468.0 475.6L488.3 475.1L508.2 474.2L527.6 473.1L546.1 471.9L563.5 470.5L579.5 469.2L594.0 467.9L606.7 466.7L617.6 465.7L626.6 464.8L633.5 464.0L638.5 463.5L641.4 463.2L642.4 463.1M299.8 478.2L300.8 478.6L303.6 479.0L308.4 479.7L315.1 480.6L323.7 481.8L334.2 483.1L346.5 484.7L360.5 486.3L375.9 488.0L392.7 489.7L410.5 491.3L429.2 492.7L448.5 493.9L468.0 494.5L487.8 493.9L507.4 492.7L526.4 491.3L544.5 489.7L561.5 488.0L577.2 486.3L591.3 484.7L603.8 483.1L614.5 481.8L623.2 480.6L630.1 479.7L634.9 479.0L637.8 478.6L638.7 478.2M303.7 492.6L304.6 493.0L307.3 493.5L312.0 494.3L318.6 495.4L327.0 496.7L337.3 498.3L349.3 500.0L362.9 501.9L378.0 503.9L394.4 505.9L411.8 507.7L430.1 509.3L448.9 510.7L468.0 511.4L487.3 510.7L506.4 509.3L524.9 507.7L542.6 505.9L559.2 503.9L574.5 501.9L588.3 500.0L600.4 498.3L610.8 496.7L619.4 495.4L626.1 494.3L630.8 493.5L633.6 493.0L634.5 492.6M310.5 506.1L311.3 506.6L314.0 507.1L318.5 508.0L324.7 509.2L332.8 510.7L342.7 512.5L354.2 514.5L367.3 516.7L381.7 518.9L397.4 521.1L414.2 523.2L431.7 525.1L449.7 526.6L468.0 527.4L486.7 526.6L505.0 525.1L522.9 523.2L539.9 521.1L555.9 518.9L570.6 516.7L584.0 514.5L595.7 512.5L605.7 510.7L614.0 509.2L620.4 508.0L625.0 507.1L627.6 506.6L628.5 506.1M319.2 521.4L320.0 521.9L322.5 522.4L326.7 523.4L332.6 524.7L340.3 526.3L349.6 528.2L360.5 530.4L372.8 532.7L386.5 535.1L401.3 537.5L417.1 539.7L433.7 541.7L450.7 543.3L468.0 544.2L485.7 543.3L503.2 541.7L520.1 539.7L536.3 537.5L551.4 535.1L565.4 532.7L578.1 530.4L589.2 528.2L598.8 526.3L606.6 524.7L612.7 523.4L617.0 522.4L619.6 521.9L620.4 521.4M327.9 536.0L328.7 536.5L331.0 537.1L335.0 538.1L340.6 539.5L347.8 541.2L356.5 543.3L366.8 545.6L378.4 548.0L391.3 550.6L405.2 553.1L420.1 555.5L435.7 557.6L451.7 559.3L468.0 560.3L484.7 559.3L501.1 557.6L517.1 555.5L532.3 553.1L546.6 550.6L559.8 548.0L571.7 545.6L582.2 543.3L591.2 541.2L598.6 539.5L604.3 538.1L608.4 537.1L610.8 536.5L611.6 536.0M336.2 549.9L336.9 550.4L339.2 551.0L342.9 552.0L348.2 553.4L354.9 555.2L363.2 557.3L372.8 559.7L383.7 562.2L395.8 564.8L409.0 567.4L423.0 569.8L437.6 572.0L452.7 573.7L468.0 574.7L483.7 573.7L499.1 572.0L514.0 569.8L528.3 567.4L541.8 564.8L554.1 562.2L565.3 559.7L575.2 557.3L583.6 555.2L590.5 553.4L595.9 552.0L599.7 551.0L602.0 550.4L602.7 549.9M343.7 562.7L344.4 563.2L346.5 563.8L350.0 564.9L354.9 566.3L361.3 568.1L369.1 570.3L378.2 572.6L388.5 575.2L399.9 577.9L412.3 580.5L425.5 583.0L439.3 585.2L453.6 587.0L468.0 588.0L482.5 587.0L496.9 585.2L510.8 583.0L524.1 580.5L536.5 577.9L548.0 575.2L558.4 572.6L567.6 570.3L575.4 568.1L581.8 566.3L586.8 564.9L590.4 563.8L592.5 563.2L593.2 562.7M350.3 574.4L350.9 574.9L352.9 575.5L356.2 576.6L360.9 578.0L367.0 579.8L374.4 582.0L383.0 584.3L392.7 586.9L403.5 589.6L415.3 592.2L427.8 594.7L440.8 596.9L454.3 598.7L468.0 599.7L481.5 598.7L494.7 596.9L507.6 594.7L519.8 592.2L531.4 589.6L542.0 586.9L551.6 584.3L560.1 582.0L567.3 579.8L573.3 578.0L577.9 576.6L581.2 575.5L583.1 574.9L583.7 574.4M357.4 583.7L358.0 584.2L359.9 584.8L363.0 585.9L367.4 587.3L373.1 589.1L380.0 591.3L388.1 593.6L397.3 596.2L407.5 598.9L418.5 601.5L430.2 604.0L442.5 606.2L455.1 608.0L468.0 609.0L480.2 608.0L492.2 606.2L503.9 604.0L515.0 601.5L525.5 598.9L535.1 596.2L543.8 593.6L551.5 591.3L558.0 589.1L563.4 587.3L567.6 585.9L570.6 584.8L572.4 584.2L572.9 583.7M367.7 594.1L368.2 594.6L369.9 595.1L372.8 596.1L376.8 597.4L381.9 599.0L388.2 600.9L395.5 603.1L403.9 605.4L413.1 607.8L423.1 610.2L433.7 612.4L444.9 614.4L456.3 616.0L468.0 616.9L478.8 616.0L489.4 614.4L499.7 612.4L509.6 610.2L518.9 607.8L527.4 605.4L535.1 603.1L541.9 600.9L547.7 599.0L552.5 597.4L556.2 596.1L558.8 595.1L560.4 594.5L560.9 594.1M376.6 602.8L377.0 603.1L378.6 603.8L381.2 604.6L384.8 605.8L389.5 607.2L395.2 608.9L401.9 610.8L409.5 612.9L417.9 615.0L427.0 617.1L436.7 619.1L446.9 620.9L457.4 622.3L468.0 623.1L477.2 622.3L486.3 620.9L495.1 619.1L503.5 617.1L511.4 615.0L518.7 612.9L525.3 610.8L531.1 608.9L536.0 607.2L540.1 605.8L543.3 604.6L545.5 603.8L546.9 603.1L547.3 602.8M400.0 615.5L400.4 615.7L401.5 616.2L403.4 616.7L406.2 617.4L409.7 618.3L413.9 619.3L418.9 620.4L424.5 621.7L430.8 622.9L437.5 624.2L444.8 625.4L452.3 626.5L460.1 627.3L468.0 627.8L475.0 627.3L481.8 626.5L488.5 625.4L494.9 624.2L500.9 622.9L506.4 621.7L511.3 620.4L515.7 619.3L519.5 618.0L522.6 616.9L525.0 616.1L526.7 615.3L527.7 614.7L528.0 614.5M418.0 622.8L418.3 622.9L419.1 623.1L420.5 623.5L422.5 624.0L425.1 624.6L428.2 625.4L431.9 626.3L436.0 627.4L440.6 628.5L445.6 629.3L450.9 629.7L456.5 630.0L462.2 630.2L468.0 630.2L473.8 630.1L479.5 629.3L485.1 628.5L490.4 627.7L495.4 626.4L500.0 624.8L504.1 623.4L507.8 622.1L510.9 621.0L513.5 620.1L515.5 619.4L516.9 618.9L517.7 618.6L518.0 618.5M413.0 205.5L399.0 211.4L377.9 221.1L361.9 231.6L344.1 244.0L328.3 258.0L314.0 274.9L303.1 290.7L294.3 308.6L290.7 324.7L287.7 342.6L285.6 359.8L284.9 378.5L284.9 395.9L285.6 412.8L288.3 431.0L291.1 446.9L295.7 462.8L299.8 478.2L303.7 492.6L310.5 506.1L319.2 521.4L327.9 536.0L336.2 549.9L343.7 562.7L350.3 574.4L357.4 583.7L367.7 594.1L376.6 602.8L400.0 615.5L418.0 622.8M413.3 205.4L399.3 211.2L378.4 220.7L362.5 231.2L344.8 243.6L329.0 257.6L314.8 274.4L304.0 290.2L295.2 308.1L291.6 324.3L288.7 342.2L286.6 359.7L285.9 378.4L285.9 395.9L286.6 412.8L289.2 431.0L292.0 447.3L296.6 463.2L300.8 478.6L304.6 493.0L311.3 506.6L320.0 521.9L328.7 536.5L336.9 550.4L344.4 563.2L350.9 574.9L358.0 584.2L368.2 594.6L377.0 603.1L400.4 615.7L418.3 622.9M414.2 205.1L400.5 210.8L379.9 220.4L364.3 230.8L346.8 243.2L331.4 257.1L317.4 274.0L306.7 289.8L298.1 307.7L294.6 323.8L291.7 341.8L289.6 359.4L289.0 378.2L289.0 395.8L289.7 412.8L292.2 431.1L295.0 447.5L299.5 463.5L303.6 479.0L307.3 493.5L314.0 507.1L322.5 522.4L331.0 537.1L339.2 551.0L346.5 563.8L352.9 575.5L359.9 584.8L369.9 595.1L378.6 603.8L401.5 616.2L419.1 623.1M415.8 204.6L402.4 210.4L382.4 219.9L367.3 230.3L350.4 242.5L335.3 256.4L321.8 273.2L311.4 289.0L303.1 306.9L299.6 323.1L296.8 341.2L294.8 358.9L294.2 377.9L294.2 395.6L294.9 412.8L297.3 431.3L300.0 447.9L304.4 464.0L308.4 479.7L312.0 494.3L318.5 508.0L326.7 523.4L335.0 538.1L342.9 552.0L350.0 564.9L356.2 576.6L363.0 585.9L372.8 596.1L381.2 604.6L403.4 616.7L420.5 623.5M418.0 203.9L405.2 209.8L386.0 219.2L371.5 229.4L355.3 241.6L340.9 255.4L327.9 272.1L318.0 287.9L310.0 305.8L306.7 322.1L304.0 340.3L302.1 358.3L301.5 377.4L301.5 395.4L302.1 412.8L304.5 431.6L307.1 448.4L311.3 464.8L315.1 480.6L318.6 495.4L324.7 509.2L332.6 524.7L340.6 539.5L348.2 553.4L354.9 566.3L360.9 578.0L367.4 587.3L376.8 597.4L384.8 605.8L406.2 617.4L422.5 624.0M420.8 203.0L408.8 209.0L390.7 218.3L377.0 228.4L361.7 240.4L348.1 254.1L335.8 270.7L326.5 286.5L318.9 304.4L315.8 320.9L313.3 339.2L311.5 357.4L310.9 376.9L310.9 395.1L311.5 412.8L313.8 431.9L316.2 449.0L320.1 465.7L323.7 481.8L327.0 496.7L332.8 510.7L340.3 526.3L347.8 541.2L354.9 555.2L361.3 568.1L367.0 579.8L373.1 589.1L381.9 599.0L389.5 607.2L409.7 618.3L425.1 624.6M424.2 201.9L413.1 208.2L396.3 217.3L383.6 227.2L369.4 239.1L356.8 252.6L345.5 269.1L336.8 284.9L329.8 302.8L326.9 319.5L324.6 337.9L322.9 356.5L322.4 376.2L322.4 394.7L322.9 412.8L325.0 432.3L327.2 449.8L330.9 466.7L334.2 483.1L337.3 498.3L342.7 512.5L349.6 528.2L356.5 543.3L363.2 557.3L369.1 570.3L374.4 582.0L380.0 591.3L388.2 600.9L395.2 608.9L413.9 619.3L428.2 625.4M428.3 200.6L418.1 207.2L402.9 216.1L391.4 225.9L378.5 237.5L367.1 250.9L356.7 267.3L348.9 283.1L342.5 301.0L339.9 317.8L337.8 336.5L336.2 355.4L335.7 375.4L335.8 394.4L336.3 412.8L338.1 432.7L340.2 450.7L343.5 467.9L346.5 484.7L349.3 500.0L354.2 514.5L360.5 530.4L366.8 545.6L372.8 559.7L378.2 572.6L383.0 584.3L388.1 593.6L395.5 603.1L401.9 610.8L418.9 620.4L431.9 626.3M432.8 199.5L423.8 206.2L410.4 214.9L400.2 224.5L388.8 235.9L378.7 249.1L369.5 265.3L362.5 281.1L356.9 299.0L354.6 316.1L352.7 335.0L351.4 354.2L350.9 374.6L350.9 393.9L351.4 412.8L353.1 433.2L354.8 451.6L357.8 469.2L360.5 486.3L362.9 501.9L367.3 516.7L372.8 532.7L378.4 548.0L383.7 562.2L388.5 575.2L392.7 586.9L397.3 596.2L403.9 605.4L409.5 612.9L424.5 621.7L436.0 627.4M437.9 198.5L430.2 205.2L418.6 213.6L409.9 223.0L400.1 234.2L391.5 247.3L383.7 263.3L377.7 279.1L372.9 297.0L370.9 314.3L369.3 333.4L368.1 353.0L367.7 373.7L367.8 393.5L368.1 412.8L369.6 433.7L371.1 452.6L373.6 470.5L375.9 488.0L378.0 503.9L381.7 518.9L386.5 535.1L391.3 550.6L395.8 564.8L399.9 577.9L403.5 589.6L407.5 598.9L413.1 607.8L417.9 615.0L430.8 622.9L440.6 628.5M443.4 197.6L437.1 204.1L427.6 212.3L420.5 221.5L412.5 232.5L405.4 245.4L399.0 261.3L394.1 277.1L390.2 295.0L388.6 312.5L387.2 331.8L386.3 351.7L386.0 372.9L386.0 393.1L386.3 412.8L387.5 434.2L388.7 453.5L390.8 471.9L392.7 489.7L394.4 505.9L397.4 521.1L401.3 537.5L405.2 553.1L409.0 567.4L412.3 580.5L415.3 592.2L418.5 601.5L423.1 610.2L427.0 617.1L437.5 624.2L445.6 629.3M449.2 196.7L444.4 203.1L437.2 211.1L431.7 220.1L425.6 230.9L420.2 243.7L415.3 259.4L411.6 275.2L408.6 293.1L407.4 310.8L406.4 330.3L405.6 350.6L405.4 372.1L405.4 392.7L405.7 412.8L406.6 434.6L407.5 454.4L409.1 473.1L410.5 491.3L411.8 507.7L414.2 523.2L417.1 539.7L420.1 555.5L423.0 569.8L425.5 583.0L427.8 594.7L430.2 604.0L433.7 612.4L436.7 619.1L444.8 625.4L450.9 629.7M455.3 195.9L452.1 202.2L447.2 210.1L443.5 218.9L439.4 229.5L435.8 242.1L432.5 257.7L429.9 273.5L427.9 291.4L427.1 309.3L426.4 329.0L425.9 349.6L425.8 371.4L425.8 392.3L425.9 412.8L426.5 435.0L427.2 455.2L428.2 474.2L429.2 492.7L430.1 509.3L431.7 525.1L433.7 541.7L435.7 557.6L437.6 572.0L439.3 585.2L440.8 596.9L442.5 606.2L444.9 614.4L446.9 620.9L452.3 626.5L456.5 630.0M461.6 195.3L460.0 201.5L457.5 209.2L455.7 217.9L453.6 228.3L451.8 240.9L450.1 256.4L448.8 272.2L447.8 290.1L447.4 308.1L447.0 327.9L446.8 348.8L446.7 370.8L446.7 392.1L446.8 412.8L447.1 435.3L447.4 455.8L448.0 475.1L448.5 493.9L448.9 510.7L449.7 526.6L450.7 543.3L451.7 559.3L452.7 573.7L453.6 587.0L454.3 598.7L455.1 608.0L456.3 616.0L457.4 622.3L460.1 627.3L462.2 630.2M468.0 194.9L468.0 201.1L468.0 208.8L468.0 217.3L468.0 227.7L468.0 240.2L468.0 255.6L468.0 271.4L468.0 289.3L468.0 307.4L468.0 327.3L468.0 348.3L468.0 370.5L468.0 391.9L468.0 412.8L468.0 435.5L468.0 456.2L468.0 475.6L468.0 494.5L468.0 511.4L468.0 527.4L468.0 544.2L468.0 560.3L468.0 574.7L468.0 588.0L468.0 599.7L468.0 609.0L468.0 616.9L468.0 623.1L468.0 627.8L468.0 630.2M474.4 195.3L476.4 201.5L478.7 209.2L480.7 217.9L482.6 228.3L484.4 240.9L485.8 256.4L486.8 272.2L487.6 290.1L488.1 308.1L488.5 327.9L488.7 348.8L488.9 370.8L488.9 392.1L488.9 412.8L488.6 435.3L488.5 455.8L488.3 475.1L487.8 493.9L487.3 510.7L486.7 526.6L485.7 543.3L484.7 559.3L483.7 573.7L482.5 587.0L481.5 598.7L480.2 608.0L478.8 616.0L477.2 622.3L475.0 627.3L473.8 630.1M480.7 195.9L484.6 202.2L489.2 210.1L493.2 218.9L497.0 229.5L500.6 242.1L503.3 257.7L505.3 273.5L506.8 291.4L507.8 309.3L508.6 329.0L509.0 349.6L509.4 371.4L509.4 392.3L509.4 412.8L509.0 435.0L508.6 455.2L508.2 474.2L507.4 492.7L506.4 509.3L505.0 525.1L503.2 541.7L501.1 557.6L499.1 572.0L496.9 585.2L494.7 596.9L492.2 606.2L489.4 614.4L486.3 620.9L481.8 626.5L479.5 629.3M486.8 196.7L492.6 203.1L499.5 211.1L505.4 220.1L511.0 230.9L516.2 243.7L520.3 259.4L523.3 275.2L525.5 293.1L527.0 310.8L528.2 330.3L528.8 350.6L529.4 372.1L529.4 392.7L529.4 412.8L528.7 434.6L528.2 454.4L527.6 473.1L526.4 491.3L524.9 507.7L522.9 523.2L520.1 539.7L517.1 555.5L514.0 569.8L510.8 583.0L507.6 594.7L503.9 604.0L499.7 612.4L495.1 619.1L488.5 625.4L485.1 628.5M492.6 197.6L500.2 204.1L509.2 212.3L517.0 221.5L524.4 232.5L531.2 245.4L536.5 261.3L540.5 277.1L543.4 295.0L545.4 312.5L546.8 331.8L547.7 351.7L548.4 372.9L548.4 393.1L548.4 412.8L547.6 434.2L546.8 453.5L546.1 471.9L544.5 489.7L542.6 505.9L539.9 521.1L536.3 537.5L532.3 553.1L528.3 567.4L524.1 580.5L519.8 592.2L515.0 601.5L509.6 610.2L503.5 617.1L494.9 624.2L490.4 627.7M498.1 198.5L507.4 205.2L518.4 213.6L527.9 223.0L536.9 234.2L545.3 247.3L551.7 263.3L556.6 279.1L560.2 297.0L562.6 314.3L564.4 333.4L565.4 353.0L566.3 373.7L566.3 393.5L566.3 412.8L565.3 433.7L564.4 452.6L563.5 470.5L561.5 488.0L559.2 503.9L555.9 518.9L551.4 535.1L546.6 550.6L541.8 564.8L536.5 577.9L531.4 589.6L525.5 598.9L518.9 607.8L511.4 615.0L500.9 622.9L495.4 626.4M503.2 199.5L514.0 206.2L526.9 214.9L538.0 224.5L548.4 235.9L558.2 249.1L565.8 265.3L571.5 281.1L575.6 299.0L578.4 316.1L580.5 335.0L581.7 354.2L582.8 374.6L582.8 393.9L582.8 412.8L581.6 433.2L580.5 451.6L579.5 469.2L577.2 486.3L574.5 501.9L570.6 516.7L565.4 532.7L559.8 548.0L554.1 562.2L548.0 575.2L542.0 586.9L535.1 596.2L527.4 605.4L518.7 612.9L506.4 621.7L500.0 624.8M507.7 200.4L520.0 207.2L534.5 216.1L547.0 225.9L558.9 237.5L569.9 250.9L578.4 267.3L584.9 283.1L589.6 301.0L592.7 317.8L595.1 336.5L596.5 355.4L597.7 375.4L597.7 394.4L597.7 412.8L596.3 432.7L595.1 450.7L594.0 467.9L591.3 484.7L588.3 500.0L584.0 514.5L578.1 530.4L571.7 545.6L565.3 559.7L558.4 572.6L551.6 584.3L543.8 593.6L535.1 603.1L525.3 610.8L511.3 620.4L504.1 623.4M511.8 201.3L525.2 208.2L541.2 217.3L555.0 227.2L568.1 239.1L580.3 252.6L589.6 269.1L596.7 284.9L601.9 302.8L605.4 319.5L608.0 337.9L609.5 356.5L610.8 376.2L610.8 394.7L610.8 412.8L609.3 432.3L608.0 449.8L606.7 466.7L603.8 483.1L600.4 498.3L595.7 512.5L589.2 528.2L582.2 543.3L575.2 557.3L567.6 570.3L560.1 582.0L551.5 591.3L541.9 600.9L531.1 608.9L515.7 619.3L507.8 622.1M515.2 202.2L529.7 209.0L547.0 218.3L561.9 228.4L575.9 240.4L589.1 254.1L599.2 270.7L606.9 286.5L612.4 304.4L616.2 320.9L619.0 339.2L620.6 357.4L622.0 376.9L622.0 395.1L622.0 412.8L620.4 431.9L619.0 449.0L617.6 465.7L614.5 481.8L610.8 496.7L605.7 510.7L598.8 526.3L591.2 541.2L583.6 555.2L575.4 568.1L567.3 579.8L558.0 589.1L547.7 599.0L536.0 607.2L519.5 618.0L510.9 621.0M518.0 203.2L533.4 209.8L551.7 219.2L567.5 229.4L582.4 241.6L596.3 255.4L607.0 272.1L615.2 287.9L621.1 305.8L625.0 322.1L628.1 340.3L629.8 358.3L631.3 377.4L631.3 395.4L631.3 412.8L629.6 431.6L628.0 448.4L626.6 464.8L623.2 480.6L619.4 495.4L614.0 509.2L606.6 524.7L598.6 539.5L590.5 553.4L581.8 566.3L573.3 578.0L563.4 587.3L552.5 597.4L540.1 605.8L522.6 616.9L513.5 620.1M520.2 203.9L536.3 210.4L555.4 219.9L571.9 230.3L587.4 242.5L602.0 256.4L613.1 273.2L621.6 289.0L627.8 306.9L631.9 323.1L635.1 341.2L636.9 358.9L638.4 377.9L638.4 395.6L638.4 412.8L636.7 431.3L635.1 447.9L633.5 464.0L630.1 479.7L626.1 494.3L620.4 508.0L612.7 523.4L604.3 538.1L595.9 552.0L586.8 564.9L577.9 576.6L567.6 585.9L556.2 596.1L543.3 604.6L525.0 616.1L515.5 619.4M521.8 204.4L538.3 210.8L558.0 220.4L575.0 230.8L591.0 243.2L606.0 257.1L617.5 274.0L626.2 289.8L632.6 307.7L636.8 323.8L640.1 341.8L641.9 359.4L643.5 378.2L643.5 395.8L643.5 412.8L641.7 431.1L640.1 447.5L638.5 463.5L634.9 479.0L630.8 493.5L625.0 507.1L617.0 522.4L608.4 537.1L599.7 551.0L590.4 563.8L581.2 575.5L570.6 584.8L558.8 595.1L545.5 603.8L526.7 615.3L516.9 618.9M522.7 204.7L539.5 211.2L559.5 220.8L576.8 231.2L593.1 243.6L608.3 257.6L620.0 274.4L628.9 290.2L635.4 308.1L639.7 324.3L643.0 342.2L644.9 359.7L646.5 378.4L646.5 395.9L646.5 412.8L644.7 431.0L643.0 447.3L641.4 463.2L637.8 478.6L633.6 493.0L627.6 506.6L619.6 521.9L610.8 536.5L602.0 550.4L592.5 563.2L583.1 574.9L572.4 584.2L560.4 594.5L546.9 603.1L527.7 614.7L517.7 618.6M523.0 204.8L539.9 211.4L560.0 221.0L577.4 231.6L593.8 244.0L609.1 258.0L620.9 274.9L629.8 290.7L636.3 308.6L640.7 324.7L644.0 342.6L645.9 360.1L647.5 378.5L647.5 395.9L647.5 412.8L645.7 431.0L644.0 447.2L642.4 463.1L638.7 478.2L634.5 492.6L628.5 506.1L620.4 521.4L611.6 536.0L602.7 549.9L593.2 562.7L583.7 574.4L572.9 583.7L560.9 594.1L547.3 602.8L528.0 614.5L518.0 618.5" fill="none" stroke="#200400" stroke-width="1" shape-rendering="crispEdges"/>
</svg>
<div class="a" style="left:238px;top:413px;width:47px;height:1px;background:#a82828"></div>
<div class="a" style="left:466px;top:413px;width:11px;height:16px;background:#fff"></div>
<div class="a" style="left:467px;top:415.50px;font:bold 13px/13px 'Liberation Sans',sans-serif;color:#000;white-space:nowrap;">Y</div>
<div class="a" style="left:229.5px;top:415.60px;font:bold 13px/13px 'Liberation Sans',sans-serif;color:#000;white-space:nowrap;">X</div>
<div class="a" style="left:466.5px;top:176.60px;font:13px/13px 'Liberation Sans',sans-serif;color:#000;white-space:nowrap;-webkit-text-stroke:0.3px #000;">Z</div>
<div class="a" style="left:467px;top:190px;width:1px;height:4px;background:#000"></div>
<div class="a" style="left:4px;top:694px;width:1016px;height:1px;background:#9d9a8a"></div>
<div class="a" style="left:6px;top:694px;width:42px;height:20px;background:#e8e5d6;border-right:2px solid #8e8b7c;border-bottom:2px solid #8e8b7c;border-bottom-right-radius:3px"></div>
<div class="a" style="left:13.4px;top:697.24px;font:12px/12px 'Liberation Sans',sans-serif;color:#000;white-space:nowrap;transform:scaleX(0.8669);transform-origin:0 0;">Theta</div>
<div class="a" style="left:49px;top:694px;width:40px;height:20px;background:#e8e5d6;border-bottom:2px solid #8e8b7c"></div>
<div class="a" style="left:54.9px;top:697.24px;font:12px/12px 'Liberation Sans',sans-serif;color:#000;white-space:nowrap;transform:scaleX(0.8245);transform-origin:0 0;">Phi</div>
<div class="a" style="left:90px;top:693px;width:44px;height:23px;background:#ECE9D8;border-left:1px solid #fff;border-right:2px solid #8e8b7c;border-bottom:2px solid #8e8b7c;border-bottom-right-radius:3px"></div>
<div class="a" style="left:97px;top:699.64px;font:12px/12px 'Liberation Sans',sans-serif;color:#000;white-space:nowrap;transform:scaleX(0.9192);transform-origin:0 0;">Total</div>
<div class="a" style="left:0;top:717px;width:1024px;height:2px;background:#8e8b7c"></div>
<div class="a" style="left:0;top:719px;width:1024px;height:1px;background:#fff"></div>
<div class="a" style="left:0;top:720px;width:1px;height:18px;background:#fff"></div>
<div class="a" style="left:0;top:738px;width:1024px;height:30px;background:linear-gradient(#3a6fd8 0px,#5a96f5 1px,#3d7ff0 3px,#2a68e0 6px,#2360dc 22px,#1f56cc 27px,#1a48b0 30px)"></div>
<div class="a" style="left:0;top:738px;width:101px;height:30px;border-radius:0 13px 13px 0;background:linear-gradient(#3f9c3f 0px,#79c879 2px,#52b052 5px,#3c9d3c 12px,#379337 22px,#2f7f2f 27px,#2a6a2a 30px)"></div>
<svg class="a" style="left:10px;top:744px" width="20" height="17" viewBox="0 0 20 17"><path d="M2 2Q5 0 9 2L8 8Q5 6 1 8Z" fill="#f06030"/><path d="M10 2Q13 4 18 2L17 8Q13 10 9 8Z" fill="#50c040"/><path d="M1 9Q5 7 8 9L7 15Q4 13 0 15Z" fill="#4080f0"/><path d="M9 9Q13 11 17 9L16 15Q12 17 8 15Z" fill="#f0c020"/></svg>
<svg class="a" style="left:38px;top:742px;overflow:visible" width="43.0" height="19"><path transform="translate(0.0 0) scale(0.95) skewX(-14)" d="M1 1V18M1 1H8V6H1M1 3.5H8M11 1H18V18L16 17M11 1V6H18M11 3.5H18M5 9H15M4 13H16M8 9V17M12 9V17" fill="none" stroke="#fff" stroke-width="1.3"/><path transform="translate(21.5 0) scale(0.95) skewX(-14)" d="M4 1L1 11L8 18M8 5L4 18M1 7H9M13 1L11 6H18L17 4M11 9H18V17H11Z" fill="none" stroke="#fff" stroke-width="1.3"/></svg>
<svg class="a" style="left:112px;top:744px" width="18" height="17" viewBox="0 0 18 17"><ellipse cx="9" cy="9" rx="8" ry="4" fill="none" stroke="#e0a020" stroke-width="1.5" transform="rotate(-30 9 9)"/><circle cx="9.5" cy="9" r="5.5" fill="#2080e0"/><path d="M6 9H13Q13 5 9.5 5Q6 5 6 9Q6 13 10 13L13 12" fill="none" stroke="#fff" stroke-width="1.5"/></svg>
<svg class="a" style="left:136px;top:744px" width="16" height="17" viewBox="0 0 16 17"><rect x="1" y="2" width="14" height="14" rx="3" fill="#fff" stroke="#1040a0"/><circle cx="8" cy="9" r="4" fill="none" stroke="#2060c0" stroke-width="1.5"/><path d="M8 9L13 3" stroke="#1040a0" stroke-width="1.5"/></svg>
<div class="a" style="left:195px;top:741px;width:119px;height:25px;border-radius:3px;background:linear-gradient(#6aa2fa 0px,#4a8af6 2px,#3c80f4 5px,#3a7cf2 22px,#3370e4 28px);border-right:1px solid #2858c0;border-bottom:1px solid #2858c0;"></div>
<div class="a" style="left:316px;top:741px;width:119px;height:25px;border-radius:3px;background:linear-gradient(#6aa2fa 0px,#4a8af6 2px,#3c80f4 5px,#3a7cf2 22px,#3370e4 28px);border-right:1px solid #2858c0;border-bottom:1px solid #2858c0;"></div>
<div class="a" style="left:436px;top:741px;width:121px;height:25px;border-radius:3px;background:linear-gradient(#6aa2fa 0px,#4a8af6 2px,#3c80f4 5px,#3a7cf2 22px,#3370e4 28px);border-right:1px solid #2858c0;border-bottom:1px solid #2858c0;"></div>
<div class="a" style="left:559px;top:741px;width:120px;height:25px;border-radius:3px;background:linear-gradient(#6aa2fa 0px,#4a8af6 2px,#3c80f4 5px,#3a7cf2 22px,#3370e4 28px);border-right:1px solid #2858c0;border-bottom:1px solid #2858c0;"></div>
<div class="a" style="left:680px;top:741px;width:123px;height:25px;border-radius:3px;background:linear-gradient(#1a44a8 0px,#1e4cb4 3px,#1e50bc 26px,#2458c8 28px);border:1px solid #163a90;"></div>
<svg class="a" style="left:204px;top:745px" width="16" height="15" viewBox="0 0 16 15"><path d="M1 3H6L7 4H15V14H1Z" fill="#f0d070" stroke="#a08030"/><path d="M1 6H15" stroke="#fff0b0"/></svg>
<div class="a" style="left:223px;top:747.27px;font:bold 14px/14px 'Liberation Serif',serif;color:#e0e0e0;white-space:nowrap;">2</div>
<div class="a" style="left:235px;top:747.27px;font:14px/14px 'Liberation Serif',serif;color:#fff;white-space:nowrap;transform:scaleX(0.8082);transform-origin:0 0;">Windows...</div>
<svg class="a" style="left:299px;top:750px" width="11" height="6"><path d="M0 0H11L5.5 6Z" fill="#fff"/></svg>
<svg class="a" style="left:325px;top:745px" width="16" height="15" viewBox="0 0 16 15"><rect x="1" y="1" width="14" height="13" fill="#e8ecf8" stroke="#6070a0"/><path d="M2 3L4 12L6.5 5L9 12L12 3" stroke="#2040a0" stroke-width="2" fill="none"/></svg>
<div class="a" style="left:343px;top:747.27px;font:bold 14px/14px 'Liberation Serif',serif;color:#e0e0e0;white-space:nowrap;">2</div>
<div class="a" style="left:354.8px;top:747.27px;font:14px/14px 'Liberation Serif',serif;color:#fff;white-space:nowrap;transform:scaleX(0.8172);transform-origin:0 0;">Microsoft...</div>
<svg class="a" style="left:420px;top:750px" width="11" height="6"><path d="M0 0H11L5.5 6Z" fill="#fff"/></svg>
<svg class="a" style="left:446px;top:745px" width="16" height="15" viewBox="0 0 16 15"><rect x="0.5" y="0.5" width="15" height="14" rx="1.5" fill="#f0b040" stroke="#c07010"/><circle cx="8" cy="7.5" r="5" fill="#fff4d0" stroke="#c06010"/><path d="M8 4V7.5H11" stroke="#c06010" fill="none"/></svg>
<div class="a" style="left:465.4px;top:747.27px;font:14px/14px 'Liberation Serif',serif;color:#fff;white-space:nowrap;transform:scaleX(0.8483);transform-origin:0 0;">Ricky_Lin&nbsp;-&nbsp;...</div>
<svg class="a" style="left:568px;top:744px" width="16" height="16" viewBox="0 0 16 16"><rect x="0.5" y="0.5" width="15" height="15" fill="#208070" stroke="#d0e0d0"/><path d="M2 13L5 3L8 13M3.5 9H6.5M10 3V13H14" stroke="#fff" stroke-width="1.3" fill="none"/></svg>
<div class="a" style="left:587.5px;top:747.27px;font:14px/14px 'Liberation Serif',serif;color:#fff;white-space:nowrap;transform:scaleX(0.8308);transform-origin:0 0;">AutoCAD&nbsp;200...</div>
<svg class="a" style="left:689px;top:744px" width="18" height="18" viewBox="0 0 20 20"><rect x="0.5" y="4" width="4" height="13" fill="#c01818" stroke="#000" stroke-width="0.6"/><rect x="3" y="14.5" width="10" height="4" fill="#f0e020" stroke="#000" stroke-width="0.8"/><circle cx="9.5" cy="7" r="5.5" fill="#f0e8f0" stroke="#000" stroke-width="1.5"/><path d="M9 1.5Q14 1 15 6L12 8L10 4Z" fill="#111"/><path d="M3 13L9 7L11 9L5 15Z" fill="#20c020" stroke="#000" stroke-width="0.6"/><path d="M11 12L18 18L16 19.5L9.5 14Z" fill="#101070" stroke="#000" stroke-width="0.5"/><path d="M12 14L15 17" stroke="#c0c0ff" stroke-width="0.8"/></svg>
<div class="a" style="left:709.8px;top:747.27px;font:14px/14px 'Liberation Serif',serif;color:#fff;white-space:nowrap;transform:scaleX(0.8325);transform-origin:0 0;">Emquestviewer</div>
<div class="a" style="left:815px;top:738px;width:209px;height:30px;background:linear-gradient(#2a90e8 0px,#22a0f8 2px,#1591ea 6px,#1290e8 22px,#0e84dc 27px,#0c74c8 30px);border-left:1px solid #1060b0"></div>
<div class="a" style="left:806px;top:745px;width:17px;height:17px;border-radius:50%;background:radial-gradient(circle at 40% 35%,#c8e0ff,#5a9af0 60%,#3a70d0);border:1px solid #e0f0ff"></div>
<svg class="a" style="left:809px;top:748px" width="12" height="12"><path d="M7.5 2L3.5 6L7.5 10" stroke="#fff" stroke-width="2.2" fill="none"/></svg>
<svg class="a" style="left:826px;top:745px" width="16" height="16" viewBox="0 0 16 16"><rect x="0.5" y="0.5" width="15" height="15" fill="#f4b040" stroke="#fff"/><circle cx="8" cy="8" r="5" fill="#fde0a0" stroke="#c06000"/><path d="M8 5V8H10.5" stroke="#c06000" fill="none"/></svg>
<svg class="a" style="left:845px;top:745px" width="15" height="16" viewBox="0 0 15 16"><rect x="0.5" y="0.5" width="14" height="15" fill="#e86820" stroke="#f0a060"/><path d="M3 12H12M4 10Q7 11 10 9M6 3Q4 5 7 6T7 9" stroke="#fff" stroke-width="1.2" fill="none"/></svg>
<svg class="a" style="left:863px;top:744px" width="16" height="17" viewBox="0 0 16 17"><circle cx="6" cy="4" r="3" fill="#f0e0d0"/><path d="M2 9Q6 6 10 9V15H2Z" fill="#d0d8e8"/><path d="M9 10L15 16M15 10L9 16" stroke="#e01010" stroke-width="2"/></svg>
<svg class="a" style="left:880px;top:744px" width="17" height="17" viewBox="0 0 17 17"><ellipse cx="8.5" cy="8" rx="8" ry="7" fill="#60c040"/><path d="M4 8L7.5 11.5L13 5" stroke="#fff" stroke-width="2.2" fill="none"/></svg>
<svg class="a" style="left:898px;top:744px" width="16" height="16" viewBox="0 0 16 16"><rect x="3" y="1" width="10" height="6" fill="#e02020"/><rect x="1" y="7" width="14" height="5" fill="#2040c0"/><path d="M3 12L1 15H15L13 12" fill="#e0e0f0"/><path d="M5 3H11" stroke="#fff"/></svg>
<svg class="a" style="left:916px;top:744px" width="17" height="17" viewBox="0 0 17 17"><circle cx="8" cy="8" r="7.5" fill="#1050a0"/><path d="M1 9L5 9L7 3L9 13L11 6L15 8" stroke="#a0e0ff" stroke-width="1.3" fill="none"/><circle cx="12.5" cy="12.5" r="4" fill="#30b030"/><path d="M10.5 12.5L12 14L15 11" stroke="#fff" stroke-width="1.2" fill="none"/></svg>
<svg class="a" style="left:933px;top:744px" width="16" height="17" viewBox="0 0 16 17"><rect x="6" y="1" width="9" height="7" fill="#e0ecff" stroke="#4070c0"/><rect x="1" y="7" width="9" height="7" fill="#c8dcf8" stroke="#4070c0"/><path d="M3 14V16H9" stroke="#80a0d0"/></svg>
<svg class="a" style="left:957px;top:746.5px;overflow:visible" width="24" height="11.5"><path transform="translate(0 0) scale(0.575)" d="M9 1V17M9 8H15M1 17H18" fill="none" stroke="#fff" stroke-width="1.3"/><path transform="translate(12 0) scale(0.575)" d="M5 1L2 6M4 4H17M1 10H19M10 4V18" fill="none" stroke="#fff" stroke-width="1.3"/></svg>
<div class="a" style="left:985px;top:746.72px;font:12.5px/12.5px 'Liberation Sans',sans-serif;color:#fff;white-space:nowrap;transform:scaleX(0.8152);transform-origin:0 0;">10:23</div></body></html>
